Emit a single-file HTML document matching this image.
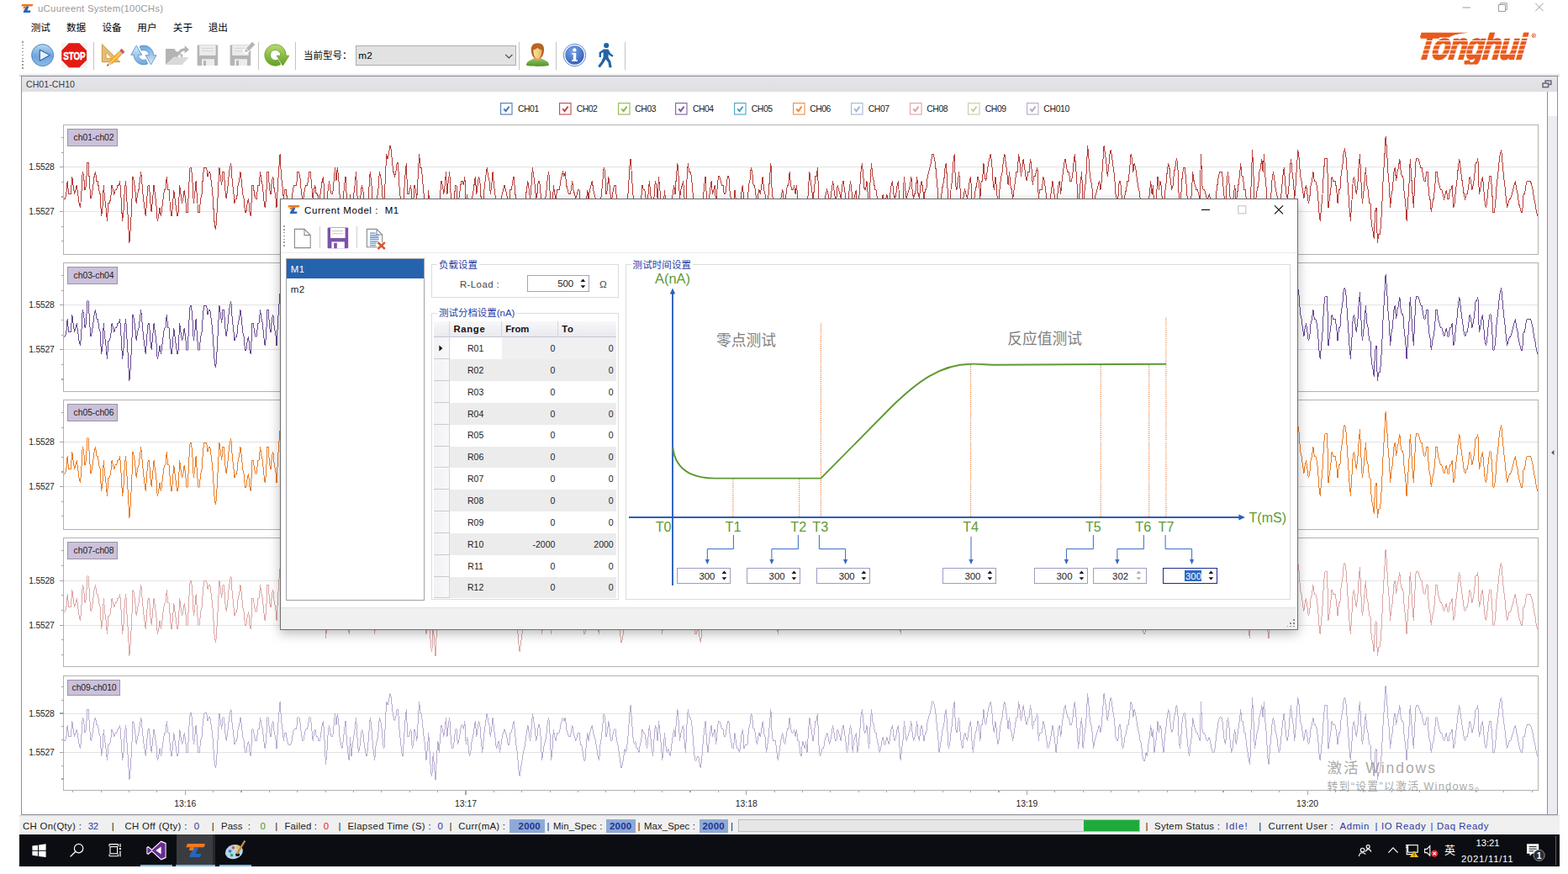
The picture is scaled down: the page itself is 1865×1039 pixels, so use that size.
<!DOCTYPE html><html lang="zh"><head><meta charset="utf-8"><title>uCuureent System(100CHs)</title><style>html,body{margin:0;padding:0;background:#fff}body{width:1865px;height:1039px;overflow:hidden;position:relative;font-family:"Liberation Sans","Noto Sans CJK SC",sans-serif}div,span{position:absolute;white-space:pre}svg{overflow:visible}</style></head><body>
<svg style="position:absolute;left:25px;top:5px" width="14.5" height="10" viewBox="0 0 14.5 10"><path d="M1.2 0H14.5L13.6 2.6H0.2Z" fill="#f07820"/><path d="M6.4 2.6H9.6L7.4 7.6H11.6L10.8 10H2.6L3.4 7.6Z" fill="#2a64b4"/><path d="M3.2 2.6H6.4L5.4 5H2.4Z" fill="#f07820"/></svg>
<span id="t1" style="top:2.20px;font-size:11.4px;line-height:16px;height:16px;color:#9a9a9a;left:45.00px;letter-spacing:0.257px;">uCuureent System(100CHs)</span>
<svg style="position:absolute;left:1735px;top:0" width="110" height="20" viewBox="0 0 110 20" fill="none" stroke="#9b9b9b" stroke-width="1"><path d="M4.6 9H14"/><path d="M47.5 5.5H55.5V13.5H47.5Z"/><path d="M49.5 5.5V3.7H57.3V11.5H55.5"/><path d="M91.3 3.8L100.7 13.2M100.7 3.8L91.3 13.2"/></svg>
<span id="t2" style="top:24.60px;font-size:11.6px;line-height:16px;height:16px;color:#000;left:36.70px;">测试</span>
<span id="t3" style="top:24.60px;font-size:11.6px;line-height:16px;height:16px;color:#000;left:79.00px;">数据</span>
<span id="t4" style="top:24.60px;font-size:11.6px;line-height:16px;height:16px;color:#000;left:121.50px;">设备</span>
<span id="t5" style="top:24.60px;font-size:11.6px;line-height:16px;height:16px;color:#000;left:163.30px;">用户</span>
<span id="t6" style="top:24.60px;font-size:11.6px;line-height:16px;height:16px;color:#000;left:205.80px;">关于</span>
<span id="t7" style="top:24.60px;font-size:11.6px;line-height:16px;height:16px;color:#000;left:247.70px;">退出</span>
<div style="left:23px;top:86.5px;width:1832px;height:4px;background:linear-gradient(#fff,#e9e9ec 50%,#c9c9ce)"></div>
<div style="left:26px;top:49px;width:1.6px;height:1.6px;background:#9c9c9c"></div>
<div style="left:26px;top:52.9px;width:1.6px;height:1.6px;background:#9c9c9c"></div>
<div style="left:26px;top:56.8px;width:1.6px;height:1.6px;background:#9c9c9c"></div>
<div style="left:26px;top:60.7px;width:1.6px;height:1.6px;background:#9c9c9c"></div>
<div style="left:26px;top:64.6px;width:1.6px;height:1.6px;background:#9c9c9c"></div>
<div style="left:26px;top:68.5px;width:1.6px;height:1.6px;background:#9c9c9c"></div>
<div style="left:26px;top:72.4px;width:1.6px;height:1.6px;background:#9c9c9c"></div>
<div style="left:26px;top:76.3px;width:1.6px;height:1.6px;background:#9c9c9c"></div>
<div style="left:26px;top:80.2px;width:1.6px;height:1.6px;background:#9c9c9c"></div>
<div style="left:110.7px;top:49.8px;width:1.2px;height:32.8px;background:#c4c4c4"></div>
<div style="left:306.9px;top:49.8px;width:1.2px;height:32.8px;background:#c4c4c4"></div>
<div style="left:350.8px;top:49.8px;width:1.2px;height:32.8px;background:#c4c4c4"></div>
<div style="left:617.3px;top:49.8px;width:1.2px;height:32.8px;background:#c4c4c4"></div>
<div style="left:661px;top:49.8px;width:1.2px;height:32.8px;background:#c4c4c4"></div>
<div style="left:742.9px;top:49.8px;width:1.2px;height:32.8px;background:#c4c4c4"></div>
<svg style="position:absolute;left:36px;top:51px" width="30" height="30" viewBox="0 0 30 30"><defs><linearGradient id="gp" x1="0" y1="0" x2="0" y2="1"><stop offset="0" stop-color="#b9d7f0"/><stop offset=".55" stop-color="#6ea6dc"/><stop offset="1" stop-color="#8cbbe6"/></linearGradient></defs><circle cx="14.6" cy="14.6" r="13" fill="url(#gp)" stroke="#4d86c4" stroke-width="1"/><path d="M11.3 8.2V21.2L23.4 14.6Z" fill="#e8f1fb" stroke="#2f63a8" stroke-width="1.1" stroke-linejoin="round"/></svg>
<svg style="position:absolute;left:72px;top:50px" width="33" height="32" viewBox="0 0 33 32"><rect x="1" y="1" width="31" height="30" fill="#f3f3f3"/><path d="M9.9 1.3H22.3L31 10V21.6L22.3 30.2H9.9L1.3 21.6V10Z" fill="#e41a12"/><text x="16.4" y="20.9" font-family="Liberation Sans,sans-serif" font-weight="700" font-size="13.4" fill="#fff" text-anchor="middle" textLength="26.4" lengthAdjust="spacingAndGlyphs" stroke="#fff" stroke-width=".55">STOP</text></svg>
<svg style="position:absolute;left:119px;top:50px" width="32" height="32" viewBox="0 0 32 32"><path d="M2.4 2.7V23.6H23.7Z" fill="#e6be78" stroke="#c8963c" stroke-width="1"/><path d="M7.2 12.5V19.4H14.2Z" fill="#fff" stroke="#c8963c" stroke-width=".8"/><g transform="translate(25.4,11.8) rotate(46) scale(1.12,1)"><rect x="-2.4" y="-3" width="4.8" height="3.6" fill="#d9534f"/><rect x="-2.4" y=".6" width="4.8" height="1.8" fill="#b9c4d0"/><rect x="-2.4" y="2.4" width="4.8" height="16" fill="#f2a830"/><rect x="-.8" y="2.4" width="1.6" height="16" fill="#f8cf6a"/><path d="M-2.4 18.4H2.4L0 24Z" fill="#e8c9a0"/><path d="M-.9 21.8H.9L0 24Z" fill="#334"/></g></svg>
<svg style="position:absolute;left:154px;top:51px" width="34" height="30" viewBox="0 0 34 30"><defs><linearGradient id="gr" x1="0" y1="0" x2="0" y2="1"><stop offset="0" stop-color="#dcedf9"/><stop offset="1" stop-color="#6aa5dc"/></linearGradient></defs><g fill="url(#gr)" stroke="#5088c6" stroke-width=".8" stroke-linejoin="round"><path d="M8.2 3.2L14.7 14.3H10.7A6.1 6.1 0 0 0 19.4 19.8L21.7 24.8A11.6 11.6 0 0 1 5.2 14.3H1.8Z"/><path d="M8.2 3.2L14.7 14.3H10.7A6.1 6.1 0 0 0 19.4 19.8L21.7 24.8A11.6 11.6 0 0 1 5.2 14.3H1.8Z" transform="rotate(180 16.9 14.5)"/></g></svg>
<svg style="position:absolute;left:195px;top:51px" width="32" height="28" viewBox="0 0 32 28"><path d="M2 7H12.6L14.4 10.2H17V16.8H12L2 26Z" fill="#b4b4b4"/><path d="M2.6 26L12 17H29.6L21.6 26Z" fill="#d9d9d9"/><path d="M16.4 14.6C16.6 9.4 19.8 6.4 24.6 6.2V3L30 8L24.6 12.6V9.6C21.4 9.6 19.6 11.2 19.4 14.6Z" fill="#b4b4b4"/><path d="M19.8 16.8V13.4H22.2V16.8Z" fill="#b4b4b4"/></svg>
<svg style="position:absolute;left:234.4px;top:52.8px" width="30" height="26" viewBox="0 0 30 26"><rect x=".6" y=".4" width="24.6" height="24.6" rx="1.2" fill="#b5b5b5"/><rect x="3.2" y=".9" width="19.4" height="12" fill="#ececec"/><path d="M6 4.4H19.6M6 7.6H19.6" stroke="#cfcfcf" stroke-width=".8"/><rect x="6" y="17.2" width="15" height="7.8" fill="#ececec"/><rect x="8" y="19" width="3" height="6" fill="#b5b5b5"/></svg>
<svg style="position:absolute;left:272.6px;top:52.8px" width="30" height="26" viewBox="0 0 30 26"><rect x=".6" y=".4" width="24.6" height="24.6" rx="1.2" fill="#b5b5b5"/><rect x="3.2" y=".9" width="19.4" height="12" fill="#ececec"/><path d="M6 4.4H19.6M6 7.6H19.6" stroke="#cfcfcf" stroke-width=".8"/><rect x="6" y="17.2" width="15" height="7.8" fill="#ececec"/><rect x="8" y="19" width="3" height="6" fill="#b5b5b5"/><g transform="translate(26.6,0.6) rotate(45)"><rect x="-3.2" y="-3.4" width="6.4" height="16.4" fill="#fff"/><rect x="-2.3" y="-3" width="4.6" height="10.4" fill="#b5b5b5"/><path d="M-2.3 8.2H2.3L0 12Z" fill="#b5b5b5"/></g></svg>
<svg style="position:absolute;left:313px;top:51px" width="33" height="30" viewBox="0 0 33 30"><defs><linearGradient id="gg" x1="0" y1="0" x2="0" y2="1"><stop offset="0" stop-color="#b8db6e"/><stop offset="1" stop-color="#62a024"/></linearGradient></defs><path d="M16.2 15.2H20.7A6.2 6.2 0 1 0 17.6 19.9L20.8 25.5A12.65 12.65 0 1 1 27.15 15.2H30.8L23.5 27Z" fill="url(#gg)" stroke="#5e9a22" stroke-width=".8" stroke-linejoin="round"/></svg>
<span id="t8" style="top:58.00px;font-size:11.5px;line-height:16px;height:16px;color:#000;left:361.00px;">当前型号：</span>
<div style="left:422.8px;top:54.2px;width:191px;height:23.6px;background:#e2e2e2;border:1px solid #adadad;box-sizing:border-box"></div>
<span id="t9" style="top:57.70px;font-size:11.8px;line-height:17px;height:17px;color:#000;left:426.30px;letter-spacing:0.109px;">m2</span>
<svg style="position:absolute;left:600px;top:63px" width="11" height="8" viewBox="0 0 11 8"><path d="M1.2 1.8L5.3 5.9L9.4 1.8" fill="none" stroke="#444" stroke-width="1.1"/></svg>
<svg style="position:absolute;left:624px;top:50px" width="31" height="31" viewBox="0 0 31 31"><defs><linearGradient id="gu" x1="0" y1="0" x2="0" y2="1"><stop offset="0" stop-color="#8cc45c"/><stop offset="1" stop-color="#4f922c"/></linearGradient><linearGradient id="gf" x1="0" y1="0" x2="1" y2="0"><stop offset="0" stop-color="#fbe3a6"/><stop offset="1" stop-color="#f0b860"/></linearGradient></defs><path d="M2 27.6C2 22.8 7 21.4 11.2 19.8H19.6C23.8 21.4 29 22.8 29 27.6C29 29.4 2 29.4 2 27.6Z" fill="url(#gu)"/><path d="M11.2 16.8H19.6V20.4C17.6 22.4 13.2 22.4 11.2 20.4Z" fill="#d9a05a"/><path d="M7.8 10.6C7 4.4 10.6 1.2 15.4 1.2C20.4 1.2 24 4.4 23 10.6C22.6 14 21.6 17 19.8 18.6H11C9.2 17 8.2 14 7.8 10.6Z" fill="#b86424"/><path d="M10.4 9.4C12.4 9 14 8.2 15.2 6.8C16.6 8.2 18.6 9 20.4 9.4C20.4 14.2 19 19.6 15.4 19.6C11.8 19.6 10.4 14.2 10.4 9.4Z" fill="url(#gf)"/></svg>
<svg style="position:absolute;left:668px;top:50px" width="31" height="31" viewBox="0 0 31 31"><defs><radialGradient id="gi" cx=".4" cy=".3" r=".8"><stop offset="0" stop-color="#7aa4e6"/><stop offset="1" stop-color="#2c58b4"/></radialGradient></defs><circle cx="15.5" cy="15.5" r="13.2" fill="#fff" stroke="#4a70c4" stroke-width=".9"/><circle cx="15.5" cy="15.5" r="11.2" fill="url(#gi)"/><circle cx="15.4" cy="9.4" r="2.1" fill="#fff"/><path d="M12 13H17.2V21.2H19V22.8H12V21.2H13.8V14.6H12Z" fill="#fff"/></svg>
<svg style="position:absolute;left:709px;top:49.5px" width="24" height="32" viewBox="0 0 24 32"><g fill="#2563a6"><circle cx="12.2" cy="4" r="3.1"/><path d="M9 8.6H14.4L17.2 13.6L20.6 16L19.4 17.8L15.2 15.2L14.6 14V18.6L17.4 23L18.6 30.2H15.4L14.4 24.2L11.6 20.6L8.4 25.6L4.6 30.4L2.2 28.6L6 23.4L8.6 18V12L6 13.6V18H3.6V12.2Z"/></g></svg>
<svg style="position:absolute;left:1680px;top:30px" width="160" height="54" viewBox="0 0 160 54"><clipPath id="lc"><rect x="0" y="8.8" width="160" height="37.8"/></clipPath><g clip-path="url(#lc)"><g transform="translate(3.2,40.3) skewX(-16) scale(.786,1)"><text x="0" y="0" font-family="Liberation Sans,sans-serif" font-weight="700" font-size="44" fill="#e95a1c" stroke="#e95a1c" stroke-width="2.2" letter-spacing="-1.2">Tonghui</text></g></g><path d="M10.6 8.8H67C56 9.8 48 11.6 44 14.4H8.8Z" fill="#e95a1c"/><path d="M0 18.6H150M0 23.8H150M0 29H150M0 34.2H150" stroke="#fff" stroke-width="1"/><circle cx="144.3" cy="12.2" r="2.3" fill="none" stroke="#e95a1c" stroke-width=".8"/><text x="144.3" y="13.6" font-family="Liberation Sans,sans-serif" font-size="3.6" font-weight="700" fill="#e95a1c" text-anchor="middle">R</text></svg>
<div style="left:25.2px;top:90.2px;width:1828px;height:878.4px;background:#fff;border:1px solid #8f8f99;box-sizing:border-box"></div>
<div style="left:26.2px;top:91.2px;width:1826px;height:18px;background:linear-gradient(#e6e6ea,#dedee3)"></div>
<span id="t10" style="top:92.50px;font-size:10.6px;line-height:15px;height:15px;color:#3c3c46;left:31.00px;letter-spacing:0.037px;">CH01-CH10</span>
<svg style="position:absolute;left:1834px;top:94.5px" width="12" height="10" viewBox="0 0 12 10"><g fill="none" stroke="#6c6c7c" stroke-width="1.6"><rect x="4.2" y="1" width="6.6" height="4.4"/><rect x="1" y="4" width="6.6" height="4.6" fill="#dfdfe4"/></g></svg>
<div style="left:1840px;top:109px;width:1px;height:858.6px;background:#8f8f99"></div>
<div style="left:1841px;top:138px;width:11.2px;height:829.6px;background:#ececf1"></div>
<svg style="position:absolute;left:1844px;top:534px" width="6" height="8" viewBox="0 0 6 8"><path d="M4.4 1L1.2 4L4.4 7Z" fill="#555"/></svg>
<svg style="position:absolute;left:595.4px;top:122.2px" width="15" height="15" viewBox="0 0 15 15"><rect x=".6" y=".6" width="13.4" height="13.4" fill="#fff" stroke="#4a7ab6" stroke-width="1.1"/><path d="M4.2 7.4L6.6 10.2L10.6 4.6" fill="none" stroke="#4a7ab6" stroke-width="2"/></svg>
<span id="t11" style="top:121.70px;font-size:10.4px;line-height:15px;height:15px;color:#222;left:616.00px;letter-spacing:-0.459px;">CH01</span>
<svg style="position:absolute;left:665.1px;top:122.2px" width="15" height="15" viewBox="0 0 15 15"><rect x=".6" y=".6" width="13.4" height="13.4" fill="#fff" stroke="#bb4c49" stroke-width="1.1"/><path d="M4.2 7.4L6.6 10.2L10.6 4.6" fill="none" stroke="#bb4c49" stroke-width="2"/></svg>
<span id="t12" style="top:121.70px;font-size:10.4px;line-height:15px;height:15px;color:#222;left:685.70px;letter-spacing:-0.459px;">CH02</span>
<svg style="position:absolute;left:734.7px;top:122.2px" width="15" height="15" viewBox="0 0 15 15"><rect x=".6" y=".6" width="13.4" height="13.4" fill="#fff" stroke="#94b553" stroke-width="1.1"/><path d="M4.2 7.4L6.6 10.2L10.6 4.6" fill="none" stroke="#94b553" stroke-width="2"/></svg>
<span id="t13" style="top:121.70px;font-size:10.4px;line-height:15px;height:15px;color:#222;left:755.30px;letter-spacing:-0.459px;">CH03</span>
<svg style="position:absolute;left:803.3px;top:122.2px" width="15" height="15" viewBox="0 0 15 15"><rect x=".6" y=".6" width="13.4" height="13.4" fill="#fff" stroke="#7b5f9e" stroke-width="1.1"/><path d="M4.2 7.4L6.6 10.2L10.6 4.6" fill="none" stroke="#7b5f9e" stroke-width="2"/></svg>
<span id="t14" style="top:121.70px;font-size:10.4px;line-height:15px;height:15px;color:#222;left:823.90px;letter-spacing:-0.459px;">CH04</span>
<svg style="position:absolute;left:873.2px;top:122.2px" width="15" height="15" viewBox="0 0 15 15"><rect x=".6" y=".6" width="13.4" height="13.4" fill="#fff" stroke="#48a6c0" stroke-width="1.1"/><path d="M4.2 7.4L6.6 10.2L10.6 4.6" fill="none" stroke="#48a6c0" stroke-width="2"/></svg>
<span id="t15" style="top:121.70px;font-size:10.4px;line-height:15px;height:15px;color:#222;left:893.80px;letter-spacing:-0.459px;">CH05</span>
<svg style="position:absolute;left:942.6px;top:122.2px" width="15" height="15" viewBox="0 0 15 15"><rect x=".6" y=".6" width="13.4" height="13.4" fill="#fff" stroke="#f08c3e" stroke-width="1.1"/><path d="M4.2 7.4L6.6 10.2L10.6 4.6" fill="none" stroke="#f08c3e" stroke-width="2"/></svg>
<span id="t16" style="top:121.70px;font-size:10.4px;line-height:15px;height:15px;color:#222;left:963.20px;letter-spacing:-0.459px;">CH06</span>
<svg style="position:absolute;left:1012.2px;top:122.2px" width="15" height="15" viewBox="0 0 15 15"><rect x=".6" y=".6" width="13.4" height="13.4" fill="#fff" stroke="#a3b5d5" stroke-width="1.1"/><path d="M4.2 7.4L6.6 10.2L10.6 4.6" fill="none" stroke="#a3b5d5" stroke-width="2"/></svg>
<span id="t17" style="top:121.70px;font-size:10.4px;line-height:15px;height:15px;color:#222;left:1032.80px;letter-spacing:-0.459px;">CH07</span>
<svg style="position:absolute;left:1081.7px;top:122.2px" width="15" height="15" viewBox="0 0 15 15"><rect x=".6" y=".6" width="13.4" height="13.4" fill="#fff" stroke="#d8a5a4" stroke-width="1.1"/><path d="M4.2 7.4L6.6 10.2L10.6 4.6" fill="none" stroke="#d8a5a4" stroke-width="2"/></svg>
<span id="t18" style="top:121.70px;font-size:10.4px;line-height:15px;height:15px;color:#222;left:1102.30px;letter-spacing:-0.459px;">CH08</span>
<svg style="position:absolute;left:1151.2px;top:122.2px" width="15" height="15" viewBox="0 0 15 15"><rect x=".6" y=".6" width="13.4" height="13.4" fill="#fff" stroke="#c1d2a6" stroke-width="1.1"/><path d="M4.2 7.4L6.6 10.2L10.6 4.6" fill="none" stroke="#c1d2a6" stroke-width="2"/></svg>
<span id="t19" style="top:121.70px;font-size:10.4px;line-height:15px;height:15px;color:#222;left:1171.80px;letter-spacing:-0.459px;">CH09</span>
<svg style="position:absolute;left:1220.7px;top:122.2px" width="15" height="15" viewBox="0 0 15 15"><rect x=".6" y=".6" width="13.4" height="13.4" fill="#fff" stroke="#b6abc7" stroke-width="1.1"/><path d="M4.2 7.4L6.6 10.2L10.6 4.6" fill="none" stroke="#b6abc7" stroke-width="2"/></svg>
<span id="t20" style="top:121.70px;font-size:10.4px;line-height:15px;height:15px;color:#222;left:1241.30px;letter-spacing:-0.339px;">CH010</span>
<div style="left:75.8px;top:198px;width:1754px;height:1px;background:#e3e3e3"></div>
<div style="left:75.8px;top:251px;width:1754px;height:1px;background:#e3e3e3"></div>
<div style="left:75.2px;top:147.9px;width:1755.2px;height:154.7px;border:1.2px solid #b1b1b1;box-sizing:border-box"></div>
<div style="left:73.2px;top:162.883px;width:2.6px;height:1.1px;background:#a6a6a6"></div>
<div style="left:73.2px;top:180.517px;width:2.6px;height:1.1px;background:#a6a6a6"></div>
<div style="left:71.2px;top:198.15px;width:4.6px;height:1.1px;background:#a6a6a6"></div>
<div style="left:73.2px;top:215.783px;width:2.6px;height:1.1px;background:#a6a6a6"></div>
<div style="left:73.2px;top:233.417px;width:2.6px;height:1.1px;background:#a6a6a6"></div>
<div style="left:71.2px;top:251.05px;width:4.6px;height:1.1px;background:#a6a6a6"></div>
<div style="left:73.2px;top:268.683px;width:2.6px;height:1.1px;background:#a6a6a6"></div>
<div style="left:73.2px;top:286.317px;width:2.6px;height:1.1px;background:#a6a6a6"></div>
<span id="t21" style="top:191.30px;font-size:10.4px;line-height:15px;height:15px;color:#222;left:34.30px;letter-spacing:-0.257px;">1.5528</span>
<span id="t22" style="top:244.20px;font-size:10.4px;line-height:15px;height:15px;color:#222;left:34.30px;letter-spacing:-0.257px;">1.5527</span>
<svg style="position:absolute;left:75.8px;top:148.5px" width="1754.0" height="153.5" viewBox="0 148.5 1754.0 153.5"><path d="M0.0 235.7L1.4 235.7L2.8 230.4L4.2 214.6L5.6 230.4L7.0 230.4L8.3 230.4L9.7 209.3L11.1 219.9L12.5 230.4L13.9 225.1L15.3 219.9L16.7 230.4L18.1 241.0L19.5 246.3L20.8 230.4L22.2 204.0L23.6 209.3L25.0 225.1L26.4 219.9L27.8 193.4L29.2 193.4L30.6 219.9L32.0 235.7L33.4 230.4L34.8 219.9L36.1 209.3L37.5 204.0L38.9 214.6L40.3 214.6L41.7 225.1L43.1 230.4L44.5 256.9L45.9 246.3L47.3 219.9L48.6 235.7L50.0 246.3L51.4 262.2L52.8 241.0L54.2 241.0L55.6 235.7L57.0 219.9L58.4 225.1L59.8 230.4L61.2 225.1L62.5 225.1L63.9 219.9L65.3 219.9L66.7 214.6L68.1 235.7L69.5 262.2L70.9 251.6L72.3 225.1L73.7 214.6L75.1 241.0L76.5 262.2L77.8 288.6L79.2 272.8L80.6 246.3L82.0 209.3L83.4 214.6L84.8 225.1L86.2 241.0L87.6 230.4L89.0 225.1L90.3 214.6L91.7 204.0L93.1 219.9L94.5 235.7L95.9 246.3L97.3 256.9L98.7 235.7L100.1 219.9L101.5 219.9L102.9 241.0L104.2 251.6L105.6 235.7L107.0 219.9L108.4 230.4L109.8 241.0L111.2 262.2L112.6 256.9L114.0 246.3L115.4 256.9L116.8 246.3L118.1 235.7L119.5 225.1L120.9 225.1L122.3 209.3L123.7 225.1L125.1 225.1L126.5 246.3L127.9 256.9L129.3 246.3L130.7 225.1L132.0 235.7L133.4 246.3L134.8 256.9L136.2 251.6L137.6 219.9L139.0 230.4L140.4 241.0L141.8 235.7L143.2 225.1L144.6 235.7L145.9 251.6L147.3 251.6L148.7 219.9L150.1 198.7L151.5 198.7L152.9 214.6L154.3 241.0L155.7 230.4L157.1 214.6L158.5 235.7L159.8 251.6L161.2 251.6L162.6 235.7L164.0 230.4L165.4 209.3L166.8 198.7L168.2 198.7L169.6 198.7L171.0 209.3L172.4 204.0L173.8 204.0L175.1 214.6L176.5 225.1L177.9 246.3L179.3 267.5L180.7 272.8L182.1 251.6L183.5 225.1L184.9 198.7L186.3 209.3L187.6 219.9L189.0 204.0L190.4 204.0L191.8 225.1L193.2 235.7L194.6 225.1L196.0 209.3L197.4 198.7L198.8 193.4L200.2 214.6L201.5 225.1L202.9 241.0L204.3 235.7L205.7 235.7L207.1 219.9L208.5 214.6L209.9 204.0L211.3 214.6L212.7 230.4L214.1 235.7L215.4 251.6L216.8 251.6L218.2 241.0L219.6 235.7L221.0 251.6L222.4 256.9L223.8 219.9L225.2 219.9L226.6 230.4L228.0 235.7L229.3 235.7L230.7 219.9L232.1 219.9L233.5 204.0L234.9 214.6L236.3 219.9L237.7 235.7L239.1 246.3L240.5 235.7L241.9 204.0L243.2 204.0L244.6 225.1L246.0 230.4L247.4 214.6L248.8 209.3L250.2 225.1L251.6 230.4L253.0 246.3L254.4 219.9L255.8 198.7L257.1 182.8L258.5 209.3L259.9 219.9L261.3 235.7L262.7 225.1L264.1 225.1L265.5 235.7L266.9 241.0L268.3 241.0L269.7 241.0L271.0 235.7L272.4 225.1L273.8 219.9L275.2 219.9L276.6 219.9L278.0 204.0L279.4 204.0L280.8 209.3L282.2 225.1L283.6 235.7L284.9 235.7L286.3 225.1L287.7 219.9L289.1 219.9L290.5 214.6L291.9 204.0L293.3 204.0L294.7 219.9L296.1 235.7L297.5 225.1L298.8 219.9L300.2 230.4L301.6 230.4L303.0 235.7L304.4 235.7L305.8 225.1L307.2 214.6L308.6 209.3L310.0 235.7L311.4 267.5L312.8 251.6L314.1 225.1L315.5 214.6L316.9 225.1L318.3 230.4L319.7 230.4L321.1 214.6L322.5 198.7L323.9 214.6L325.3 198.7L326.6 209.3L328.0 230.4L329.4 241.0L330.8 246.3L332.2 235.7L333.6 219.9L335.0 209.3L336.4 235.7L337.8 251.6L339.2 262.2L340.5 230.4L341.9 256.9L343.3 241.0L344.7 230.4L346.1 219.9L347.5 204.0L348.9 230.4L350.3 251.6L351.7 246.3L353.1 230.4L354.4 219.9L355.8 225.1L357.2 241.0L358.6 251.6L360.0 256.9L361.4 246.3L362.8 225.1L364.2 204.0L365.6 214.6L367.0 235.7L368.3 251.6L369.7 262.2L371.1 241.0L372.5 235.7L373.9 225.1L375.3 204.0L376.7 209.3L378.1 219.9L379.5 241.0L380.9 246.3L382.2 214.6L383.6 182.8L385.0 188.1L386.4 182.8L387.8 172.2L389.2 177.5L390.6 193.4L392.0 204.0L393.4 209.3L394.8 204.0L396.1 193.4L397.5 193.4L398.9 219.9L400.3 235.7L401.7 251.6L403.1 256.9L404.5 230.4L405.9 209.3L407.3 193.4L408.7 230.4L410.0 230.4L411.4 225.1L412.8 219.9L414.2 246.3L415.6 241.0L417.0 219.9L418.4 225.1L419.8 235.7L421.2 209.3L422.6 182.8L423.9 198.7L425.3 198.7L426.7 214.6L428.1 230.4L429.5 241.0L430.9 262.2L432.3 246.3L433.7 225.1L435.1 251.6L436.5 278.1L437.8 283.3L439.2 251.6L440.6 272.8L442.0 288.6L443.4 256.9L444.8 235.7L446.2 251.6L447.6 230.4L449.0 214.6L450.4 219.9L451.7 230.4L453.1 219.9L454.5 204.0L455.9 230.4L457.3 214.6L458.7 204.0L460.1 230.4L461.5 246.3L462.9 246.3L464.3 235.7L465.6 219.9L467.0 219.9L468.4 241.0L469.8 235.7L471.2 225.1L472.6 214.6L474.0 214.6L475.4 219.9L476.8 209.3L478.2 241.0L479.5 230.4L480.9 241.0L482.3 256.9L483.7 251.6L485.1 235.7L486.5 230.4L487.9 219.9L489.3 209.3L490.7 230.4L492.1 219.9L493.4 209.3L494.8 214.6L496.2 235.7L497.6 251.6L499.0 235.7L500.4 219.9L501.8 209.3L503.2 198.7L504.6 209.3L506.0 214.6L507.3 230.4L508.7 219.9L510.1 204.0L511.5 219.9L512.9 230.4L514.3 246.3L515.7 241.0L517.1 235.7L518.5 251.6L519.9 241.0L521.2 230.4L522.6 225.1L524.0 219.9L525.4 225.1L526.8 230.4L528.2 241.0L529.6 241.0L531.0 225.1L532.4 225.1L533.8 214.6L535.1 209.3L536.5 225.1L537.9 241.0L539.3 251.6L540.7 272.8L542.1 283.3L543.5 272.8L544.9 262.2L546.3 251.6L547.7 246.3L549.0 235.7L550.4 225.1L551.8 214.6L553.2 225.1L554.6 235.7L556.0 219.9L557.4 198.7L558.8 209.3L560.2 219.9L561.6 235.7L562.9 230.4L564.3 214.6L565.7 214.6L567.1 230.4L568.5 262.2L569.9 251.6L571.3 241.0L572.7 235.7L574.1 225.1L575.5 209.3L576.8 204.0L578.2 230.4L579.6 262.2L581.0 246.3L582.4 219.9L583.8 230.4L585.2 235.7L586.6 225.1L588.0 225.1L589.4 225.1L590.8 214.6L592.1 209.3L593.5 204.0L594.9 209.3L596.3 204.0L597.7 219.9L599.1 225.1L600.5 230.4L601.9 230.4L603.3 225.1L604.6 214.6L606.0 225.1L607.4 230.4L608.8 235.7L610.2 230.4L611.6 225.1L613.0 225.1L614.4 241.0L615.8 241.0L617.2 251.6L618.5 262.2L619.9 262.2L621.3 241.0L622.7 225.1L624.1 235.7L625.5 225.1L626.9 219.9L628.3 214.6L629.7 225.1L631.1 230.4L632.4 235.7L633.8 246.3L635.2 256.9L636.6 262.2L638.0 241.0L639.4 230.4L640.8 214.6L642.2 198.7L643.6 204.0L645.0 230.4L646.3 225.1L647.7 209.3L649.1 219.9L650.5 235.7L651.9 235.7L653.3 225.1L654.7 219.9L656.1 219.9L657.5 235.7L658.9 241.0L660.2 251.6L661.6 262.2L663.0 272.8L664.4 267.5L665.8 256.9L667.2 246.3L668.6 251.6L670.0 241.0L671.4 225.1L672.8 198.7L674.1 188.1L675.5 209.3L676.9 230.4L678.3 241.0L679.7 235.7L681.1 246.3L682.5 246.3L683.9 251.6L685.3 241.0L686.7 235.7L688.0 219.9L689.4 225.1L690.8 225.1L692.2 235.7L693.6 246.3L695.0 230.4L696.4 214.6L697.8 230.4L699.2 246.3L700.6 256.9L701.9 235.7L703.3 214.6L704.7 219.9L706.1 235.7L707.5 209.3L708.9 225.1L710.3 241.0L711.7 262.2L713.1 246.3L714.5 225.1L715.8 241.0L717.2 251.6L718.6 246.3L720.0 251.6L721.4 256.9L722.8 241.0L724.2 230.4L725.6 219.9L727.0 230.4L728.4 209.3L729.8 193.4L731.1 209.3L732.5 235.7L733.9 225.1L735.3 219.9L736.7 214.6L738.1 235.7L739.5 251.6L740.9 214.6L742.3 193.4L743.6 204.0L745.0 204.0L746.4 209.3L747.8 225.1L749.2 246.3L750.6 262.2L752.0 262.2L753.4 256.9L754.8 256.9L756.2 267.5L757.5 272.8L758.9 256.9L760.3 235.7L761.7 219.9L763.1 209.3L764.5 235.7L765.9 251.6L767.3 235.7L768.7 225.1L770.1 214.6L771.4 230.4L772.8 225.1L774.2 219.9L775.6 241.0L777.0 225.1L778.4 209.3L779.8 209.3L781.2 214.6L782.6 219.9L784.0 219.9L785.3 230.4L786.7 230.4L788.1 219.9L789.5 209.3L790.9 209.3L792.3 230.4L793.7 235.7L795.1 246.3L796.5 246.3L797.9 225.1L799.2 235.7L800.6 246.3L802.0 246.3L803.4 251.6L804.8 241.0L806.2 225.1L807.6 219.9L809.0 246.3L810.4 241.0L811.8 241.0L813.1 241.0L814.5 219.9L815.9 214.6L817.3 198.7L818.7 204.0L820.1 219.9L821.5 219.9L822.9 230.4L824.3 241.0L825.7 230.4L827.0 225.1L828.4 230.4L829.8 219.9L831.2 209.3L832.6 225.1L834.0 230.4L835.4 251.6L836.8 241.0L838.2 230.4L839.6 209.3L840.9 193.4L842.3 230.4L843.7 235.7L845.1 235.7L846.5 235.7L847.9 251.6L849.3 262.2L850.7 251.6L852.1 241.0L853.5 230.4L854.8 225.1L856.2 235.7L857.6 241.0L859.0 230.4L860.4 219.9L861.8 219.9L863.2 204.0L864.6 219.9L866.0 225.1L867.4 225.1L868.7 219.9L870.1 230.4L871.5 219.9L872.9 235.7L874.3 235.7L875.7 251.6L877.1 256.9L878.5 235.7L879.9 241.0L881.3 246.3L882.6 235.7L884.0 251.6L885.4 225.1L886.8 204.0L888.2 214.6L889.6 225.1L891.0 235.7L892.4 225.1L893.8 209.3L895.2 209.3L896.5 198.7L897.9 241.0L899.3 256.9L900.7 251.6L902.1 246.3L903.5 246.3L904.9 235.7L906.3 230.4L907.7 225.1L909.1 230.4L910.4 241.0L911.8 235.7L913.2 225.1L914.6 214.6L916.0 225.1L917.4 235.7L918.8 235.7L920.2 219.9L921.6 225.1L923.0 230.4L924.3 235.7L925.7 219.9L927.1 214.6L928.5 225.1L929.9 235.7L931.3 251.6L932.7 246.3L934.1 225.1L935.5 214.6L936.9 225.1L938.2 251.6L939.6 235.7L941.0 230.4L942.4 225.1L943.8 251.6L945.2 241.0L946.6 225.1L948.0 204.0L949.4 193.4L950.8 209.3L952.2 225.1L953.5 225.1L954.9 214.6L956.3 230.4L957.7 246.3L959.1 214.6L960.5 193.4L961.9 209.3L963.3 214.6L964.7 225.1L966.0 225.1L967.4 235.7L968.8 241.0L970.2 251.6L971.6 246.3L973.0 235.7L974.4 230.4L975.8 241.0L977.2 241.0L978.6 230.4L980.0 235.7L981.3 241.0L982.7 230.4L984.1 219.9L985.5 214.6L986.9 230.4L988.3 235.7L989.7 230.4L991.1 219.9L992.5 214.6L993.8 241.0L995.2 262.2L996.6 246.3L998.0 235.7L999.4 209.3L1000.8 225.1L1002.2 235.7L1003.6 230.4L1005.0 225.1L1006.4 219.9L1007.8 209.3L1009.1 225.1L1010.5 235.7L1011.9 230.4L1013.3 225.1L1014.7 209.3L1016.1 230.4L1017.5 235.7L1018.9 219.9L1020.3 214.6L1021.7 225.1L1023.0 235.7L1024.4 225.1L1025.8 225.1L1027.2 209.3L1028.6 204.0L1030.0 198.7L1031.4 193.4L1032.8 182.8L1034.2 182.8L1035.5 188.1L1036.9 198.7L1038.3 214.6L1039.7 230.4L1041.1 251.6L1042.5 241.0L1043.9 230.4L1045.3 219.9L1046.7 214.6L1048.1 198.7L1049.4 193.4L1050.8 219.9L1052.2 246.3L1053.6 241.0L1055.0 225.1L1056.4 214.6L1057.8 193.4L1059.2 182.8L1060.6 219.9L1062.0 225.1L1063.3 214.6L1064.7 204.0L1066.1 225.1L1067.5 241.0L1068.9 246.3L1070.3 230.4L1071.7 225.1L1073.1 230.4L1074.5 235.7L1075.9 225.1L1077.2 214.6L1078.6 209.3L1080.0 235.7L1081.4 251.6L1082.8 235.7L1084.2 225.1L1085.6 219.9L1087.0 209.3L1088.4 214.6L1089.8 235.7L1091.1 214.6L1092.5 214.6L1093.9 193.4L1095.3 209.3L1096.7 214.6L1098.1 204.0L1099.5 193.4L1100.9 188.1L1102.3 182.8L1103.7 193.4L1105.0 214.6L1106.4 225.1L1107.8 209.3L1109.2 219.9L1110.6 241.0L1112.0 235.7L1113.4 219.9L1114.8 209.3L1116.2 204.0L1117.6 188.1L1118.9 182.8L1120.3 193.4L1121.7 204.0L1123.1 219.9L1124.5 204.0L1125.9 219.9L1127.3 225.1L1128.7 235.7L1130.1 225.1L1131.5 214.6L1132.8 204.0L1134.2 204.0L1135.6 182.8L1137.0 193.4L1138.4 209.3L1139.8 198.7L1141.2 188.1L1142.6 198.7L1144.0 209.3L1145.4 214.6L1146.8 204.0L1148.1 204.0L1149.5 188.1L1150.9 198.7L1152.3 219.9L1153.7 209.3L1155.1 209.3L1156.5 204.0L1157.9 198.7L1159.3 235.7L1160.6 225.1L1162.0 225.1L1163.4 225.1L1164.8 209.3L1166.2 214.6L1167.6 225.1L1169.0 235.7L1170.4 246.3L1171.8 241.0L1173.2 235.7L1174.5 225.1L1175.9 214.6L1177.3 225.1L1178.7 235.7L1180.1 251.6L1181.5 235.7L1182.9 219.9L1184.3 214.6L1185.7 230.4L1187.1 214.6L1188.4 204.0L1189.8 193.4L1191.2 188.1L1192.6 198.7L1194.0 204.0L1195.4 204.0L1196.8 214.6L1198.2 214.6L1199.6 209.3L1201.0 193.4L1202.3 182.8L1203.7 198.7L1205.1 219.9L1206.5 246.3L1207.9 230.4L1209.3 214.6L1210.7 204.0L1212.1 246.3L1213.5 230.4L1214.9 219.9L1216.2 204.0L1217.6 172.2L1219.0 188.1L1220.4 209.3L1221.8 214.6L1223.2 225.1L1224.6 246.3L1226.0 235.7L1227.4 230.4L1228.8 225.1L1230.1 219.9L1231.5 214.6L1232.9 225.1L1234.3 214.6L1235.7 193.4L1237.1 172.2L1238.5 182.8L1239.9 193.4L1241.3 209.3L1242.7 198.7L1244.0 182.8L1245.4 177.5L1246.8 188.1L1248.2 198.7L1249.6 209.3L1251.0 230.4L1252.4 235.7L1253.8 235.7L1255.2 214.6L1256.6 214.6L1257.9 230.4L1259.3 246.3L1260.7 241.0L1262.1 230.4L1263.5 225.1L1264.9 214.6L1266.3 214.6L1267.7 198.7L1269.1 182.8L1270.5 188.1L1271.8 204.0L1273.2 193.4L1274.6 198.7L1276.0 209.3L1277.4 219.9L1278.8 225.1L1280.2 235.7L1281.6 241.0L1283.0 256.9L1284.4 262.2L1285.8 262.2L1287.1 251.6L1288.5 256.9L1289.9 241.0L1291.3 230.4L1292.7 214.6L1294.1 230.4L1295.5 219.9L1296.9 251.6L1298.3 241.0L1299.6 230.4L1301.0 209.3L1302.4 225.1L1303.8 214.6L1305.2 219.9L1306.6 241.0L1308.0 251.6L1309.4 230.4L1310.8 219.9L1312.2 204.0L1313.5 193.4L1314.9 198.7L1316.3 214.6L1317.7 225.1L1319.1 219.9L1320.5 204.0L1321.9 198.7L1323.3 188.1L1324.7 193.4L1326.1 230.4L1327.4 246.3L1328.8 230.4L1330.2 209.3L1331.6 198.7L1333.0 198.7L1334.4 209.3L1335.8 230.4L1337.2 246.3L1338.6 256.9L1340.0 241.0L1341.3 230.4L1342.7 204.0L1344.1 214.6L1345.5 219.9L1346.9 225.1L1348.3 225.1L1349.7 230.4L1351.1 235.7L1352.5 182.8L1353.9 219.9L1355.2 225.1L1356.6 225.1L1358.0 230.4L1359.4 235.7L1360.8 235.7L1362.2 230.4L1363.6 235.7L1365.0 246.3L1366.4 251.6L1367.8 251.6L1369.1 246.3L1370.5 230.4L1371.9 219.9L1373.3 209.3L1374.7 204.0L1376.1 204.0L1377.5 204.0L1378.9 219.9L1380.3 235.7L1381.7 241.0L1383.0 219.9L1384.4 204.0L1385.8 214.6L1387.2 235.7L1388.6 251.6L1390.0 246.3L1391.4 230.4L1392.8 219.9L1394.2 241.0L1395.6 230.4L1396.9 219.9L1398.3 209.3L1399.7 193.4L1401.1 209.3L1402.5 209.3L1403.9 225.1L1405.3 225.1L1406.7 241.0L1408.1 251.6L1409.5 262.2L1410.8 267.5L1412.2 214.6L1413.6 177.5L1415.0 209.3L1416.4 246.3L1417.8 235.7L1419.2 225.1L1420.6 219.9L1422.0 204.0L1423.4 198.7L1424.8 188.1L1426.1 204.0L1427.5 182.8L1428.9 209.3L1430.3 225.1L1431.7 256.9L1433.1 267.5L1434.5 246.3L1435.9 230.4L1437.3 209.3L1438.6 204.0L1440.0 214.6L1441.4 225.1L1442.8 230.4L1444.2 246.3L1445.6 251.6L1447.0 241.0L1448.4 225.1L1449.8 209.3L1451.2 198.7L1452.5 214.6L1453.9 230.4L1455.3 235.7L1456.7 225.1L1458.1 204.0L1459.5 188.1L1460.9 204.0L1462.3 214.6L1463.7 235.7L1465.1 219.9L1466.4 198.7L1467.8 177.5L1469.2 188.1L1470.6 209.3L1472.0 214.6L1473.4 225.1L1474.8 235.7L1476.2 225.1L1477.6 219.9L1479.0 230.4L1480.3 241.0L1481.7 235.7L1483.1 219.9L1484.5 214.6L1485.9 204.0L1487.3 214.6L1488.7 214.6L1490.1 219.9L1491.5 230.4L1492.9 251.6L1494.2 262.2L1495.6 246.3L1497.0 230.4L1498.4 204.0L1499.8 188.1L1501.2 188.1L1502.6 188.1L1504.0 246.3L1505.4 235.7L1506.8 225.1L1508.1 209.3L1509.5 214.6L1510.9 214.6L1512.3 214.6L1513.7 225.1L1515.1 241.0L1516.5 225.1L1517.9 225.1L1519.3 204.0L1520.7 198.7L1522.0 182.8L1523.4 177.5L1524.8 182.8L1526.2 204.0L1527.6 225.1L1529.0 246.3L1530.4 262.2L1531.8 241.0L1533.2 214.6L1534.6 209.3L1535.9 219.9L1537.3 230.4L1538.7 219.9L1540.1 198.7L1541.5 182.8L1542.9 214.6L1544.3 241.0L1545.7 230.4L1547.1 214.6L1548.5 198.7L1549.8 219.9L1551.2 225.1L1552.6 241.0L1554.0 241.0L1555.4 267.5L1556.8 272.8L1558.2 283.3L1559.6 251.6L1561.0 246.3L1562.4 288.6L1563.8 278.1L1565.1 278.1L1566.5 267.5L1567.9 241.0L1569.3 209.3L1570.7 188.1L1572.1 161.7L1573.5 177.5L1574.9 204.0L1576.3 219.9L1577.6 246.3L1579.0 230.4L1580.4 225.1L1581.8 204.0L1583.2 198.7L1584.6 214.6L1586.0 204.0L1587.4 198.7L1588.8 188.1L1590.2 204.0L1591.5 209.3L1592.9 209.3L1594.3 230.4L1595.7 241.0L1597.1 262.2L1598.5 241.0L1599.9 219.9L1601.3 188.1L1602.7 209.3L1604.1 230.4L1605.4 246.3L1606.8 214.6L1608.2 188.1L1609.6 188.1L1611.0 188.1L1612.4 193.4L1613.8 198.7L1615.2 198.7L1616.6 209.3L1618.0 214.6L1619.3 214.6L1620.7 204.0L1622.1 204.0L1623.5 230.4L1624.9 235.7L1626.3 251.6L1627.7 241.0L1629.1 235.7L1630.5 225.1L1631.9 204.0L1633.2 204.0L1634.6 214.6L1636.0 219.9L1637.4 225.1L1638.8 225.1L1640.2 230.4L1641.6 235.7L1643.0 230.4L1644.4 225.1L1645.8 235.7L1647.1 235.7L1648.5 225.1L1649.9 225.1L1651.3 219.9L1652.7 246.3L1654.1 241.0L1655.5 225.1L1656.9 214.6L1658.3 198.7L1659.7 188.1L1661.0 198.7L1662.4 209.3L1663.8 219.9L1665.2 230.4L1666.6 235.7L1668.0 230.4L1669.4 230.4L1670.8 219.9L1672.2 209.3L1673.6 214.6L1674.9 225.1L1676.3 219.9L1677.7 209.3L1679.1 193.4L1680.5 193.4L1681.9 188.1L1683.3 230.4L1684.7 225.1L1686.1 214.6L1687.5 209.3L1688.8 225.1L1690.2 241.0L1691.6 246.3L1693.0 235.7L1694.4 219.9L1695.8 209.3L1697.2 209.3L1698.6 225.1L1700.0 251.6L1701.4 251.6L1702.7 241.0L1704.1 219.9L1705.5 209.3L1706.9 193.4L1708.3 182.8L1709.7 177.5L1711.1 193.4L1712.5 209.3L1713.9 219.9L1715.3 235.7L1716.6 246.3L1718.0 241.0L1719.4 235.7L1720.8 235.7L1722.2 230.4L1723.6 225.1L1725.0 219.9L1726.4 214.6L1727.8 225.1L1729.2 230.4L1730.5 241.0L1731.9 246.3L1733.3 251.6L1734.7 251.6L1736.1 230.4L1737.5 230.4L1738.9 219.9L1740.3 214.6L1741.7 214.6L1743.1 214.6L1744.4 214.6L1745.8 219.9L1747.2 225.1L1748.6 235.7L1750.0 241.0L1751.4 251.6L1752.8 256.9" fill="none" stroke="#b53c38" stroke-width="1" stroke-linejoin="miter" shape-rendering="crispEdges"/></svg>
<div style="left:80.2px;top:153px;width:60px;height:20.6px;background:#ccc1da;border:1px solid #9b94a6;box-sizing:border-box"></div>
<span id="t23" style="top:156.00px;font-size:10.4px;line-height:15px;height:15px;color:#222;left:87.60px;letter-spacing:-0.066px;">ch01-ch02</span>
<div style="left:75.8px;top:362px;width:1754px;height:1px;background:#e3e3e3"></div>
<div style="left:75.8px;top:415px;width:1754px;height:1px;background:#e3e3e3"></div>
<div style="left:75.2px;top:312px;width:1755.2px;height:154px;border:1.2px solid #b1b1b1;box-sizing:border-box"></div>
<div style="left:73.2px;top:326.983px;width:2.6px;height:1.1px;background:#a6a6a6"></div>
<div style="left:73.2px;top:344.617px;width:2.6px;height:1.1px;background:#a6a6a6"></div>
<div style="left:71.2px;top:362.25px;width:4.6px;height:1.1px;background:#a6a6a6"></div>
<div style="left:73.2px;top:379.883px;width:2.6px;height:1.1px;background:#a6a6a6"></div>
<div style="left:73.2px;top:397.517px;width:2.6px;height:1.1px;background:#a6a6a6"></div>
<div style="left:71.2px;top:415.15px;width:4.6px;height:1.1px;background:#a6a6a6"></div>
<div style="left:73.2px;top:432.783px;width:2.6px;height:1.1px;background:#a6a6a6"></div>
<div style="left:73.2px;top:450.417px;width:2.6px;height:1.1px;background:#a6a6a6"></div>
<span id="t24" style="top:355.40px;font-size:10.4px;line-height:15px;height:15px;color:#222;left:34.30px;letter-spacing:-0.257px;">1.5528</span>
<span id="t25" style="top:408.30px;font-size:10.4px;line-height:15px;height:15px;color:#222;left:34.30px;letter-spacing:-0.257px;">1.5527</span>
<svg style="position:absolute;left:75.8px;top:312.6px" width="1754.0" height="152.8" viewBox="0 312.6 1754.0 152.8"><path d="M0.0 399.8L1.4 399.8L2.8 394.5L4.2 378.7L5.6 394.5L7.0 394.5L8.3 394.5L9.7 373.4L11.1 384.0L12.5 394.5L13.9 389.2L15.3 384.0L16.7 394.5L18.1 405.1L19.5 410.4L20.8 394.5L22.2 368.1L23.6 373.4L25.0 389.2L26.4 384.0L27.8 357.5L29.2 357.5L30.6 384.0L32.0 399.8L33.4 394.5L34.8 384.0L36.1 373.4L37.5 368.1L38.9 378.7L40.3 378.7L41.7 389.2L43.1 394.5L44.5 421.0L45.9 410.4L47.3 384.0L48.6 399.8L50.0 410.4L51.4 426.3L52.8 405.1L54.2 405.1L55.6 399.8L57.0 384.0L58.4 389.2L59.8 394.5L61.2 389.2L62.5 389.2L63.9 384.0L65.3 384.0L66.7 378.7L68.1 399.8L69.5 426.3L70.9 415.7L72.3 389.2L73.7 378.7L75.1 405.1L76.5 426.3L77.8 452.7L79.2 436.9L80.6 410.4L82.0 373.4L83.4 378.7L84.8 389.2L86.2 405.1L87.6 394.5L89.0 389.2L90.3 378.7L91.7 368.1L93.1 384.0L94.5 399.8L95.9 410.4L97.3 421.0L98.7 399.8L100.1 384.0L101.5 384.0L102.9 405.1L104.2 415.7L105.6 399.8L107.0 384.0L108.4 394.5L109.8 405.1L111.2 426.3L112.6 421.0L114.0 410.4L115.4 421.0L116.8 410.4L118.1 399.8L119.5 389.2L120.9 389.2L122.3 373.4L123.7 389.2L125.1 389.2L126.5 410.4L127.9 421.0L129.3 410.4L130.7 389.2L132.0 399.8L133.4 410.4L134.8 421.0L136.2 415.7L137.6 384.0L139.0 394.5L140.4 405.1L141.8 399.8L143.2 389.2L144.6 399.8L145.9 415.7L147.3 415.7L148.7 384.0L150.1 362.8L151.5 362.8L152.9 378.7L154.3 405.1L155.7 394.5L157.1 378.7L158.5 399.8L159.8 415.7L161.2 415.7L162.6 399.8L164.0 394.5L165.4 373.4L166.8 362.8L168.2 362.8L169.6 362.8L171.0 373.4L172.4 368.1L173.8 368.1L175.1 378.7L176.5 389.2L177.9 410.4L179.3 431.6L180.7 436.9L182.1 415.7L183.5 389.2L184.9 362.8L186.3 373.4L187.6 384.0L189.0 368.1L190.4 368.1L191.8 389.2L193.2 399.8L194.6 389.2L196.0 373.4L197.4 362.8L198.8 357.5L200.2 378.7L201.5 389.2L202.9 405.1L204.3 399.8L205.7 399.8L207.1 384.0L208.5 378.7L209.9 368.1L211.3 378.7L212.7 394.5L214.1 399.8L215.4 415.7L216.8 415.7L218.2 405.1L219.6 399.8L221.0 415.7L222.4 421.0L223.8 384.0L225.2 384.0L226.6 394.5L228.0 399.8L229.3 399.8L230.7 384.0L232.1 384.0L233.5 368.1L234.9 378.7L236.3 384.0L237.7 399.8L239.1 410.4L240.5 399.8L241.9 368.1L243.2 368.1L244.6 389.2L246.0 394.5L247.4 378.7L248.8 373.4L250.2 389.2L251.6 394.5L253.0 410.4L254.4 384.0L255.8 362.8L257.1 346.9L258.5 373.4L259.9 384.0L261.3 399.8L262.7 389.2L264.1 389.2L265.5 399.8L266.9 405.1L268.3 405.1L269.7 405.1L271.0 399.8L272.4 389.2L273.8 384.0L275.2 384.0L276.6 384.0L278.0 368.1L279.4 368.1L280.8 373.4L282.2 389.2L283.6 399.8L284.9 399.8L286.3 389.2L287.7 384.0L289.1 384.0L290.5 378.7L291.9 368.1L293.3 368.1L294.7 384.0L296.1 399.8L297.5 389.2L298.8 384.0L300.2 394.5L301.6 394.5L303.0 399.8L304.4 399.8L305.8 389.2L307.2 378.7L308.6 373.4L310.0 399.8L311.4 431.6L312.8 415.7L314.1 389.2L315.5 378.7L316.9 389.2L318.3 394.5L319.7 394.5L321.1 378.7L322.5 362.8L323.9 378.7L325.3 362.8L326.6 373.4L328.0 394.5L329.4 405.1L330.8 410.4L332.2 399.8L333.6 384.0L335.0 373.4L336.4 399.8L337.8 415.7L339.2 426.3L340.5 394.5L341.9 421.0L343.3 405.1L344.7 394.5L346.1 384.0L347.5 368.1L348.9 394.5L350.3 415.7L351.7 410.4L353.1 394.5L354.4 384.0L355.8 389.2L357.2 405.1L358.6 415.7L360.0 421.0L361.4 410.4L362.8 389.2L364.2 368.1L365.6 378.7L367.0 399.8L368.3 415.7L369.7 426.3L371.1 405.1L372.5 399.8L373.9 389.2L375.3 368.1L376.7 373.4L378.1 384.0L379.5 405.1L380.9 410.4L382.2 378.7L383.6 346.9L385.0 352.2L386.4 346.9L387.8 336.4L389.2 341.6L390.6 357.5L392.0 368.1L393.4 373.4L394.8 368.1L396.1 357.5L397.5 357.5L398.9 384.0L400.3 399.8L401.7 415.7L403.1 421.0L404.5 394.5L405.9 373.4L407.3 357.5L408.7 394.5L410.0 394.5L411.4 389.2L412.8 384.0L414.2 410.4L415.6 405.1L417.0 384.0L418.4 389.2L419.8 399.8L421.2 373.4L422.6 346.9L423.9 362.8L425.3 362.8L426.7 378.7L428.1 394.5L429.5 405.1L430.9 426.3L432.3 410.4L433.7 389.2L435.1 415.7L436.5 442.2L437.8 447.4L439.2 415.7L440.6 436.9L442.0 452.7L443.4 421.0L444.8 399.8L446.2 415.7L447.6 394.5L449.0 378.7L450.4 384.0L451.7 394.5L453.1 384.0L454.5 368.1L455.9 394.5L457.3 378.7L458.7 368.1L460.1 394.5L461.5 410.4L462.9 410.4L464.3 399.8L465.6 384.0L467.0 384.0L468.4 405.1L469.8 399.8L471.2 389.2L472.6 378.7L474.0 378.7L475.4 384.0L476.8 373.4L478.2 405.1L479.5 394.5L480.9 405.1L482.3 421.0L483.7 415.7L485.1 399.8L486.5 394.5L487.9 384.0L489.3 373.4L490.7 394.5L492.1 384.0L493.4 373.4L494.8 378.7L496.2 399.8L497.6 415.7L499.0 399.8L500.4 384.0L501.8 373.4L503.2 362.8L504.6 373.4L506.0 378.7L507.3 394.5L508.7 384.0L510.1 368.1L511.5 384.0L512.9 394.5L514.3 410.4L515.7 405.1L517.1 399.8L518.5 415.7L519.9 405.1L521.2 394.5L522.6 389.2L524.0 384.0L525.4 389.2L526.8 394.5L528.2 405.1L529.6 405.1L531.0 389.2L532.4 389.2L533.8 378.7L535.1 373.4L536.5 389.2L537.9 405.1L539.3 415.7L540.7 436.9L542.1 447.4L543.5 436.9L544.9 426.3L546.3 415.7L547.7 410.4L549.0 399.8L550.4 389.2L551.8 378.7L553.2 389.2L554.6 399.8L556.0 384.0L557.4 362.8L558.8 373.4L560.2 384.0L561.6 399.8L562.9 394.5L564.3 378.7L565.7 378.7L567.1 394.5L568.5 426.3L569.9 415.7L571.3 405.1L572.7 399.8L574.1 389.2L575.5 373.4L576.8 368.1L578.2 394.5L579.6 426.3L581.0 410.4L582.4 384.0L583.8 394.5L585.2 399.8L586.6 389.2L588.0 389.2L589.4 389.2L590.8 378.7L592.1 373.4L593.5 368.1L594.9 373.4L596.3 368.1L597.7 384.0L599.1 389.2L600.5 394.5L601.9 394.5L603.3 389.2L604.6 378.7L606.0 389.2L607.4 394.5L608.8 399.8L610.2 394.5L611.6 389.2L613.0 389.2L614.4 405.1L615.8 405.1L617.2 415.7L618.5 426.3L619.9 426.3L621.3 405.1L622.7 389.2L624.1 399.8L625.5 389.2L626.9 384.0L628.3 378.7L629.7 389.2L631.1 394.5L632.4 399.8L633.8 410.4L635.2 421.0L636.6 426.3L638.0 405.1L639.4 394.5L640.8 378.7L642.2 362.8L643.6 368.1L645.0 394.5L646.3 389.2L647.7 373.4L649.1 384.0L650.5 399.8L651.9 399.8L653.3 389.2L654.7 384.0L656.1 384.0L657.5 399.8L658.9 405.1L660.2 415.7L661.6 426.3L663.0 436.9L664.4 431.6L665.8 421.0L667.2 410.4L668.6 415.7L670.0 405.1L671.4 389.2L672.8 362.8L674.1 352.2L675.5 373.4L676.9 394.5L678.3 405.1L679.7 399.8L681.1 410.4L682.5 410.4L683.9 415.7L685.3 405.1L686.7 399.8L688.0 384.0L689.4 389.2L690.8 389.2L692.2 399.8L693.6 410.4L695.0 394.5L696.4 378.7L697.8 394.5L699.2 410.4L700.6 421.0L701.9 399.8L703.3 378.7L704.7 384.0L706.1 399.8L707.5 373.4L708.9 389.2L710.3 405.1L711.7 426.3L713.1 410.4L714.5 389.2L715.8 405.1L717.2 415.7L718.6 410.4L720.0 415.7L721.4 421.0L722.8 405.1L724.2 394.5L725.6 384.0L727.0 394.5L728.4 373.4L729.8 357.5L731.1 373.4L732.5 399.8L733.9 389.2L735.3 384.0L736.7 378.7L738.1 399.8L739.5 415.7L740.9 378.7L742.3 357.5L743.6 368.1L745.0 368.1L746.4 373.4L747.8 389.2L749.2 410.4L750.6 426.3L752.0 426.3L753.4 421.0L754.8 421.0L756.2 431.6L757.5 436.9L758.9 421.0L760.3 399.8L761.7 384.0L763.1 373.4L764.5 399.8L765.9 415.7L767.3 399.8L768.7 389.2L770.1 378.7L771.4 394.5L772.8 389.2L774.2 384.0L775.6 405.1L777.0 389.2L778.4 373.4L779.8 373.4L781.2 378.7L782.6 384.0L784.0 384.0L785.3 394.5L786.7 394.5L788.1 384.0L789.5 373.4L790.9 373.4L792.3 394.5L793.7 399.8L795.1 410.4L796.5 410.4L797.9 389.2L799.2 399.8L800.6 410.4L802.0 410.4L803.4 415.7L804.8 405.1L806.2 389.2L807.6 384.0L809.0 410.4L810.4 405.1L811.8 405.1L813.1 405.1L814.5 384.0L815.9 378.7L817.3 362.8L818.7 368.1L820.1 384.0L821.5 384.0L822.9 394.5L824.3 405.1L825.7 394.5L827.0 389.2L828.4 394.5L829.8 384.0L831.2 373.4L832.6 389.2L834.0 394.5L835.4 415.7L836.8 405.1L838.2 394.5L839.6 373.4L840.9 357.5L842.3 394.5L843.7 399.8L845.1 399.8L846.5 399.8L847.9 415.7L849.3 426.3L850.7 415.7L852.1 405.1L853.5 394.5L854.8 389.2L856.2 399.8L857.6 405.1L859.0 394.5L860.4 384.0L861.8 384.0L863.2 368.1L864.6 384.0L866.0 389.2L867.4 389.2L868.7 384.0L870.1 394.5L871.5 384.0L872.9 399.8L874.3 399.8L875.7 415.7L877.1 421.0L878.5 399.8L879.9 405.1L881.3 410.4L882.6 399.8L884.0 415.7L885.4 389.2L886.8 368.1L888.2 378.7L889.6 389.2L891.0 399.8L892.4 389.2L893.8 373.4L895.2 373.4L896.5 362.8L897.9 405.1L899.3 421.0L900.7 415.7L902.1 410.4L903.5 410.4L904.9 399.8L906.3 394.5L907.7 389.2L909.1 394.5L910.4 405.1L911.8 399.8L913.2 389.2L914.6 378.7L916.0 389.2L917.4 399.8L918.8 399.8L920.2 384.0L921.6 389.2L923.0 394.5L924.3 399.8L925.7 384.0L927.1 378.7L928.5 389.2L929.9 399.8L931.3 415.7L932.7 410.4L934.1 389.2L935.5 378.7L936.9 389.2L938.2 415.7L939.6 399.8L941.0 394.5L942.4 389.2L943.8 415.7L945.2 405.1L946.6 389.2L948.0 368.1L949.4 357.5L950.8 373.4L952.2 389.2L953.5 389.2L954.9 378.7L956.3 394.5L957.7 410.4L959.1 378.7L960.5 357.5L961.9 373.4L963.3 378.7L964.7 389.2L966.0 389.2L967.4 399.8L968.8 405.1L970.2 415.7L971.6 410.4L973.0 399.8L974.4 394.5L975.8 405.1L977.2 405.1L978.6 394.5L980.0 399.8L981.3 405.1L982.7 394.5L984.1 384.0L985.5 378.7L986.9 394.5L988.3 399.8L989.7 394.5L991.1 384.0L992.5 378.7L993.8 405.1L995.2 426.3L996.6 410.4L998.0 399.8L999.4 373.4L1000.8 389.2L1002.2 399.8L1003.6 394.5L1005.0 389.2L1006.4 384.0L1007.8 373.4L1009.1 389.2L1010.5 399.8L1011.9 394.5L1013.3 389.2L1014.7 373.4L1016.1 394.5L1017.5 399.8L1018.9 384.0L1020.3 378.7L1021.7 389.2L1023.0 399.8L1024.4 389.2L1025.8 389.2L1027.2 373.4L1028.6 368.1L1030.0 362.8L1031.4 357.5L1032.8 346.9L1034.2 346.9L1035.5 352.2L1036.9 362.8L1038.3 378.7L1039.7 394.5L1041.1 415.7L1042.5 405.1L1043.9 394.5L1045.3 384.0L1046.7 378.7L1048.1 362.8L1049.4 357.5L1050.8 384.0L1052.2 410.4L1053.6 405.1L1055.0 389.2L1056.4 378.7L1057.8 357.5L1059.2 346.9L1060.6 384.0L1062.0 389.2L1063.3 378.7L1064.7 368.1L1066.1 389.2L1067.5 405.1L1068.9 410.4L1070.3 394.5L1071.7 389.2L1073.1 394.5L1074.5 399.8L1075.9 389.2L1077.2 378.7L1078.6 373.4L1080.0 399.8L1081.4 415.7L1082.8 399.8L1084.2 389.2L1085.6 384.0L1087.0 373.4L1088.4 378.7L1089.8 399.8L1091.1 378.7L1092.5 378.7L1093.9 357.5L1095.3 373.4L1096.7 378.7L1098.1 368.1L1099.5 357.5L1100.9 352.2L1102.3 346.9L1103.7 357.5L1105.0 378.7L1106.4 389.2L1107.8 373.4L1109.2 384.0L1110.6 405.1L1112.0 399.8L1113.4 384.0L1114.8 373.4L1116.2 368.1L1117.6 352.2L1118.9 346.9L1120.3 357.5L1121.7 368.1L1123.1 384.0L1124.5 368.1L1125.9 384.0L1127.3 389.2L1128.7 399.8L1130.1 389.2L1131.5 378.7L1132.8 368.1L1134.2 368.1L1135.6 346.9L1137.0 357.5L1138.4 373.4L1139.8 362.8L1141.2 352.2L1142.6 362.8L1144.0 373.4L1145.4 378.7L1146.8 368.1L1148.1 368.1L1149.5 352.2L1150.9 362.8L1152.3 384.0L1153.7 373.4L1155.1 373.4L1156.5 368.1L1157.9 362.8L1159.3 399.8L1160.6 389.2L1162.0 389.2L1163.4 389.2L1164.8 373.4L1166.2 378.7L1167.6 389.2L1169.0 399.8L1170.4 410.4L1171.8 405.1L1173.2 399.8L1174.5 389.2L1175.9 378.7L1177.3 389.2L1178.7 399.8L1180.1 415.7L1181.5 399.8L1182.9 384.0L1184.3 378.7L1185.7 394.5L1187.1 378.7L1188.4 368.1L1189.8 357.5L1191.2 352.2L1192.6 362.8L1194.0 368.1L1195.4 368.1L1196.8 378.7L1198.2 378.7L1199.6 373.4L1201.0 357.5L1202.3 346.9L1203.7 362.8L1205.1 384.0L1206.5 410.4L1207.9 394.5L1209.3 378.7L1210.7 368.1L1212.1 410.4L1213.5 394.5L1214.9 384.0L1216.2 368.1L1217.6 336.4L1219.0 352.2L1220.4 373.4L1221.8 378.7L1223.2 389.2L1224.6 410.4L1226.0 399.8L1227.4 394.5L1228.8 389.2L1230.1 384.0L1231.5 378.7L1232.9 389.2L1234.3 378.7L1235.7 357.5L1237.1 336.4L1238.5 346.9L1239.9 357.5L1241.3 373.4L1242.7 362.8L1244.0 346.9L1245.4 341.6L1246.8 352.2L1248.2 362.8L1249.6 373.4L1251.0 394.5L1252.4 399.8L1253.8 399.8L1255.2 378.7L1256.6 378.7L1257.9 394.5L1259.3 410.4L1260.7 405.1L1262.1 394.5L1263.5 389.2L1264.9 378.7L1266.3 378.7L1267.7 362.8L1269.1 346.9L1270.5 352.2L1271.8 368.1L1273.2 357.5L1274.6 362.8L1276.0 373.4L1277.4 384.0L1278.8 389.2L1280.2 399.8L1281.6 405.1L1283.0 421.0L1284.4 426.3L1285.8 426.3L1287.1 415.7L1288.5 421.0L1289.9 405.1L1291.3 394.5L1292.7 378.7L1294.1 394.5L1295.5 384.0L1296.9 415.7L1298.3 405.1L1299.6 394.5L1301.0 373.4L1302.4 389.2L1303.8 378.7L1305.2 384.0L1306.6 405.1L1308.0 415.7L1309.4 394.5L1310.8 384.0L1312.2 368.1L1313.5 357.5L1314.9 362.8L1316.3 378.7L1317.7 389.2L1319.1 384.0L1320.5 368.1L1321.9 362.8L1323.3 352.2L1324.7 357.5L1326.1 394.5L1327.4 410.4L1328.8 394.5L1330.2 373.4L1331.6 362.8L1333.0 362.8L1334.4 373.4L1335.8 394.5L1337.2 410.4L1338.6 421.0L1340.0 405.1L1341.3 394.5L1342.7 368.1L1344.1 378.7L1345.5 384.0L1346.9 389.2L1348.3 389.2L1349.7 394.5L1351.1 399.8L1352.5 346.9L1353.9 384.0L1355.2 389.2L1356.6 389.2L1358.0 394.5L1359.4 399.8L1360.8 399.8L1362.2 394.5L1363.6 399.8L1365.0 410.4L1366.4 415.7L1367.8 415.7L1369.1 410.4L1370.5 394.5L1371.9 384.0L1373.3 373.4L1374.7 368.1L1376.1 368.1L1377.5 368.1L1378.9 384.0L1380.3 399.8L1381.7 405.1L1383.0 384.0L1384.4 368.1L1385.8 378.7L1387.2 399.8L1388.6 415.7L1390.0 410.4L1391.4 394.5L1392.8 384.0L1394.2 405.1L1395.6 394.5L1396.9 384.0L1398.3 373.4L1399.7 357.5L1401.1 373.4L1402.5 373.4L1403.9 389.2L1405.3 389.2L1406.7 405.1L1408.1 415.7L1409.5 426.3L1410.8 431.6L1412.2 378.7L1413.6 341.6L1415.0 373.4L1416.4 410.4L1417.8 399.8L1419.2 389.2L1420.6 384.0L1422.0 368.1L1423.4 362.8L1424.8 352.2L1426.1 368.1L1427.5 346.9L1428.9 373.4L1430.3 389.2L1431.7 421.0L1433.1 431.6L1434.5 410.4L1435.9 394.5L1437.3 373.4L1438.6 368.1L1440.0 378.7L1441.4 389.2L1442.8 394.5L1444.2 410.4L1445.6 415.7L1447.0 405.1L1448.4 389.2L1449.8 373.4L1451.2 362.8L1452.5 378.7L1453.9 394.5L1455.3 399.8L1456.7 389.2L1458.1 368.1L1459.5 352.2L1460.9 368.1L1462.3 378.7L1463.7 399.8L1465.1 384.0L1466.4 362.8L1467.8 341.6L1469.2 352.2L1470.6 373.4L1472.0 378.7L1473.4 389.2L1474.8 399.8L1476.2 389.2L1477.6 384.0L1479.0 394.5L1480.3 405.1L1481.7 399.8L1483.1 384.0L1484.5 378.7L1485.9 368.1L1487.3 378.7L1488.7 378.7L1490.1 384.0L1491.5 394.5L1492.9 415.7L1494.2 426.3L1495.6 410.4L1497.0 394.5L1498.4 368.1L1499.8 352.2L1501.2 352.2L1502.6 352.2L1504.0 410.4L1505.4 399.8L1506.8 389.2L1508.1 373.4L1509.5 378.7L1510.9 378.7L1512.3 378.7L1513.7 389.2L1515.1 405.1L1516.5 389.2L1517.9 389.2L1519.3 368.1L1520.7 362.8L1522.0 346.9L1523.4 341.6L1524.8 346.9L1526.2 368.1L1527.6 389.2L1529.0 410.4L1530.4 426.3L1531.8 405.1L1533.2 378.7L1534.6 373.4L1535.9 384.0L1537.3 394.5L1538.7 384.0L1540.1 362.8L1541.5 346.9L1542.9 378.7L1544.3 405.1L1545.7 394.5L1547.1 378.7L1548.5 362.8L1549.8 384.0L1551.2 389.2L1552.6 405.1L1554.0 405.1L1555.4 431.6L1556.8 436.9L1558.2 447.4L1559.6 415.7L1561.0 410.4L1562.4 452.7L1563.8 442.2L1565.1 442.2L1566.5 431.6L1567.9 405.1L1569.3 373.4L1570.7 352.2L1572.1 325.8L1573.5 341.6L1574.9 368.1L1576.3 384.0L1577.6 410.4L1579.0 394.5L1580.4 389.2L1581.8 368.1L1583.2 362.8L1584.6 378.7L1586.0 368.1L1587.4 362.8L1588.8 352.2L1590.2 368.1L1591.5 373.4L1592.9 373.4L1594.3 394.5L1595.7 405.1L1597.1 426.3L1598.5 405.1L1599.9 384.0L1601.3 352.2L1602.7 373.4L1604.1 394.5L1605.4 410.4L1606.8 378.7L1608.2 352.2L1609.6 352.2L1611.0 352.2L1612.4 357.5L1613.8 362.8L1615.2 362.8L1616.6 373.4L1618.0 378.7L1619.3 378.7L1620.7 368.1L1622.1 368.1L1623.5 394.5L1624.9 399.8L1626.3 415.7L1627.7 405.1L1629.1 399.8L1630.5 389.2L1631.9 368.1L1633.2 368.1L1634.6 378.7L1636.0 384.0L1637.4 389.2L1638.8 389.2L1640.2 394.5L1641.6 399.8L1643.0 394.5L1644.4 389.2L1645.8 399.8L1647.1 399.8L1648.5 389.2L1649.9 389.2L1651.3 384.0L1652.7 410.4L1654.1 405.1L1655.5 389.2L1656.9 378.7L1658.3 362.8L1659.7 352.2L1661.0 362.8L1662.4 373.4L1663.8 384.0L1665.2 394.5L1666.6 399.8L1668.0 394.5L1669.4 394.5L1670.8 384.0L1672.2 373.4L1673.6 378.7L1674.9 389.2L1676.3 384.0L1677.7 373.4L1679.1 357.5L1680.5 357.5L1681.9 352.2L1683.3 394.5L1684.7 389.2L1686.1 378.7L1687.5 373.4L1688.8 389.2L1690.2 405.1L1691.6 410.4L1693.0 399.8L1694.4 384.0L1695.8 373.4L1697.2 373.4L1698.6 389.2L1700.0 415.7L1701.4 415.7L1702.7 405.1L1704.1 384.0L1705.5 373.4L1706.9 357.5L1708.3 346.9L1709.7 341.6L1711.1 357.5L1712.5 373.4L1713.9 384.0L1715.3 399.8L1716.6 410.4L1718.0 405.1L1719.4 399.8L1720.8 399.8L1722.2 394.5L1723.6 389.2L1725.0 384.0L1726.4 378.7L1727.8 389.2L1729.2 394.5L1730.5 405.1L1731.9 410.4L1733.3 415.7L1734.7 415.7L1736.1 394.5L1737.5 394.5L1738.9 384.0L1740.3 378.7L1741.7 378.7L1743.1 378.7L1744.4 378.7L1745.8 384.0L1747.2 389.2L1748.6 399.8L1750.0 405.1L1751.4 415.7L1752.8 421.0" fill="none" stroke="#684a92" stroke-width="1" stroke-linejoin="miter" shape-rendering="crispEdges"/></svg>
<div style="left:80.2px;top:317.2px;width:60px;height:20.6px;background:#ccc1da;border:1px solid #9b94a6;box-sizing:border-box"></div>
<span id="t26" style="top:320.20px;font-size:10.4px;line-height:15px;height:15px;color:#222;left:87.60px;letter-spacing:-0.066px;">ch03-ch04</span>
<div style="left:75.8px;top:525px;width:1754px;height:1px;background:#e3e3e3"></div>
<div style="left:75.8px;top:578px;width:1754px;height:1px;background:#e3e3e3"></div>
<div style="left:75.2px;top:474.9px;width:1755.2px;height:155px;border:1.2px solid #b1b1b1;box-sizing:border-box"></div>
<div style="left:73.2px;top:489.883px;width:2.6px;height:1.1px;background:#a6a6a6"></div>
<div style="left:73.2px;top:507.517px;width:2.6px;height:1.1px;background:#a6a6a6"></div>
<div style="left:71.2px;top:525.15px;width:4.6px;height:1.1px;background:#a6a6a6"></div>
<div style="left:73.2px;top:542.783px;width:2.6px;height:1.1px;background:#a6a6a6"></div>
<div style="left:73.2px;top:560.417px;width:2.6px;height:1.1px;background:#a6a6a6"></div>
<div style="left:71.2px;top:578.05px;width:4.6px;height:1.1px;background:#a6a6a6"></div>
<div style="left:73.2px;top:595.683px;width:2.6px;height:1.1px;background:#a6a6a6"></div>
<div style="left:73.2px;top:613.317px;width:2.6px;height:1.1px;background:#a6a6a6"></div>
<span id="t27" style="top:518.30px;font-size:10.4px;line-height:15px;height:15px;color:#222;left:34.30px;letter-spacing:-0.257px;">1.5528</span>
<span id="t28" style="top:571.20px;font-size:10.4px;line-height:15px;height:15px;color:#222;left:34.30px;letter-spacing:-0.257px;">1.5527</span>
<svg style="position:absolute;left:75.8px;top:475.5px" width="1754.0" height="153.8" viewBox="0 475.5 1754.0 153.8"><path d="M0.0 562.7L1.4 562.7L2.8 557.4L4.2 541.6L5.6 557.4L7.0 557.4L8.3 557.4L9.7 536.3L11.1 546.9L12.5 557.4L13.9 552.2L15.3 546.9L16.7 557.4L18.1 568.0L19.5 573.3L20.8 557.4L22.2 531.0L23.6 536.3L25.0 552.2L26.4 546.9L27.8 520.4L29.2 520.4L30.6 546.9L32.0 562.7L33.4 557.4L34.8 546.9L36.1 536.3L37.5 531.0L38.9 541.6L40.3 541.6L41.7 552.2L43.1 557.4L44.5 583.9L45.9 573.3L47.3 546.9L48.6 562.7L50.0 573.3L51.4 589.2L52.8 568.0L54.2 568.0L55.6 562.7L57.0 546.9L58.4 552.2L59.8 557.4L61.2 552.2L62.5 552.2L63.9 546.9L65.3 546.9L66.7 541.6L68.1 562.7L69.5 589.2L70.9 578.6L72.3 552.2L73.7 541.6L75.1 568.0L76.5 589.2L77.8 615.6L79.2 599.8L80.6 573.3L82.0 536.3L83.4 541.6L84.8 552.2L86.2 568.0L87.6 557.4L89.0 552.2L90.3 541.6L91.7 531.0L93.1 546.9L94.5 562.7L95.9 573.3L97.3 583.9L98.7 562.7L100.1 546.9L101.5 546.9L102.9 568.0L104.2 578.6L105.6 562.7L107.0 546.9L108.4 557.4L109.8 568.0L111.2 589.2L112.6 583.9L114.0 573.3L115.4 583.9L116.8 573.3L118.1 562.7L119.5 552.2L120.9 552.2L122.3 536.3L123.7 552.2L125.1 552.2L126.5 573.3L127.9 583.9L129.3 573.3L130.7 552.2L132.0 562.7L133.4 573.3L134.8 583.9L136.2 578.6L137.6 546.9L139.0 557.4L140.4 568.0L141.8 562.7L143.2 552.2L144.6 562.7L145.9 578.6L147.3 578.6L148.7 546.9L150.1 525.7L151.5 525.7L152.9 541.6L154.3 568.0L155.7 557.4L157.1 541.6L158.5 562.7L159.8 578.6L161.2 578.6L162.6 562.7L164.0 557.4L165.4 536.3L166.8 525.7L168.2 525.7L169.6 525.7L171.0 536.3L172.4 531.0L173.8 531.0L175.1 541.6L176.5 552.2L177.9 573.3L179.3 594.5L180.7 599.8L182.1 578.6L183.5 552.2L184.9 525.7L186.3 536.3L187.6 546.9L189.0 531.0L190.4 531.0L191.8 552.2L193.2 562.7L194.6 552.2L196.0 536.3L197.4 525.7L198.8 520.4L200.2 541.6L201.5 552.2L202.9 568.0L204.3 562.7L205.7 562.7L207.1 546.9L208.5 541.6L209.9 531.0L211.3 541.6L212.7 557.4L214.1 562.7L215.4 578.6L216.8 578.6L218.2 568.0L219.6 562.7L221.0 578.6L222.4 583.9L223.8 546.9L225.2 546.9L226.6 557.4L228.0 562.7L229.3 562.7L230.7 546.9L232.1 546.9L233.5 531.0L234.9 541.6L236.3 546.9L237.7 562.7L239.1 573.3L240.5 562.7L241.9 531.0L243.2 531.0L244.6 552.2L246.0 557.4L247.4 541.6L248.8 536.3L250.2 552.2L251.6 557.4L253.0 573.3L254.4 546.9L255.8 525.7L257.1 509.8L258.5 536.3L259.9 546.9L261.3 562.7L262.7 552.2L264.1 552.2L265.5 562.7L266.9 568.0L268.3 568.0L269.7 568.0L271.0 562.7L272.4 552.2L273.8 546.9L275.2 546.9L276.6 546.9L278.0 531.0L279.4 531.0L280.8 536.3L282.2 552.2L283.6 562.7L284.9 562.7L286.3 552.2L287.7 546.9L289.1 546.9L290.5 541.6L291.9 531.0L293.3 531.0L294.7 546.9L296.1 562.7L297.5 552.2L298.8 546.9L300.2 557.4L301.6 557.4L303.0 562.7L304.4 562.7L305.8 552.2L307.2 541.6L308.6 536.3L310.0 562.7L311.4 594.5L312.8 578.6L314.1 552.2L315.5 541.6L316.9 552.2L318.3 557.4L319.7 557.4L321.1 541.6L322.5 525.7L323.9 541.6L325.3 525.7L326.6 536.3L328.0 557.4L329.4 568.0L330.8 573.3L332.2 562.7L333.6 546.9L335.0 536.3L336.4 562.7L337.8 578.6L339.2 589.2L340.5 557.4L341.9 583.9L343.3 568.0L344.7 557.4L346.1 546.9L347.5 531.0L348.9 557.4L350.3 578.6L351.7 573.3L353.1 557.4L354.4 546.9L355.8 552.2L357.2 568.0L358.6 578.6L360.0 583.9L361.4 573.3L362.8 552.2L364.2 531.0L365.6 541.6L367.0 562.7L368.3 578.6L369.7 589.2L371.1 568.0L372.5 562.7L373.9 552.2L375.3 531.0L376.7 536.3L378.1 546.9L379.5 568.0L380.9 573.3L382.2 541.6L383.6 509.8L385.0 515.1L386.4 509.8L387.8 499.3L389.2 504.5L390.6 520.4L392.0 531.0L393.4 536.3L394.8 531.0L396.1 520.4L397.5 520.4L398.9 546.9L400.3 562.7L401.7 578.6L403.1 583.9L404.5 557.4L405.9 536.3L407.3 520.4L408.7 557.4L410.0 557.4L411.4 552.2L412.8 546.9L414.2 573.3L415.6 568.0L417.0 546.9L418.4 552.2L419.8 562.7L421.2 536.3L422.6 509.8L423.9 525.7L425.3 525.7L426.7 541.6L428.1 557.4L429.5 568.0L430.9 589.2L432.3 573.3L433.7 552.2L435.1 578.6L436.5 605.0L437.8 610.3L439.2 578.6L440.6 599.8L442.0 615.6L443.4 583.9L444.8 562.7L446.2 578.6L447.6 557.4L449.0 541.6L450.4 546.9L451.7 557.4L453.1 546.9L454.5 531.0L455.9 557.4L457.3 541.6L458.7 531.0L460.1 557.4L461.5 573.3L462.9 573.3L464.3 562.7L465.6 546.9L467.0 546.9L468.4 568.0L469.8 562.7L471.2 552.2L472.6 541.6L474.0 541.6L475.4 546.9L476.8 536.3L478.2 568.0L479.5 557.4L480.9 568.0L482.3 583.9L483.7 578.6L485.1 562.7L486.5 557.4L487.9 546.9L489.3 536.3L490.7 557.4L492.1 546.9L493.4 536.3L494.8 541.6L496.2 562.7L497.6 578.6L499.0 562.7L500.4 546.9L501.8 536.3L503.2 525.7L504.6 536.3L506.0 541.6L507.3 557.4L508.7 546.9L510.1 531.0L511.5 546.9L512.9 557.4L514.3 573.3L515.7 568.0L517.1 562.7L518.5 578.6L519.9 568.0L521.2 557.4L522.6 552.2L524.0 546.9L525.4 552.2L526.8 557.4L528.2 568.0L529.6 568.0L531.0 552.2L532.4 552.2L533.8 541.6L535.1 536.3L536.5 552.2L537.9 568.0L539.3 578.6L540.7 599.8L542.1 610.3L543.5 599.8L544.9 589.2L546.3 578.6L547.7 573.3L549.0 562.7L550.4 552.2L551.8 541.6L553.2 552.2L554.6 562.7L556.0 546.9L557.4 525.7L558.8 536.3L560.2 546.9L561.6 562.7L562.9 557.4L564.3 541.6L565.7 541.6L567.1 557.4L568.5 589.2L569.9 578.6L571.3 568.0L572.7 562.7L574.1 552.2L575.5 536.3L576.8 531.0L578.2 557.4L579.6 589.2L581.0 573.3L582.4 546.9L583.8 557.4L585.2 562.7L586.6 552.2L588.0 552.2L589.4 552.2L590.8 541.6L592.1 536.3L593.5 531.0L594.9 536.3L596.3 531.0L597.7 546.9L599.1 552.2L600.5 557.4L601.9 557.4L603.3 552.2L604.6 541.6L606.0 552.2L607.4 557.4L608.8 562.7L610.2 557.4L611.6 552.2L613.0 552.2L614.4 568.0L615.8 568.0L617.2 578.6L618.5 589.2L619.9 589.2L621.3 568.0L622.7 552.2L624.1 562.7L625.5 552.2L626.9 546.9L628.3 541.6L629.7 552.2L631.1 557.4L632.4 562.7L633.8 573.3L635.2 583.9L636.6 589.2L638.0 568.0L639.4 557.4L640.8 541.6L642.2 525.7L643.6 531.0L645.0 557.4L646.3 552.2L647.7 536.3L649.1 546.9L650.5 562.7L651.9 562.7L653.3 552.2L654.7 546.9L656.1 546.9L657.5 562.7L658.9 568.0L660.2 578.6L661.6 589.2L663.0 599.8L664.4 594.5L665.8 583.9L667.2 573.3L668.6 578.6L670.0 568.0L671.4 552.2L672.8 525.7L674.1 515.1L675.5 536.3L676.9 557.4L678.3 568.0L679.7 562.7L681.1 573.3L682.5 573.3L683.9 578.6L685.3 568.0L686.7 562.7L688.0 546.9L689.4 552.2L690.8 552.2L692.2 562.7L693.6 573.3L695.0 557.4L696.4 541.6L697.8 557.4L699.2 573.3L700.6 583.9L701.9 562.7L703.3 541.6L704.7 546.9L706.1 562.7L707.5 536.3L708.9 552.2L710.3 568.0L711.7 589.2L713.1 573.3L714.5 552.2L715.8 568.0L717.2 578.6L718.6 573.3L720.0 578.6L721.4 583.9L722.8 568.0L724.2 557.4L725.6 546.9L727.0 557.4L728.4 536.3L729.8 520.4L731.1 536.3L732.5 562.7L733.9 552.2L735.3 546.9L736.7 541.6L738.1 562.7L739.5 578.6L740.9 541.6L742.3 520.4L743.6 531.0L745.0 531.0L746.4 536.3L747.8 552.2L749.2 573.3L750.6 589.2L752.0 589.2L753.4 583.9L754.8 583.9L756.2 594.5L757.5 599.8L758.9 583.9L760.3 562.7L761.7 546.9L763.1 536.3L764.5 562.7L765.9 578.6L767.3 562.7L768.7 552.2L770.1 541.6L771.4 557.4L772.8 552.2L774.2 546.9L775.6 568.0L777.0 552.2L778.4 536.3L779.8 536.3L781.2 541.6L782.6 546.9L784.0 546.9L785.3 557.4L786.7 557.4L788.1 546.9L789.5 536.3L790.9 536.3L792.3 557.4L793.7 562.7L795.1 573.3L796.5 573.3L797.9 552.2L799.2 562.7L800.6 573.3L802.0 573.3L803.4 578.6L804.8 568.0L806.2 552.2L807.6 546.9L809.0 573.3L810.4 568.0L811.8 568.0L813.1 568.0L814.5 546.9L815.9 541.6L817.3 525.7L818.7 531.0L820.1 546.9L821.5 546.9L822.9 557.4L824.3 568.0L825.7 557.4L827.0 552.2L828.4 557.4L829.8 546.9L831.2 536.3L832.6 552.2L834.0 557.4L835.4 578.6L836.8 568.0L838.2 557.4L839.6 536.3L840.9 520.4L842.3 557.4L843.7 562.7L845.1 562.7L846.5 562.7L847.9 578.6L849.3 589.2L850.7 578.6L852.1 568.0L853.5 557.4L854.8 552.2L856.2 562.7L857.6 568.0L859.0 557.4L860.4 546.9L861.8 546.9L863.2 531.0L864.6 546.9L866.0 552.2L867.4 552.2L868.7 546.9L870.1 557.4L871.5 546.9L872.9 562.7L874.3 562.7L875.7 578.6L877.1 583.9L878.5 562.7L879.9 568.0L881.3 573.3L882.6 562.7L884.0 578.6L885.4 552.2L886.8 531.0L888.2 541.6L889.6 552.2L891.0 562.7L892.4 552.2L893.8 536.3L895.2 536.3L896.5 525.7L897.9 568.0L899.3 583.9L900.7 578.6L902.1 573.3L903.5 573.3L904.9 562.7L906.3 557.4L907.7 552.2L909.1 557.4L910.4 568.0L911.8 562.7L913.2 552.2L914.6 541.6L916.0 552.2L917.4 562.7L918.8 562.7L920.2 546.9L921.6 552.2L923.0 557.4L924.3 562.7L925.7 546.9L927.1 541.6L928.5 552.2L929.9 562.7L931.3 578.6L932.7 573.3L934.1 552.2L935.5 541.6L936.9 552.2L938.2 578.6L939.6 562.7L941.0 557.4L942.4 552.2L943.8 578.6L945.2 568.0L946.6 552.2L948.0 531.0L949.4 520.4L950.8 536.3L952.2 552.2L953.5 552.2L954.9 541.6L956.3 557.4L957.7 573.3L959.1 541.6L960.5 520.4L961.9 536.3L963.3 541.6L964.7 552.2L966.0 552.2L967.4 562.7L968.8 568.0L970.2 578.6L971.6 573.3L973.0 562.7L974.4 557.4L975.8 568.0L977.2 568.0L978.6 557.4L980.0 562.7L981.3 568.0L982.7 557.4L984.1 546.9L985.5 541.6L986.9 557.4L988.3 562.7L989.7 557.4L991.1 546.9L992.5 541.6L993.8 568.0L995.2 589.2L996.6 573.3L998.0 562.7L999.4 536.3L1000.8 552.2L1002.2 562.7L1003.6 557.4L1005.0 552.2L1006.4 546.9L1007.8 536.3L1009.1 552.2L1010.5 562.7L1011.9 557.4L1013.3 552.2L1014.7 536.3L1016.1 557.4L1017.5 562.7L1018.9 546.9L1020.3 541.6L1021.7 552.2L1023.0 562.7L1024.4 552.2L1025.8 552.2L1027.2 536.3L1028.6 531.0L1030.0 525.7L1031.4 520.4L1032.8 509.8L1034.2 509.8L1035.5 515.1L1036.9 525.7L1038.3 541.6L1039.7 557.4L1041.1 578.6L1042.5 568.0L1043.9 557.4L1045.3 546.9L1046.7 541.6L1048.1 525.7L1049.4 520.4L1050.8 546.9L1052.2 573.3L1053.6 568.0L1055.0 552.2L1056.4 541.6L1057.8 520.4L1059.2 509.8L1060.6 546.9L1062.0 552.2L1063.3 541.6L1064.7 531.0L1066.1 552.2L1067.5 568.0L1068.9 573.3L1070.3 557.4L1071.7 552.2L1073.1 557.4L1074.5 562.7L1075.9 552.2L1077.2 541.6L1078.6 536.3L1080.0 562.7L1081.4 578.6L1082.8 562.7L1084.2 552.2L1085.6 546.9L1087.0 536.3L1088.4 541.6L1089.8 562.7L1091.1 541.6L1092.5 541.6L1093.9 520.4L1095.3 536.3L1096.7 541.6L1098.1 531.0L1099.5 520.4L1100.9 515.1L1102.3 509.8L1103.7 520.4L1105.0 541.6L1106.4 552.2L1107.8 536.3L1109.2 546.9L1110.6 568.0L1112.0 562.7L1113.4 546.9L1114.8 536.3L1116.2 531.0L1117.6 515.1L1118.9 509.8L1120.3 520.4L1121.7 531.0L1123.1 546.9L1124.5 531.0L1125.9 546.9L1127.3 552.2L1128.7 562.7L1130.1 552.2L1131.5 541.6L1132.8 531.0L1134.2 531.0L1135.6 509.8L1137.0 520.4L1138.4 536.3L1139.8 525.7L1141.2 515.1L1142.6 525.7L1144.0 536.3L1145.4 541.6L1146.8 531.0L1148.1 531.0L1149.5 515.1L1150.9 525.7L1152.3 546.9L1153.7 536.3L1155.1 536.3L1156.5 531.0L1157.9 525.7L1159.3 562.7L1160.6 552.2L1162.0 552.2L1163.4 552.2L1164.8 536.3L1166.2 541.6L1167.6 552.2L1169.0 562.7L1170.4 573.3L1171.8 568.0L1173.2 562.7L1174.5 552.2L1175.9 541.6L1177.3 552.2L1178.7 562.7L1180.1 578.6L1181.5 562.7L1182.9 546.9L1184.3 541.6L1185.7 557.4L1187.1 541.6L1188.4 531.0L1189.8 520.4L1191.2 515.1L1192.6 525.7L1194.0 531.0L1195.4 531.0L1196.8 541.6L1198.2 541.6L1199.6 536.3L1201.0 520.4L1202.3 509.8L1203.7 525.7L1205.1 546.9L1206.5 573.3L1207.9 557.4L1209.3 541.6L1210.7 531.0L1212.1 573.3L1213.5 557.4L1214.9 546.9L1216.2 531.0L1217.6 499.3L1219.0 515.1L1220.4 536.3L1221.8 541.6L1223.2 552.2L1224.6 573.3L1226.0 562.7L1227.4 557.4L1228.8 552.2L1230.1 546.9L1231.5 541.6L1232.9 552.2L1234.3 541.6L1235.7 520.4L1237.1 499.3L1238.5 509.8L1239.9 520.4L1241.3 536.3L1242.7 525.7L1244.0 509.8L1245.4 504.5L1246.8 515.1L1248.2 525.7L1249.6 536.3L1251.0 557.4L1252.4 562.7L1253.8 562.7L1255.2 541.6L1256.6 541.6L1257.9 557.4L1259.3 573.3L1260.7 568.0L1262.1 557.4L1263.5 552.2L1264.9 541.6L1266.3 541.6L1267.7 525.7L1269.1 509.8L1270.5 515.1L1271.8 531.0L1273.2 520.4L1274.6 525.7L1276.0 536.3L1277.4 546.9L1278.8 552.2L1280.2 562.7L1281.6 568.0L1283.0 583.9L1284.4 589.2L1285.8 589.2L1287.1 578.6L1288.5 583.9L1289.9 568.0L1291.3 557.4L1292.7 541.6L1294.1 557.4L1295.5 546.9L1296.9 578.6L1298.3 568.0L1299.6 557.4L1301.0 536.3L1302.4 552.2L1303.8 541.6L1305.2 546.9L1306.6 568.0L1308.0 578.6L1309.4 557.4L1310.8 546.9L1312.2 531.0L1313.5 520.4L1314.9 525.7L1316.3 541.6L1317.7 552.2L1319.1 546.9L1320.5 531.0L1321.9 525.7L1323.3 515.1L1324.7 520.4L1326.1 557.4L1327.4 573.3L1328.8 557.4L1330.2 536.3L1331.6 525.7L1333.0 525.7L1334.4 536.3L1335.8 557.4L1337.2 573.3L1338.6 583.9L1340.0 568.0L1341.3 557.4L1342.7 531.0L1344.1 541.6L1345.5 546.9L1346.9 552.2L1348.3 552.2L1349.7 557.4L1351.1 562.7L1352.5 509.8L1353.9 546.9L1355.2 552.2L1356.6 552.2L1358.0 557.4L1359.4 562.7L1360.8 562.7L1362.2 557.4L1363.6 562.7L1365.0 573.3L1366.4 578.6L1367.8 578.6L1369.1 573.3L1370.5 557.4L1371.9 546.9L1373.3 536.3L1374.7 531.0L1376.1 531.0L1377.5 531.0L1378.9 546.9L1380.3 562.7L1381.7 568.0L1383.0 546.9L1384.4 531.0L1385.8 541.6L1387.2 562.7L1388.6 578.6L1390.0 573.3L1391.4 557.4L1392.8 546.9L1394.2 568.0L1395.6 557.4L1396.9 546.9L1398.3 536.3L1399.7 520.4L1401.1 536.3L1402.5 536.3L1403.9 552.2L1405.3 552.2L1406.7 568.0L1408.1 578.6L1409.5 589.2L1410.8 594.5L1412.2 541.6L1413.6 504.5L1415.0 536.3L1416.4 573.3L1417.8 562.7L1419.2 552.2L1420.6 546.9L1422.0 531.0L1423.4 525.7L1424.8 515.1L1426.1 531.0L1427.5 509.8L1428.9 536.3L1430.3 552.2L1431.7 583.9L1433.1 594.5L1434.5 573.3L1435.9 557.4L1437.3 536.3L1438.6 531.0L1440.0 541.6L1441.4 552.2L1442.8 557.4L1444.2 573.3L1445.6 578.6L1447.0 568.0L1448.4 552.2L1449.8 536.3L1451.2 525.7L1452.5 541.6L1453.9 557.4L1455.3 562.7L1456.7 552.2L1458.1 531.0L1459.5 515.1L1460.9 531.0L1462.3 541.6L1463.7 562.7L1465.1 546.9L1466.4 525.7L1467.8 504.5L1469.2 515.1L1470.6 536.3L1472.0 541.6L1473.4 552.2L1474.8 562.7L1476.2 552.2L1477.6 546.9L1479.0 557.4L1480.3 568.0L1481.7 562.7L1483.1 546.9L1484.5 541.6L1485.9 531.0L1487.3 541.6L1488.7 541.6L1490.1 546.9L1491.5 557.4L1492.9 578.6L1494.2 589.2L1495.6 573.3L1497.0 557.4L1498.4 531.0L1499.8 515.1L1501.2 515.1L1502.6 515.1L1504.0 573.3L1505.4 562.7L1506.8 552.2L1508.1 536.3L1509.5 541.6L1510.9 541.6L1512.3 541.6L1513.7 552.2L1515.1 568.0L1516.5 552.2L1517.9 552.2L1519.3 531.0L1520.7 525.7L1522.0 509.8L1523.4 504.5L1524.8 509.8L1526.2 531.0L1527.6 552.2L1529.0 573.3L1530.4 589.2L1531.8 568.0L1533.2 541.6L1534.6 536.3L1535.9 546.9L1537.3 557.4L1538.7 546.9L1540.1 525.7L1541.5 509.8L1542.9 541.6L1544.3 568.0L1545.7 557.4L1547.1 541.6L1548.5 525.7L1549.8 546.9L1551.2 552.2L1552.6 568.0L1554.0 568.0L1555.4 594.5L1556.8 599.8L1558.2 610.3L1559.6 578.6L1561.0 573.3L1562.4 615.6L1563.8 605.0L1565.1 605.0L1566.5 594.5L1567.9 568.0L1569.3 536.3L1570.7 515.1L1572.1 488.7L1573.5 504.5L1574.9 531.0L1576.3 546.9L1577.6 573.3L1579.0 557.4L1580.4 552.2L1581.8 531.0L1583.2 525.7L1584.6 541.6L1586.0 531.0L1587.4 525.7L1588.8 515.1L1590.2 531.0L1591.5 536.3L1592.9 536.3L1594.3 557.4L1595.7 568.0L1597.1 589.2L1598.5 568.0L1599.9 546.9L1601.3 515.1L1602.7 536.3L1604.1 557.4L1605.4 573.3L1606.8 541.6L1608.2 515.1L1609.6 515.1L1611.0 515.1L1612.4 520.4L1613.8 525.7L1615.2 525.7L1616.6 536.3L1618.0 541.6L1619.3 541.6L1620.7 531.0L1622.1 531.0L1623.5 557.4L1624.9 562.7L1626.3 578.6L1627.7 568.0L1629.1 562.7L1630.5 552.2L1631.9 531.0L1633.2 531.0L1634.6 541.6L1636.0 546.9L1637.4 552.2L1638.8 552.2L1640.2 557.4L1641.6 562.7L1643.0 557.4L1644.4 552.2L1645.8 562.7L1647.1 562.7L1648.5 552.2L1649.9 552.2L1651.3 546.9L1652.7 573.3L1654.1 568.0L1655.5 552.2L1656.9 541.6L1658.3 525.7L1659.7 515.1L1661.0 525.7L1662.4 536.3L1663.8 546.9L1665.2 557.4L1666.6 562.7L1668.0 557.4L1669.4 557.4L1670.8 546.9L1672.2 536.3L1673.6 541.6L1674.9 552.2L1676.3 546.9L1677.7 536.3L1679.1 520.4L1680.5 520.4L1681.9 515.1L1683.3 557.4L1684.7 552.2L1686.1 541.6L1687.5 536.3L1688.8 552.2L1690.2 568.0L1691.6 573.3L1693.0 562.7L1694.4 546.9L1695.8 536.3L1697.2 536.3L1698.6 552.2L1700.0 578.6L1701.4 578.6L1702.7 568.0L1704.1 546.9L1705.5 536.3L1706.9 520.4L1708.3 509.8L1709.7 504.5L1711.1 520.4L1712.5 536.3L1713.9 546.9L1715.3 562.7L1716.6 573.3L1718.0 568.0L1719.4 562.7L1720.8 562.7L1722.2 557.4L1723.6 552.2L1725.0 546.9L1726.4 541.6L1727.8 552.2L1729.2 557.4L1730.5 568.0L1731.9 573.3L1733.3 578.6L1734.7 578.6L1736.1 557.4L1737.5 557.4L1738.9 546.9L1740.3 541.6L1741.7 541.6L1743.1 541.6L1744.4 541.6L1745.8 546.9L1747.2 552.2L1748.6 562.7L1750.0 568.0L1751.4 578.6L1752.8 583.9" fill="none" stroke="#ea7c22" stroke-width="1" stroke-linejoin="miter" shape-rendering="crispEdges"/></svg>
<div style="left:80.2px;top:480.2px;width:60px;height:20.6px;background:#ccc1da;border:1px solid #9b94a6;box-sizing:border-box"></div>
<span id="t29" style="top:483.20px;font-size:10.4px;line-height:15px;height:15px;color:#222;left:87.60px;letter-spacing:-0.066px;">ch05-ch06</span>
<div style="left:75.8px;top:690px;width:1754px;height:1px;background:#e3e3e3"></div>
<div style="left:75.8px;top:743px;width:1754px;height:1px;background:#e3e3e3"></div>
<div style="left:75.2px;top:639.4px;width:1755.2px;height:153.4px;border:1.2px solid #b1b1b1;box-sizing:border-box"></div>
<div style="left:73.2px;top:654.383px;width:2.6px;height:1.1px;background:#a6a6a6"></div>
<div style="left:73.2px;top:672.017px;width:2.6px;height:1.1px;background:#a6a6a6"></div>
<div style="left:71.2px;top:689.65px;width:4.6px;height:1.1px;background:#a6a6a6"></div>
<div style="left:73.2px;top:707.283px;width:2.6px;height:1.1px;background:#a6a6a6"></div>
<div style="left:73.2px;top:724.917px;width:2.6px;height:1.1px;background:#a6a6a6"></div>
<div style="left:71.2px;top:742.55px;width:4.6px;height:1.1px;background:#a6a6a6"></div>
<div style="left:73.2px;top:760.183px;width:2.6px;height:1.1px;background:#a6a6a6"></div>
<div style="left:73.2px;top:777.817px;width:2.6px;height:1.1px;background:#a6a6a6"></div>
<span id="t30" style="top:682.80px;font-size:10.4px;line-height:15px;height:15px;color:#222;left:34.30px;letter-spacing:-0.257px;">1.5528</span>
<span id="t31" style="top:735.70px;font-size:10.4px;line-height:15px;height:15px;color:#222;left:34.30px;letter-spacing:-0.257px;">1.5527</span>
<svg style="position:absolute;left:75.8px;top:640.0px" width="1754.0" height="152.2" viewBox="0 640.0 1754.0 152.2"><path d="M0.0 727.2L1.4 727.2L2.8 721.9L4.2 706.1L5.6 721.9L7.0 721.9L8.3 721.9L9.7 700.8L11.1 711.4L12.5 721.9L13.9 716.7L15.3 711.4L16.7 721.9L18.1 732.5L19.5 737.8L20.8 721.9L22.2 695.5L23.6 700.8L25.0 716.7L26.4 711.4L27.8 684.9L29.2 684.9L30.6 711.4L32.0 727.2L33.4 721.9L34.8 711.4L36.1 700.8L37.5 695.5L38.9 706.1L40.3 706.1L41.7 716.7L43.1 721.9L44.5 748.4L45.9 737.8L47.3 711.4L48.6 727.2L50.0 737.8L51.4 753.7L52.8 732.5L54.2 732.5L55.6 727.2L57.0 711.4L58.4 716.7L59.8 721.9L61.2 716.7L62.5 716.7L63.9 711.4L65.3 711.4L66.7 706.1L68.1 727.2L69.5 753.7L70.9 743.1L72.3 716.7L73.7 706.1L75.1 732.5L76.5 753.7L77.8 780.1L79.2 764.3L80.6 737.8L82.0 700.8L83.4 706.1L84.8 716.7L86.2 732.5L87.6 721.9L89.0 716.7L90.3 706.1L91.7 695.5L93.1 711.4L94.5 727.2L95.9 737.8L97.3 748.4L98.7 727.2L100.1 711.4L101.5 711.4L102.9 732.5L104.2 743.1L105.6 727.2L107.0 711.4L108.4 721.9L109.8 732.5L111.2 753.7L112.6 748.4L114.0 737.8L115.4 748.4L116.8 737.8L118.1 727.2L119.5 716.7L120.9 716.7L122.3 700.8L123.7 716.7L125.1 716.7L126.5 737.8L127.9 748.4L129.3 737.8L130.7 716.7L132.0 727.2L133.4 737.8L134.8 748.4L136.2 743.1L137.6 711.4L139.0 721.9L140.4 732.5L141.8 727.2L143.2 716.7L144.6 727.2L145.9 743.1L147.3 743.1L148.7 711.4L150.1 690.2L151.5 690.2L152.9 706.1L154.3 732.5L155.7 721.9L157.1 706.1L158.5 727.2L159.8 743.1L161.2 743.1L162.6 727.2L164.0 721.9L165.4 700.8L166.8 690.2L168.2 690.2L169.6 690.2L171.0 700.8L172.4 695.5L173.8 695.5L175.1 706.1L176.5 716.7L177.9 737.8L179.3 759.0L180.7 764.3L182.1 743.1L183.5 716.7L184.9 690.2L186.3 700.8L187.6 711.4L189.0 695.5L190.4 695.5L191.8 716.7L193.2 727.2L194.6 716.7L196.0 700.8L197.4 690.2L198.8 684.9L200.2 706.1L201.5 716.7L202.9 732.5L204.3 727.2L205.7 727.2L207.1 711.4L208.5 706.1L209.9 695.5L211.3 706.1L212.7 721.9L214.1 727.2L215.4 743.1L216.8 743.1L218.2 732.5L219.6 727.2L221.0 743.1L222.4 748.4L223.8 711.4L225.2 711.4L226.6 721.9L228.0 727.2L229.3 727.2L230.7 711.4L232.1 711.4L233.5 695.5L234.9 706.1L236.3 711.4L237.7 727.2L239.1 737.8L240.5 727.2L241.9 695.5L243.2 695.5L244.6 716.7L246.0 721.9L247.4 706.1L248.8 700.8L250.2 716.7L251.6 721.9L253.0 737.8L254.4 711.4L255.8 690.2L257.1 674.3L258.5 700.8L259.9 711.4L261.3 727.2L262.7 716.7L264.1 716.7L265.5 727.2L266.9 732.5L268.3 732.5L269.7 732.5L271.0 727.2L272.4 716.7L273.8 711.4L275.2 711.4L276.6 711.4L278.0 695.5L279.4 695.5L280.8 700.8L282.2 716.7L283.6 727.2L284.9 727.2L286.3 716.7L287.7 711.4L289.1 711.4L290.5 706.1L291.9 695.5L293.3 695.5L294.7 711.4L296.1 727.2L297.5 716.7L298.8 711.4L300.2 721.9L301.6 721.9L303.0 727.2L304.4 727.2L305.8 716.7L307.2 706.1L308.6 700.8L310.0 727.2L311.4 759.0L312.8 743.1L314.1 716.7L315.5 706.1L316.9 716.7L318.3 721.9L319.7 721.9L321.1 706.1L322.5 690.2L323.9 706.1L325.3 690.2L326.6 700.8L328.0 721.9L329.4 732.5L330.8 737.8L332.2 727.2L333.6 711.4L335.0 700.8L336.4 727.2L337.8 743.1L339.2 753.7L340.5 721.9L341.9 748.4L343.3 732.5L344.7 721.9L346.1 711.4L347.5 695.5L348.9 721.9L350.3 743.1L351.7 737.8L353.1 721.9L354.4 711.4L355.8 716.7L357.2 732.5L358.6 743.1L360.0 748.4L361.4 737.8L362.8 716.7L364.2 695.5L365.6 706.1L367.0 727.2L368.3 743.1L369.7 753.7L371.1 732.5L372.5 727.2L373.9 716.7L375.3 695.5L376.7 700.8L378.1 711.4L379.5 732.5L380.9 737.8L382.2 706.1L383.6 674.3L385.0 679.6L386.4 674.3L387.8 663.8L389.2 669.0L390.6 684.9L392.0 695.5L393.4 700.8L394.8 695.5L396.1 684.9L397.5 684.9L398.9 711.4L400.3 727.2L401.7 743.1L403.1 748.4L404.5 721.9L405.9 700.8L407.3 684.9L408.7 721.9L410.0 721.9L411.4 716.7L412.8 711.4L414.2 737.8L415.6 732.5L417.0 711.4L418.4 716.7L419.8 727.2L421.2 700.8L422.6 674.3L423.9 690.2L425.3 690.2L426.7 706.1L428.1 721.9L429.5 732.5L430.9 753.7L432.3 737.8L433.7 716.7L435.1 743.1L436.5 769.5L437.8 774.8L439.2 743.1L440.6 764.3L442.0 780.1L443.4 748.4L444.8 727.2L446.2 743.1L447.6 721.9L449.0 706.1L450.4 711.4L451.7 721.9L453.1 711.4L454.5 695.5L455.9 721.9L457.3 706.1L458.7 695.5L460.1 721.9L461.5 737.8L462.9 737.8L464.3 727.2L465.6 711.4L467.0 711.4L468.4 732.5L469.8 727.2L471.2 716.7L472.6 706.1L474.0 706.1L475.4 711.4L476.8 700.8L478.2 732.5L479.5 721.9L480.9 732.5L482.3 748.4L483.7 743.1L485.1 727.2L486.5 721.9L487.9 711.4L489.3 700.8L490.7 721.9L492.1 711.4L493.4 700.8L494.8 706.1L496.2 727.2L497.6 743.1L499.0 727.2L500.4 711.4L501.8 700.8L503.2 690.2L504.6 700.8L506.0 706.1L507.3 721.9L508.7 711.4L510.1 695.5L511.5 711.4L512.9 721.9L514.3 737.8L515.7 732.5L517.1 727.2L518.5 743.1L519.9 732.5L521.2 721.9L522.6 716.7L524.0 711.4L525.4 716.7L526.8 721.9L528.2 732.5L529.6 732.5L531.0 716.7L532.4 716.7L533.8 706.1L535.1 700.8L536.5 716.7L537.9 732.5L539.3 743.1L540.7 764.3L542.1 774.8L543.5 764.3L544.9 753.7L546.3 743.1L547.7 737.8L549.0 727.2L550.4 716.7L551.8 706.1L553.2 716.7L554.6 727.2L556.0 711.4L557.4 690.2L558.8 700.8L560.2 711.4L561.6 727.2L562.9 721.9L564.3 706.1L565.7 706.1L567.1 721.9L568.5 753.7L569.9 743.1L571.3 732.5L572.7 727.2L574.1 716.7L575.5 700.8L576.8 695.5L578.2 721.9L579.6 753.7L581.0 737.8L582.4 711.4L583.8 721.9L585.2 727.2L586.6 716.7L588.0 716.7L589.4 716.7L590.8 706.1L592.1 700.8L593.5 695.5L594.9 700.8L596.3 695.5L597.7 711.4L599.1 716.7L600.5 721.9L601.9 721.9L603.3 716.7L604.6 706.1L606.0 716.7L607.4 721.9L608.8 727.2L610.2 721.9L611.6 716.7L613.0 716.7L614.4 732.5L615.8 732.5L617.2 743.1L618.5 753.7L619.9 753.7L621.3 732.5L622.7 716.7L624.1 727.2L625.5 716.7L626.9 711.4L628.3 706.1L629.7 716.7L631.1 721.9L632.4 727.2L633.8 737.8L635.2 748.4L636.6 753.7L638.0 732.5L639.4 721.9L640.8 706.1L642.2 690.2L643.6 695.5L645.0 721.9L646.3 716.7L647.7 700.8L649.1 711.4L650.5 727.2L651.9 727.2L653.3 716.7L654.7 711.4L656.1 711.4L657.5 727.2L658.9 732.5L660.2 743.1L661.6 753.7L663.0 764.3L664.4 759.0L665.8 748.4L667.2 737.8L668.6 743.1L670.0 732.5L671.4 716.7L672.8 690.2L674.1 679.6L675.5 700.8L676.9 721.9L678.3 732.5L679.7 727.2L681.1 737.8L682.5 737.8L683.9 743.1L685.3 732.5L686.7 727.2L688.0 711.4L689.4 716.7L690.8 716.7L692.2 727.2L693.6 737.8L695.0 721.9L696.4 706.1L697.8 721.9L699.2 737.8L700.6 748.4L701.9 727.2L703.3 706.1L704.7 711.4L706.1 727.2L707.5 700.8L708.9 716.7L710.3 732.5L711.7 753.7L713.1 737.8L714.5 716.7L715.8 732.5L717.2 743.1L718.6 737.8L720.0 743.1L721.4 748.4L722.8 732.5L724.2 721.9L725.6 711.4L727.0 721.9L728.4 700.8L729.8 684.9L731.1 700.8L732.5 727.2L733.9 716.7L735.3 711.4L736.7 706.1L738.1 727.2L739.5 743.1L740.9 706.1L742.3 684.9L743.6 695.5L745.0 695.5L746.4 700.8L747.8 716.7L749.2 737.8L750.6 753.7L752.0 753.7L753.4 748.4L754.8 748.4L756.2 759.0L757.5 764.3L758.9 748.4L760.3 727.2L761.7 711.4L763.1 700.8L764.5 727.2L765.9 743.1L767.3 727.2L768.7 716.7L770.1 706.1L771.4 721.9L772.8 716.7L774.2 711.4L775.6 732.5L777.0 716.7L778.4 700.8L779.8 700.8L781.2 706.1L782.6 711.4L784.0 711.4L785.3 721.9L786.7 721.9L788.1 711.4L789.5 700.8L790.9 700.8L792.3 721.9L793.7 727.2L795.1 737.8L796.5 737.8L797.9 716.7L799.2 727.2L800.6 737.8L802.0 737.8L803.4 743.1L804.8 732.5L806.2 716.7L807.6 711.4L809.0 737.8L810.4 732.5L811.8 732.5L813.1 732.5L814.5 711.4L815.9 706.1L817.3 690.2L818.7 695.5L820.1 711.4L821.5 711.4L822.9 721.9L824.3 732.5L825.7 721.9L827.0 716.7L828.4 721.9L829.8 711.4L831.2 700.8L832.6 716.7L834.0 721.9L835.4 743.1L836.8 732.5L838.2 721.9L839.6 700.8L840.9 684.9L842.3 721.9L843.7 727.2L845.1 727.2L846.5 727.2L847.9 743.1L849.3 753.7L850.7 743.1L852.1 732.5L853.5 721.9L854.8 716.7L856.2 727.2L857.6 732.5L859.0 721.9L860.4 711.4L861.8 711.4L863.2 695.5L864.6 711.4L866.0 716.7L867.4 716.7L868.7 711.4L870.1 721.9L871.5 711.4L872.9 727.2L874.3 727.2L875.7 743.1L877.1 748.4L878.5 727.2L879.9 732.5L881.3 737.8L882.6 727.2L884.0 743.1L885.4 716.7L886.8 695.5L888.2 706.1L889.6 716.7L891.0 727.2L892.4 716.7L893.8 700.8L895.2 700.8L896.5 690.2L897.9 732.5L899.3 748.4L900.7 743.1L902.1 737.8L903.5 737.8L904.9 727.2L906.3 721.9L907.7 716.7L909.1 721.9L910.4 732.5L911.8 727.2L913.2 716.7L914.6 706.1L916.0 716.7L917.4 727.2L918.8 727.2L920.2 711.4L921.6 716.7L923.0 721.9L924.3 727.2L925.7 711.4L927.1 706.1L928.5 716.7L929.9 727.2L931.3 743.1L932.7 737.8L934.1 716.7L935.5 706.1L936.9 716.7L938.2 743.1L939.6 727.2L941.0 721.9L942.4 716.7L943.8 743.1L945.2 732.5L946.6 716.7L948.0 695.5L949.4 684.9L950.8 700.8L952.2 716.7L953.5 716.7L954.9 706.1L956.3 721.9L957.7 737.8L959.1 706.1L960.5 684.9L961.9 700.8L963.3 706.1L964.7 716.7L966.0 716.7L967.4 727.2L968.8 732.5L970.2 743.1L971.6 737.8L973.0 727.2L974.4 721.9L975.8 732.5L977.2 732.5L978.6 721.9L980.0 727.2L981.3 732.5L982.7 721.9L984.1 711.4L985.5 706.1L986.9 721.9L988.3 727.2L989.7 721.9L991.1 711.4L992.5 706.1L993.8 732.5L995.2 753.7L996.6 737.8L998.0 727.2L999.4 700.8L1000.8 716.7L1002.2 727.2L1003.6 721.9L1005.0 716.7L1006.4 711.4L1007.8 700.8L1009.1 716.7L1010.5 727.2L1011.9 721.9L1013.3 716.7L1014.7 700.8L1016.1 721.9L1017.5 727.2L1018.9 711.4L1020.3 706.1L1021.7 716.7L1023.0 727.2L1024.4 716.7L1025.8 716.7L1027.2 700.8L1028.6 695.5L1030.0 690.2L1031.4 684.9L1032.8 674.3L1034.2 674.3L1035.5 679.6L1036.9 690.2L1038.3 706.1L1039.7 721.9L1041.1 743.1L1042.5 732.5L1043.9 721.9L1045.3 711.4L1046.7 706.1L1048.1 690.2L1049.4 684.9L1050.8 711.4L1052.2 737.8L1053.6 732.5L1055.0 716.7L1056.4 706.1L1057.8 684.9L1059.2 674.3L1060.6 711.4L1062.0 716.7L1063.3 706.1L1064.7 695.5L1066.1 716.7L1067.5 732.5L1068.9 737.8L1070.3 721.9L1071.7 716.7L1073.1 721.9L1074.5 727.2L1075.9 716.7L1077.2 706.1L1078.6 700.8L1080.0 727.2L1081.4 743.1L1082.8 727.2L1084.2 716.7L1085.6 711.4L1087.0 700.8L1088.4 706.1L1089.8 727.2L1091.1 706.1L1092.5 706.1L1093.9 684.9L1095.3 700.8L1096.7 706.1L1098.1 695.5L1099.5 684.9L1100.9 679.6L1102.3 674.3L1103.7 684.9L1105.0 706.1L1106.4 716.7L1107.8 700.8L1109.2 711.4L1110.6 732.5L1112.0 727.2L1113.4 711.4L1114.8 700.8L1116.2 695.5L1117.6 679.6L1118.9 674.3L1120.3 684.9L1121.7 695.5L1123.1 711.4L1124.5 695.5L1125.9 711.4L1127.3 716.7L1128.7 727.2L1130.1 716.7L1131.5 706.1L1132.8 695.5L1134.2 695.5L1135.6 674.3L1137.0 684.9L1138.4 700.8L1139.8 690.2L1141.2 679.6L1142.6 690.2L1144.0 700.8L1145.4 706.1L1146.8 695.5L1148.1 695.5L1149.5 679.6L1150.9 690.2L1152.3 711.4L1153.7 700.8L1155.1 700.8L1156.5 695.5L1157.9 690.2L1159.3 727.2L1160.6 716.7L1162.0 716.7L1163.4 716.7L1164.8 700.8L1166.2 706.1L1167.6 716.7L1169.0 727.2L1170.4 737.8L1171.8 732.5L1173.2 727.2L1174.5 716.7L1175.9 706.1L1177.3 716.7L1178.7 727.2L1180.1 743.1L1181.5 727.2L1182.9 711.4L1184.3 706.1L1185.7 721.9L1187.1 706.1L1188.4 695.5L1189.8 684.9L1191.2 679.6L1192.6 690.2L1194.0 695.5L1195.4 695.5L1196.8 706.1L1198.2 706.1L1199.6 700.8L1201.0 684.9L1202.3 674.3L1203.7 690.2L1205.1 711.4L1206.5 737.8L1207.9 721.9L1209.3 706.1L1210.7 695.5L1212.1 737.8L1213.5 721.9L1214.9 711.4L1216.2 695.5L1217.6 663.8L1219.0 679.6L1220.4 700.8L1221.8 706.1L1223.2 716.7L1224.6 737.8L1226.0 727.2L1227.4 721.9L1228.8 716.7L1230.1 711.4L1231.5 706.1L1232.9 716.7L1234.3 706.1L1235.7 684.9L1237.1 663.8L1238.5 674.3L1239.9 684.9L1241.3 700.8L1242.7 690.2L1244.0 674.3L1245.4 669.0L1246.8 679.6L1248.2 690.2L1249.6 700.8L1251.0 721.9L1252.4 727.2L1253.8 727.2L1255.2 706.1L1256.6 706.1L1257.9 721.9L1259.3 737.8L1260.7 732.5L1262.1 721.9L1263.5 716.7L1264.9 706.1L1266.3 706.1L1267.7 690.2L1269.1 674.3L1270.5 679.6L1271.8 695.5L1273.2 684.9L1274.6 690.2L1276.0 700.8L1277.4 711.4L1278.8 716.7L1280.2 727.2L1281.6 732.5L1283.0 748.4L1284.4 753.7L1285.8 753.7L1287.1 743.1L1288.5 748.4L1289.9 732.5L1291.3 721.9L1292.7 706.1L1294.1 721.9L1295.5 711.4L1296.9 743.1L1298.3 732.5L1299.6 721.9L1301.0 700.8L1302.4 716.7L1303.8 706.1L1305.2 711.4L1306.6 732.5L1308.0 743.1L1309.4 721.9L1310.8 711.4L1312.2 695.5L1313.5 684.9L1314.9 690.2L1316.3 706.1L1317.7 716.7L1319.1 711.4L1320.5 695.5L1321.9 690.2L1323.3 679.6L1324.7 684.9L1326.1 721.9L1327.4 737.8L1328.8 721.9L1330.2 700.8L1331.6 690.2L1333.0 690.2L1334.4 700.8L1335.8 721.9L1337.2 737.8L1338.6 748.4L1340.0 732.5L1341.3 721.9L1342.7 695.5L1344.1 706.1L1345.5 711.4L1346.9 716.7L1348.3 716.7L1349.7 721.9L1351.1 727.2L1352.5 674.3L1353.9 711.4L1355.2 716.7L1356.6 716.7L1358.0 721.9L1359.4 727.2L1360.8 727.2L1362.2 721.9L1363.6 727.2L1365.0 737.8L1366.4 743.1L1367.8 743.1L1369.1 737.8L1370.5 721.9L1371.9 711.4L1373.3 700.8L1374.7 695.5L1376.1 695.5L1377.5 695.5L1378.9 711.4L1380.3 727.2L1381.7 732.5L1383.0 711.4L1384.4 695.5L1385.8 706.1L1387.2 727.2L1388.6 743.1L1390.0 737.8L1391.4 721.9L1392.8 711.4L1394.2 732.5L1395.6 721.9L1396.9 711.4L1398.3 700.8L1399.7 684.9L1401.1 700.8L1402.5 700.8L1403.9 716.7L1405.3 716.7L1406.7 732.5L1408.1 743.1L1409.5 753.7L1410.8 759.0L1412.2 706.1L1413.6 669.0L1415.0 700.8L1416.4 737.8L1417.8 727.2L1419.2 716.7L1420.6 711.4L1422.0 695.5L1423.4 690.2L1424.8 679.6L1426.1 695.5L1427.5 674.3L1428.9 700.8L1430.3 716.7L1431.7 748.4L1433.1 759.0L1434.5 737.8L1435.9 721.9L1437.3 700.8L1438.6 695.5L1440.0 706.1L1441.4 716.7L1442.8 721.9L1444.2 737.8L1445.6 743.1L1447.0 732.5L1448.4 716.7L1449.8 700.8L1451.2 690.2L1452.5 706.1L1453.9 721.9L1455.3 727.2L1456.7 716.7L1458.1 695.5L1459.5 679.6L1460.9 695.5L1462.3 706.1L1463.7 727.2L1465.1 711.4L1466.4 690.2L1467.8 669.0L1469.2 679.6L1470.6 700.8L1472.0 706.1L1473.4 716.7L1474.8 727.2L1476.2 716.7L1477.6 711.4L1479.0 721.9L1480.3 732.5L1481.7 727.2L1483.1 711.4L1484.5 706.1L1485.9 695.5L1487.3 706.1L1488.7 706.1L1490.1 711.4L1491.5 721.9L1492.9 743.1L1494.2 753.7L1495.6 737.8L1497.0 721.9L1498.4 695.5L1499.8 679.6L1501.2 679.6L1502.6 679.6L1504.0 737.8L1505.4 727.2L1506.8 716.7L1508.1 700.8L1509.5 706.1L1510.9 706.1L1512.3 706.1L1513.7 716.7L1515.1 732.5L1516.5 716.7L1517.9 716.7L1519.3 695.5L1520.7 690.2L1522.0 674.3L1523.4 669.0L1524.8 674.3L1526.2 695.5L1527.6 716.7L1529.0 737.8L1530.4 753.7L1531.8 732.5L1533.2 706.1L1534.6 700.8L1535.9 711.4L1537.3 721.9L1538.7 711.4L1540.1 690.2L1541.5 674.3L1542.9 706.1L1544.3 732.5L1545.7 721.9L1547.1 706.1L1548.5 690.2L1549.8 711.4L1551.2 716.7L1552.6 732.5L1554.0 732.5L1555.4 759.0L1556.8 764.3L1558.2 774.8L1559.6 743.1L1561.0 737.8L1562.4 780.1L1563.8 769.5L1565.1 769.5L1566.5 759.0L1567.9 732.5L1569.3 700.8L1570.7 679.6L1572.1 653.2L1573.5 669.0L1574.9 695.5L1576.3 711.4L1577.6 737.8L1579.0 721.9L1580.4 716.7L1581.8 695.5L1583.2 690.2L1584.6 706.1L1586.0 695.5L1587.4 690.2L1588.8 679.6L1590.2 695.5L1591.5 700.8L1592.9 700.8L1594.3 721.9L1595.7 732.5L1597.1 753.7L1598.5 732.5L1599.9 711.4L1601.3 679.6L1602.7 700.8L1604.1 721.9L1605.4 737.8L1606.8 706.1L1608.2 679.6L1609.6 679.6L1611.0 679.6L1612.4 684.9L1613.8 690.2L1615.2 690.2L1616.6 700.8L1618.0 706.1L1619.3 706.1L1620.7 695.5L1622.1 695.5L1623.5 721.9L1624.9 727.2L1626.3 743.1L1627.7 732.5L1629.1 727.2L1630.5 716.7L1631.9 695.5L1633.2 695.5L1634.6 706.1L1636.0 711.4L1637.4 716.7L1638.8 716.7L1640.2 721.9L1641.6 727.2L1643.0 721.9L1644.4 716.7L1645.8 727.2L1647.1 727.2L1648.5 716.7L1649.9 716.7L1651.3 711.4L1652.7 737.8L1654.1 732.5L1655.5 716.7L1656.9 706.1L1658.3 690.2L1659.7 679.6L1661.0 690.2L1662.4 700.8L1663.8 711.4L1665.2 721.9L1666.6 727.2L1668.0 721.9L1669.4 721.9L1670.8 711.4L1672.2 700.8L1673.6 706.1L1674.9 716.7L1676.3 711.4L1677.7 700.8L1679.1 684.9L1680.5 684.9L1681.9 679.6L1683.3 721.9L1684.7 716.7L1686.1 706.1L1687.5 700.8L1688.8 716.7L1690.2 732.5L1691.6 737.8L1693.0 727.2L1694.4 711.4L1695.8 700.8L1697.2 700.8L1698.6 716.7L1700.0 743.1L1701.4 743.1L1702.7 732.5L1704.1 711.4L1705.5 700.8L1706.9 684.9L1708.3 674.3L1709.7 669.0L1711.1 684.9L1712.5 700.8L1713.9 711.4L1715.3 727.2L1716.6 737.8L1718.0 732.5L1719.4 727.2L1720.8 727.2L1722.2 721.9L1723.6 716.7L1725.0 711.4L1726.4 706.1L1727.8 716.7L1729.2 721.9L1730.5 732.5L1731.9 737.8L1733.3 743.1L1734.7 743.1L1736.1 721.9L1737.5 721.9L1738.9 711.4L1740.3 706.1L1741.7 706.1L1743.1 706.1L1744.4 706.1L1745.8 711.4L1747.2 716.7L1748.6 727.2L1750.0 732.5L1751.4 743.1L1752.8 748.4" fill="none" stroke="#dba6a5" stroke-width="1" stroke-linejoin="miter" shape-rendering="crispEdges"/></svg>
<div style="left:80.2px;top:644.4px;width:60px;height:20.6px;background:#ccc1da;border:1px solid #9b94a6;box-sizing:border-box"></div>
<span id="t32" style="top:647.40px;font-size:10.4px;line-height:15px;height:15px;color:#222;left:87.60px;letter-spacing:-0.066px;">ch07-ch08</span>
<div style="left:75.8px;top:848px;width:1754px;height:1px;background:#e3e3e3"></div>
<div style="left:75.8px;top:894px;width:1754px;height:1px;background:#e3e3e3"></div>
<div style="left:75.2px;top:802.5px;width:1755.2px;height:137.6px;border:1.2px solid #b1b1b1;box-sizing:border-box"></div>
<div style="left:73.2px;top:816.25px;width:2.6px;height:1.1px;background:#a6a6a6"></div>
<div style="left:73.2px;top:831.85px;width:2.6px;height:1.1px;background:#a6a6a6"></div>
<div style="left:71.2px;top:847.45px;width:4.6px;height:1.1px;background:#a6a6a6"></div>
<div style="left:73.2px;top:863.05px;width:2.6px;height:1.1px;background:#a6a6a6"></div>
<div style="left:73.2px;top:878.65px;width:2.6px;height:1.1px;background:#a6a6a6"></div>
<div style="left:71.2px;top:894.25px;width:4.6px;height:1.1px;background:#a6a6a6"></div>
<div style="left:73.2px;top:909.85px;width:2.6px;height:1.1px;background:#a6a6a6"></div>
<div style="left:73.2px;top:925.45px;width:2.6px;height:1.1px;background:#a6a6a6"></div>
<span id="t33" style="top:840.60px;font-size:10.4px;line-height:15px;height:15px;color:#222;left:34.30px;letter-spacing:-0.257px;">1.5528</span>
<span id="t34" style="top:887.40px;font-size:10.4px;line-height:15px;height:15px;color:#222;left:34.30px;letter-spacing:-0.257px;">1.5527</span>
<svg style="position:absolute;left:75.8px;top:803.1px" width="1754.0" height="136.4" viewBox="0 803.1 1754.0 136.4"><path d="M0.0 880.8L1.4 880.8L2.8 876.1L4.2 862.0L5.6 876.1L7.0 876.1L8.3 876.1L9.7 857.4L11.1 866.7L12.5 876.1L13.9 871.4L15.3 866.7L16.7 876.1L18.1 885.4L19.5 890.1L20.8 876.1L22.2 852.7L23.6 857.4L25.0 871.4L26.4 866.7L27.8 843.3L29.2 843.3L30.6 866.7L32.0 880.8L33.4 876.1L34.8 866.7L36.1 857.4L37.5 852.7L38.9 862.0L40.3 862.0L41.7 871.4L43.1 876.1L44.5 899.5L45.9 890.1L47.3 866.7L48.6 880.8L50.0 890.1L51.4 904.2L52.8 885.4L54.2 885.4L55.6 880.8L57.0 866.7L58.4 871.4L59.8 876.1L61.2 871.4L62.5 871.4L63.9 866.7L65.3 866.7L66.7 862.0L68.1 880.8L69.5 904.2L70.9 894.8L72.3 871.4L73.7 862.0L75.1 885.4L76.5 904.2L77.8 927.6L79.2 913.5L80.6 890.1L82.0 857.4L83.4 862.0L84.8 871.4L86.2 885.4L87.6 876.1L89.0 871.4L90.3 862.0L91.7 852.7L93.1 866.7L94.5 880.8L95.9 890.1L97.3 899.5L98.7 880.8L100.1 866.7L101.5 866.7L102.9 885.4L104.2 894.8L105.6 880.8L107.0 866.7L108.4 876.1L109.8 885.4L111.2 904.2L112.6 899.5L114.0 890.1L115.4 899.5L116.8 890.1L118.1 880.8L119.5 871.4L120.9 871.4L122.3 857.4L123.7 871.4L125.1 871.4L126.5 890.1L127.9 899.5L129.3 890.1L130.7 871.4L132.0 880.8L133.4 890.1L134.8 899.5L136.2 894.8L137.6 866.7L139.0 876.1L140.4 885.4L141.8 880.8L143.2 871.4L144.6 880.8L145.9 894.8L147.3 894.8L148.7 866.7L150.1 848.0L151.5 848.0L152.9 862.0L154.3 885.4L155.7 876.1L157.1 862.0L158.5 880.8L159.8 894.8L161.2 894.8L162.6 880.8L164.0 876.1L165.4 857.4L166.8 848.0L168.2 848.0L169.6 848.0L171.0 857.4L172.4 852.7L173.8 852.7L175.1 862.0L176.5 871.4L177.9 890.1L179.3 908.8L180.7 913.5L182.1 894.8L183.5 871.4L184.9 848.0L186.3 857.4L187.6 866.7L189.0 852.7L190.4 852.7L191.8 871.4L193.2 880.8L194.6 871.4L196.0 857.4L197.4 848.0L198.8 843.3L200.2 862.0L201.5 871.4L202.9 885.4L204.3 880.8L205.7 880.8L207.1 866.7L208.5 862.0L209.9 852.7L211.3 862.0L212.7 876.1L214.1 880.8L215.4 894.8L216.8 894.8L218.2 885.4L219.6 880.8L221.0 894.8L222.4 899.5L223.8 866.7L225.2 866.7L226.6 876.1L228.0 880.8L229.3 880.8L230.7 866.7L232.1 866.7L233.5 852.7L234.9 862.0L236.3 866.7L237.7 880.8L239.1 890.1L240.5 880.8L241.9 852.7L243.2 852.7L244.6 871.4L246.0 876.1L247.4 862.0L248.8 857.4L250.2 871.4L251.6 876.1L253.0 890.1L254.4 866.7L255.8 848.0L257.1 834.0L258.5 857.4L259.9 866.7L261.3 880.8L262.7 871.4L264.1 871.4L265.5 880.8L266.9 885.4L268.3 885.4L269.7 885.4L271.0 880.8L272.4 871.4L273.8 866.7L275.2 866.7L276.6 866.7L278.0 852.7L279.4 852.7L280.8 857.4L282.2 871.4L283.6 880.8L284.9 880.8L286.3 871.4L287.7 866.7L289.1 866.7L290.5 862.0L291.9 852.7L293.3 852.7L294.7 866.7L296.1 880.8L297.5 871.4L298.8 866.7L300.2 876.1L301.6 876.1L303.0 880.8L304.4 880.8L305.8 871.4L307.2 862.0L308.6 857.4L310.0 880.8L311.4 908.8L312.8 894.8L314.1 871.4L315.5 862.0L316.9 871.4L318.3 876.1L319.7 876.1L321.1 862.0L322.5 848.0L323.9 862.0L325.3 848.0L326.6 857.4L328.0 876.1L329.4 885.4L330.8 890.1L332.2 880.8L333.6 866.7L335.0 857.4L336.4 880.8L337.8 894.8L339.2 904.2L340.5 876.1L341.9 899.5L343.3 885.4L344.7 876.1L346.1 866.7L347.5 852.7L348.9 876.1L350.3 894.8L351.7 890.1L353.1 876.1L354.4 866.7L355.8 871.4L357.2 885.4L358.6 894.8L360.0 899.5L361.4 890.1L362.8 871.4L364.2 852.7L365.6 862.0L367.0 880.8L368.3 894.8L369.7 904.2L371.1 885.4L372.5 880.8L373.9 871.4L375.3 852.7L376.7 857.4L378.1 866.7L379.5 885.4L380.9 890.1L382.2 862.0L383.6 834.0L385.0 838.6L386.4 834.0L387.8 824.6L389.2 829.3L390.6 843.3L392.0 852.7L393.4 857.4L394.8 852.7L396.1 843.3L397.5 843.3L398.9 866.7L400.3 880.8L401.7 894.8L403.1 899.5L404.5 876.1L405.9 857.4L407.3 843.3L408.7 876.1L410.0 876.1L411.4 871.4L412.8 866.7L414.2 890.1L415.6 885.4L417.0 866.7L418.4 871.4L419.8 880.8L421.2 857.4L422.6 834.0L423.9 848.0L425.3 848.0L426.7 862.0L428.1 876.1L429.5 885.4L430.9 904.2L432.3 890.1L433.7 871.4L435.1 894.8L436.5 918.2L437.8 922.9L439.2 894.8L440.6 913.5L442.0 927.6L443.4 899.5L444.8 880.8L446.2 894.8L447.6 876.1L449.0 862.0L450.4 866.7L451.7 876.1L453.1 866.7L454.5 852.7L455.9 876.1L457.3 862.0L458.7 852.7L460.1 876.1L461.5 890.1L462.9 890.1L464.3 880.8L465.6 866.7L467.0 866.7L468.4 885.4L469.8 880.8L471.2 871.4L472.6 862.0L474.0 862.0L475.4 866.7L476.8 857.4L478.2 885.4L479.5 876.1L480.9 885.4L482.3 899.5L483.7 894.8L485.1 880.8L486.5 876.1L487.9 866.7L489.3 857.4L490.7 876.1L492.1 866.7L493.4 857.4L494.8 862.0L496.2 880.8L497.6 894.8L499.0 880.8L500.4 866.7L501.8 857.4L503.2 848.0L504.6 857.4L506.0 862.0L507.3 876.1L508.7 866.7L510.1 852.7L511.5 866.7L512.9 876.1L514.3 890.1L515.7 885.4L517.1 880.8L518.5 894.8L519.9 885.4L521.2 876.1L522.6 871.4L524.0 866.7L525.4 871.4L526.8 876.1L528.2 885.4L529.6 885.4L531.0 871.4L532.4 871.4L533.8 862.0L535.1 857.4L536.5 871.4L537.9 885.4L539.3 894.8L540.7 913.5L542.1 922.9L543.5 913.5L544.9 904.2L546.3 894.8L547.7 890.1L549.0 880.8L550.4 871.4L551.8 862.0L553.2 871.4L554.6 880.8L556.0 866.7L557.4 848.0L558.8 857.4L560.2 866.7L561.6 880.8L562.9 876.1L564.3 862.0L565.7 862.0L567.1 876.1L568.5 904.2L569.9 894.8L571.3 885.4L572.7 880.8L574.1 871.4L575.5 857.4L576.8 852.7L578.2 876.1L579.6 904.2L581.0 890.1L582.4 866.7L583.8 876.1L585.2 880.8L586.6 871.4L588.0 871.4L589.4 871.4L590.8 862.0L592.1 857.4L593.5 852.7L594.9 857.4L596.3 852.7L597.7 866.7L599.1 871.4L600.5 876.1L601.9 876.1L603.3 871.4L604.6 862.0L606.0 871.4L607.4 876.1L608.8 880.8L610.2 876.1L611.6 871.4L613.0 871.4L614.4 885.4L615.8 885.4L617.2 894.8L618.5 904.2L619.9 904.2L621.3 885.4L622.7 871.4L624.1 880.8L625.5 871.4L626.9 866.7L628.3 862.0L629.7 871.4L631.1 876.1L632.4 880.8L633.8 890.1L635.2 899.5L636.6 904.2L638.0 885.4L639.4 876.1L640.8 862.0L642.2 848.0L643.6 852.7L645.0 876.1L646.3 871.4L647.7 857.4L649.1 866.7L650.5 880.8L651.9 880.8L653.3 871.4L654.7 866.7L656.1 866.7L657.5 880.8L658.9 885.4L660.2 894.8L661.6 904.2L663.0 913.5L664.4 908.8L665.8 899.5L667.2 890.1L668.6 894.8L670.0 885.4L671.4 871.4L672.8 848.0L674.1 838.6L675.5 857.4L676.9 876.1L678.3 885.4L679.7 880.8L681.1 890.1L682.5 890.1L683.9 894.8L685.3 885.4L686.7 880.8L688.0 866.7L689.4 871.4L690.8 871.4L692.2 880.8L693.6 890.1L695.0 876.1L696.4 862.0L697.8 876.1L699.2 890.1L700.6 899.5L701.9 880.8L703.3 862.0L704.7 866.7L706.1 880.8L707.5 857.4L708.9 871.4L710.3 885.4L711.7 904.2L713.1 890.1L714.5 871.4L715.8 885.4L717.2 894.8L718.6 890.1L720.0 894.8L721.4 899.5L722.8 885.4L724.2 876.1L725.6 866.7L727.0 876.1L728.4 857.4L729.8 843.3L731.1 857.4L732.5 880.8L733.9 871.4L735.3 866.7L736.7 862.0L738.1 880.8L739.5 894.8L740.9 862.0L742.3 843.3L743.6 852.7L745.0 852.7L746.4 857.4L747.8 871.4L749.2 890.1L750.6 904.2L752.0 904.2L753.4 899.5L754.8 899.5L756.2 908.8L757.5 913.5L758.9 899.5L760.3 880.8L761.7 866.7L763.1 857.4L764.5 880.8L765.9 894.8L767.3 880.8L768.7 871.4L770.1 862.0L771.4 876.1L772.8 871.4L774.2 866.7L775.6 885.4L777.0 871.4L778.4 857.4L779.8 857.4L781.2 862.0L782.6 866.7L784.0 866.7L785.3 876.1L786.7 876.1L788.1 866.7L789.5 857.4L790.9 857.4L792.3 876.1L793.7 880.8L795.1 890.1L796.5 890.1L797.9 871.4L799.2 880.8L800.6 890.1L802.0 890.1L803.4 894.8L804.8 885.4L806.2 871.4L807.6 866.7L809.0 890.1L810.4 885.4L811.8 885.4L813.1 885.4L814.5 866.7L815.9 862.0L817.3 848.0L818.7 852.7L820.1 866.7L821.5 866.7L822.9 876.1L824.3 885.4L825.7 876.1L827.0 871.4L828.4 876.1L829.8 866.7L831.2 857.4L832.6 871.4L834.0 876.1L835.4 894.8L836.8 885.4L838.2 876.1L839.6 857.4L840.9 843.3L842.3 876.1L843.7 880.8L845.1 880.8L846.5 880.8L847.9 894.8L849.3 904.2L850.7 894.8L852.1 885.4L853.5 876.1L854.8 871.4L856.2 880.8L857.6 885.4L859.0 876.1L860.4 866.7L861.8 866.7L863.2 852.7L864.6 866.7L866.0 871.4L867.4 871.4L868.7 866.7L870.1 876.1L871.5 866.7L872.9 880.8L874.3 880.8L875.7 894.8L877.1 899.5L878.5 880.8L879.9 885.4L881.3 890.1L882.6 880.8L884.0 894.8L885.4 871.4L886.8 852.7L888.2 862.0L889.6 871.4L891.0 880.8L892.4 871.4L893.8 857.4L895.2 857.4L896.5 848.0L897.9 885.4L899.3 899.5L900.7 894.8L902.1 890.1L903.5 890.1L904.9 880.8L906.3 876.1L907.7 871.4L909.1 876.1L910.4 885.4L911.8 880.8L913.2 871.4L914.6 862.0L916.0 871.4L917.4 880.8L918.8 880.8L920.2 866.7L921.6 871.4L923.0 876.1L924.3 880.8L925.7 866.7L927.1 862.0L928.5 871.4L929.9 880.8L931.3 894.8L932.7 890.1L934.1 871.4L935.5 862.0L936.9 871.4L938.2 894.8L939.6 880.8L941.0 876.1L942.4 871.4L943.8 894.8L945.2 885.4L946.6 871.4L948.0 852.7L949.4 843.3L950.8 857.4L952.2 871.4L953.5 871.4L954.9 862.0L956.3 876.1L957.7 890.1L959.1 862.0L960.5 843.3L961.9 857.4L963.3 862.0L964.7 871.4L966.0 871.4L967.4 880.8L968.8 885.4L970.2 894.8L971.6 890.1L973.0 880.8L974.4 876.1L975.8 885.4L977.2 885.4L978.6 876.1L980.0 880.8L981.3 885.4L982.7 876.1L984.1 866.7L985.5 862.0L986.9 876.1L988.3 880.8L989.7 876.1L991.1 866.7L992.5 862.0L993.8 885.4L995.2 904.2L996.6 890.1L998.0 880.8L999.4 857.4L1000.8 871.4L1002.2 880.8L1003.6 876.1L1005.0 871.4L1006.4 866.7L1007.8 857.4L1009.1 871.4L1010.5 880.8L1011.9 876.1L1013.3 871.4L1014.7 857.4L1016.1 876.1L1017.5 880.8L1018.9 866.7L1020.3 862.0L1021.7 871.4L1023.0 880.8L1024.4 871.4L1025.8 871.4L1027.2 857.4L1028.6 852.7L1030.0 848.0L1031.4 843.3L1032.8 834.0L1034.2 834.0L1035.5 838.6L1036.9 848.0L1038.3 862.0L1039.7 876.1L1041.1 894.8L1042.5 885.4L1043.9 876.1L1045.3 866.7L1046.7 862.0L1048.1 848.0L1049.4 843.3L1050.8 866.7L1052.2 890.1L1053.6 885.4L1055.0 871.4L1056.4 862.0L1057.8 843.3L1059.2 834.0L1060.6 866.7L1062.0 871.4L1063.3 862.0L1064.7 852.7L1066.1 871.4L1067.5 885.4L1068.9 890.1L1070.3 876.1L1071.7 871.4L1073.1 876.1L1074.5 880.8L1075.9 871.4L1077.2 862.0L1078.6 857.4L1080.0 880.8L1081.4 894.8L1082.8 880.8L1084.2 871.4L1085.6 866.7L1087.0 857.4L1088.4 862.0L1089.8 880.8L1091.1 862.0L1092.5 862.0L1093.9 843.3L1095.3 857.4L1096.7 862.0L1098.1 852.7L1099.5 843.3L1100.9 838.6L1102.3 834.0L1103.7 843.3L1105.0 862.0L1106.4 871.4L1107.8 857.4L1109.2 866.7L1110.6 885.4L1112.0 880.8L1113.4 866.7L1114.8 857.4L1116.2 852.7L1117.6 838.6L1118.9 834.0L1120.3 843.3L1121.7 852.7L1123.1 866.7L1124.5 852.7L1125.9 866.7L1127.3 871.4L1128.7 880.8L1130.1 871.4L1131.5 862.0L1132.8 852.7L1134.2 852.7L1135.6 834.0L1137.0 843.3L1138.4 857.4L1139.8 848.0L1141.2 838.6L1142.6 848.0L1144.0 857.4L1145.4 862.0L1146.8 852.7L1148.1 852.7L1149.5 838.6L1150.9 848.0L1152.3 866.7L1153.7 857.4L1155.1 857.4L1156.5 852.7L1157.9 848.0L1159.3 880.8L1160.6 871.4L1162.0 871.4L1163.4 871.4L1164.8 857.4L1166.2 862.0L1167.6 871.4L1169.0 880.8L1170.4 890.1L1171.8 885.4L1173.2 880.8L1174.5 871.4L1175.9 862.0L1177.3 871.4L1178.7 880.8L1180.1 894.8L1181.5 880.8L1182.9 866.7L1184.3 862.0L1185.7 876.1L1187.1 862.0L1188.4 852.7L1189.8 843.3L1191.2 838.6L1192.6 848.0L1194.0 852.7L1195.4 852.7L1196.8 862.0L1198.2 862.0L1199.6 857.4L1201.0 843.3L1202.3 834.0L1203.7 848.0L1205.1 866.7L1206.5 890.1L1207.9 876.1L1209.3 862.0L1210.7 852.7L1212.1 890.1L1213.5 876.1L1214.9 866.7L1216.2 852.7L1217.6 824.6L1219.0 838.6L1220.4 857.4L1221.8 862.0L1223.2 871.4L1224.6 890.1L1226.0 880.8L1227.4 876.1L1228.8 871.4L1230.1 866.7L1231.5 862.0L1232.9 871.4L1234.3 862.0L1235.7 843.3L1237.1 824.6L1238.5 834.0L1239.9 843.3L1241.3 857.4L1242.7 848.0L1244.0 834.0L1245.4 829.3L1246.8 838.6L1248.2 848.0L1249.6 857.4L1251.0 876.1L1252.4 880.8L1253.8 880.8L1255.2 862.0L1256.6 862.0L1257.9 876.1L1259.3 890.1L1260.7 885.4L1262.1 876.1L1263.5 871.4L1264.9 862.0L1266.3 862.0L1267.7 848.0L1269.1 834.0L1270.5 838.6L1271.8 852.7L1273.2 843.3L1274.6 848.0L1276.0 857.4L1277.4 866.7L1278.8 871.4L1280.2 880.8L1281.6 885.4L1283.0 899.5L1284.4 904.2L1285.8 904.2L1287.1 894.8L1288.5 899.5L1289.9 885.4L1291.3 876.1L1292.7 862.0L1294.1 876.1L1295.5 866.7L1296.9 894.8L1298.3 885.4L1299.6 876.1L1301.0 857.4L1302.4 871.4L1303.8 862.0L1305.2 866.7L1306.6 885.4L1308.0 894.8L1309.4 876.1L1310.8 866.7L1312.2 852.7L1313.5 843.3L1314.9 848.0L1316.3 862.0L1317.7 871.4L1319.1 866.7L1320.5 852.7L1321.9 848.0L1323.3 838.6L1324.7 843.3L1326.1 876.1L1327.4 890.1L1328.8 876.1L1330.2 857.4L1331.6 848.0L1333.0 848.0L1334.4 857.4L1335.8 876.1L1337.2 890.1L1338.6 899.5L1340.0 885.4L1341.3 876.1L1342.7 852.7L1344.1 862.0L1345.5 866.7L1346.9 871.4L1348.3 871.4L1349.7 876.1L1351.1 880.8L1352.5 834.0L1353.9 866.7L1355.2 871.4L1356.6 871.4L1358.0 876.1L1359.4 880.8L1360.8 880.8L1362.2 876.1L1363.6 880.8L1365.0 890.1L1366.4 894.8L1367.8 894.8L1369.1 890.1L1370.5 876.1L1371.9 866.7L1373.3 857.4L1374.7 852.7L1376.1 852.7L1377.5 852.7L1378.9 866.7L1380.3 880.8L1381.7 885.4L1383.0 866.7L1384.4 852.7L1385.8 862.0L1387.2 880.8L1388.6 894.8L1390.0 890.1L1391.4 876.1L1392.8 866.7L1394.2 885.4L1395.6 876.1L1396.9 866.7L1398.3 857.4L1399.7 843.3L1401.1 857.4L1402.5 857.4L1403.9 871.4L1405.3 871.4L1406.7 885.4L1408.1 894.8L1409.5 904.2L1410.8 908.8L1412.2 862.0L1413.6 829.3L1415.0 857.4L1416.4 890.1L1417.8 880.8L1419.2 871.4L1420.6 866.7L1422.0 852.7L1423.4 848.0L1424.8 838.6L1426.1 852.7L1427.5 834.0L1428.9 857.4L1430.3 871.4L1431.7 899.5L1433.1 908.8L1434.5 890.1L1435.9 876.1L1437.3 857.4L1438.6 852.7L1440.0 862.0L1441.4 871.4L1442.8 876.1L1444.2 890.1L1445.6 894.8L1447.0 885.4L1448.4 871.4L1449.8 857.4L1451.2 848.0L1452.5 862.0L1453.9 876.1L1455.3 880.8L1456.7 871.4L1458.1 852.7L1459.5 838.6L1460.9 852.7L1462.3 862.0L1463.7 880.8L1465.1 866.7L1466.4 848.0L1467.8 829.3L1469.2 838.6L1470.6 857.4L1472.0 862.0L1473.4 871.4L1474.8 880.8L1476.2 871.4L1477.6 866.7L1479.0 876.1L1480.3 885.4L1481.7 880.8L1483.1 866.7L1484.5 862.0L1485.9 852.7L1487.3 862.0L1488.7 862.0L1490.1 866.7L1491.5 876.1L1492.9 894.8L1494.2 904.2L1495.6 890.1L1497.0 876.1L1498.4 852.7L1499.8 838.6L1501.2 838.6L1502.6 838.6L1504.0 890.1L1505.4 880.8L1506.8 871.4L1508.1 857.4L1509.5 862.0L1510.9 862.0L1512.3 862.0L1513.7 871.4L1515.1 885.4L1516.5 871.4L1517.9 871.4L1519.3 852.7L1520.7 848.0L1522.0 834.0L1523.4 829.3L1524.8 834.0L1526.2 852.7L1527.6 871.4L1529.0 890.1L1530.4 904.2L1531.8 885.4L1533.2 862.0L1534.6 857.4L1535.9 866.7L1537.3 876.1L1538.7 866.7L1540.1 848.0L1541.5 834.0L1542.9 862.0L1544.3 885.4L1545.7 876.1L1547.1 862.0L1548.5 848.0L1549.8 866.7L1551.2 871.4L1552.6 885.4L1554.0 885.4L1555.4 908.8L1556.8 913.5L1558.2 922.9L1559.6 894.8L1561.0 890.1L1562.4 927.6L1563.8 918.2L1565.1 918.2L1566.5 908.8L1567.9 885.4L1569.3 857.4L1570.7 838.6L1572.1 815.2L1573.5 829.3L1574.9 852.7L1576.3 866.7L1577.6 890.1L1579.0 876.1L1580.4 871.4L1581.8 852.7L1583.2 848.0L1584.6 862.0L1586.0 852.7L1587.4 848.0L1588.8 838.6L1590.2 852.7L1591.5 857.4L1592.9 857.4L1594.3 876.1L1595.7 885.4L1597.1 904.2L1598.5 885.4L1599.9 866.7L1601.3 838.6L1602.7 857.4L1604.1 876.1L1605.4 890.1L1606.8 862.0L1608.2 838.6L1609.6 838.6L1611.0 838.6L1612.4 843.3L1613.8 848.0L1615.2 848.0L1616.6 857.4L1618.0 862.0L1619.3 862.0L1620.7 852.7L1622.1 852.7L1623.5 876.1L1624.9 880.8L1626.3 894.8L1627.7 885.4L1629.1 880.8L1630.5 871.4L1631.9 852.7L1633.2 852.7L1634.6 862.0L1636.0 866.7L1637.4 871.4L1638.8 871.4L1640.2 876.1L1641.6 880.8L1643.0 876.1L1644.4 871.4L1645.8 880.8L1647.1 880.8L1648.5 871.4L1649.9 871.4L1651.3 866.7L1652.7 890.1L1654.1 885.4L1655.5 871.4L1656.9 862.0L1658.3 848.0L1659.7 838.6L1661.0 848.0L1662.4 857.4L1663.8 866.7L1665.2 876.1L1666.6 880.8L1668.0 876.1L1669.4 876.1L1670.8 866.7L1672.2 857.4L1673.6 862.0L1674.9 871.4L1676.3 866.7L1677.7 857.4L1679.1 843.3L1680.5 843.3L1681.9 838.6L1683.3 876.1L1684.7 871.4L1686.1 862.0L1687.5 857.4L1688.8 871.4L1690.2 885.4L1691.6 890.1L1693.0 880.8L1694.4 866.7L1695.8 857.4L1697.2 857.4L1698.6 871.4L1700.0 894.8L1701.4 894.8L1702.7 885.4L1704.1 866.7L1705.5 857.4L1706.9 843.3L1708.3 834.0L1709.7 829.3L1711.1 843.3L1712.5 857.4L1713.9 866.7L1715.3 880.8L1716.6 890.1L1718.0 885.4L1719.4 880.8L1720.8 880.8L1722.2 876.1L1723.6 871.4L1725.0 866.7L1726.4 862.0L1727.8 871.4L1729.2 876.1L1730.5 885.4L1731.9 890.1L1733.3 894.8L1734.7 894.8L1736.1 876.1L1737.5 876.1L1738.9 866.7L1740.3 862.0L1741.7 862.0L1743.1 862.0L1744.4 862.0L1745.8 866.7L1747.2 871.4L1748.6 880.8L1750.0 885.4L1751.4 894.8L1752.8 899.5" fill="none" stroke="#b9acd0" stroke-width="1" stroke-linejoin="miter" shape-rendering="crispEdges"/></svg>
<div style="left:80.2px;top:808.2px;width:62.6px;height:18.4px;background:#ccc1da;border:1px solid #9b94a6;box-sizing:border-box"></div>
<span id="t35" style="top:810.10px;font-size:10.4px;line-height:15px;height:15px;color:#222;left:85.60px;letter-spacing:-0.145px;">ch09-ch010</span>
<div style="left:86.27px;top:939.6px;width:1.1px;height:2.6px;background:#a6a6a6"></div>
<div style="left:119.64px;top:939.6px;width:1.1px;height:2.6px;background:#a6a6a6"></div>
<div style="left:153.01px;top:939.6px;width:1.1px;height:2.6px;background:#a6a6a6"></div>
<div style="left:186.38px;top:939.6px;width:1.1px;height:2.6px;background:#a6a6a6"></div>
<div style="left:219.75px;top:939.6px;width:1.1px;height:5px;background:#a6a6a6"></div>
<div style="left:253.12px;top:939.6px;width:1.1px;height:2.6px;background:#a6a6a6"></div>
<div style="left:286.49px;top:939.6px;width:1.1px;height:2.6px;background:#a6a6a6"></div>
<div style="left:319.86px;top:939.6px;width:1.1px;height:2.6px;background:#a6a6a6"></div>
<div style="left:353.23px;top:939.6px;width:1.1px;height:2.6px;background:#a6a6a6"></div>
<div style="left:386.6px;top:939.6px;width:1.1px;height:2.6px;background:#a6a6a6"></div>
<div style="left:419.97px;top:939.6px;width:1.1px;height:2.6px;background:#a6a6a6"></div>
<div style="left:453.34px;top:939.6px;width:1.1px;height:2.6px;background:#a6a6a6"></div>
<div style="left:486.71px;top:939.6px;width:1.1px;height:2.6px;background:#a6a6a6"></div>
<div style="left:520.08px;top:939.6px;width:1.1px;height:2.6px;background:#a6a6a6"></div>
<div style="left:553.45px;top:939.6px;width:1.1px;height:5px;background:#a6a6a6"></div>
<div style="left:586.82px;top:939.6px;width:1.1px;height:2.6px;background:#a6a6a6"></div>
<div style="left:620.19px;top:939.6px;width:1.1px;height:2.6px;background:#a6a6a6"></div>
<div style="left:653.56px;top:939.6px;width:1.1px;height:2.6px;background:#a6a6a6"></div>
<div style="left:686.93px;top:939.6px;width:1.1px;height:2.6px;background:#a6a6a6"></div>
<div style="left:720.3px;top:939.6px;width:1.1px;height:2.6px;background:#a6a6a6"></div>
<div style="left:753.67px;top:939.6px;width:1.1px;height:2.6px;background:#a6a6a6"></div>
<div style="left:787.04px;top:939.6px;width:1.1px;height:2.6px;background:#a6a6a6"></div>
<div style="left:820.41px;top:939.6px;width:1.1px;height:2.6px;background:#a6a6a6"></div>
<div style="left:853.78px;top:939.6px;width:1.1px;height:2.6px;background:#a6a6a6"></div>
<div style="left:887.15px;top:939.6px;width:1.1px;height:5px;background:#a6a6a6"></div>
<div style="left:920.52px;top:939.6px;width:1.1px;height:2.6px;background:#a6a6a6"></div>
<div style="left:953.89px;top:939.6px;width:1.1px;height:2.6px;background:#a6a6a6"></div>
<div style="left:987.26px;top:939.6px;width:1.1px;height:2.6px;background:#a6a6a6"></div>
<div style="left:1020.63px;top:939.6px;width:1.1px;height:2.6px;background:#a6a6a6"></div>
<div style="left:1054px;top:939.6px;width:1.1px;height:2.6px;background:#a6a6a6"></div>
<div style="left:1087.37px;top:939.6px;width:1.1px;height:2.6px;background:#a6a6a6"></div>
<div style="left:1120.74px;top:939.6px;width:1.1px;height:2.6px;background:#a6a6a6"></div>
<div style="left:1154.11px;top:939.6px;width:1.1px;height:2.6px;background:#a6a6a6"></div>
<div style="left:1187.48px;top:939.6px;width:1.1px;height:2.6px;background:#a6a6a6"></div>
<div style="left:1220.85px;top:939.6px;width:1.1px;height:5px;background:#a6a6a6"></div>
<div style="left:1254.22px;top:939.6px;width:1.1px;height:2.6px;background:#a6a6a6"></div>
<div style="left:1287.59px;top:939.6px;width:1.1px;height:2.6px;background:#a6a6a6"></div>
<div style="left:1320.96px;top:939.6px;width:1.1px;height:2.6px;background:#a6a6a6"></div>
<div style="left:1354.33px;top:939.6px;width:1.1px;height:2.6px;background:#a6a6a6"></div>
<div style="left:1387.7px;top:939.6px;width:1.1px;height:2.6px;background:#a6a6a6"></div>
<div style="left:1421.07px;top:939.6px;width:1.1px;height:2.6px;background:#a6a6a6"></div>
<div style="left:1454.44px;top:939.6px;width:1.1px;height:2.6px;background:#a6a6a6"></div>
<div style="left:1487.81px;top:939.6px;width:1.1px;height:2.6px;background:#a6a6a6"></div>
<div style="left:1521.18px;top:939.6px;width:1.1px;height:2.6px;background:#a6a6a6"></div>
<div style="left:1554.55px;top:939.6px;width:1.1px;height:5px;background:#a6a6a6"></div>
<div style="left:1587.92px;top:939.6px;width:1.1px;height:2.6px;background:#a6a6a6"></div>
<div style="left:1621.29px;top:939.6px;width:1.1px;height:2.6px;background:#a6a6a6"></div>
<div style="left:1654.66px;top:939.6px;width:1.1px;height:2.6px;background:#a6a6a6"></div>
<div style="left:1688.03px;top:939.6px;width:1.1px;height:2.6px;background:#a6a6a6"></div>
<div style="left:1721.4px;top:939.6px;width:1.1px;height:2.6px;background:#a6a6a6"></div>
<div style="left:1754.77px;top:939.6px;width:1.1px;height:2.6px;background:#a6a6a6"></div>
<div style="left:1788.14px;top:939.6px;width:1.1px;height:2.6px;background:#a6a6a6"></div>
<div style="left:1821.51px;top:939.6px;width:1.1px;height:2.6px;background:#a6a6a6"></div>
<span id="t36" style="top:947.50px;font-size:10.4px;line-height:15px;height:15px;color:#222;left:207.30px;letter-spacing:-0.001px;">13:16</span>
<span id="t37" style="top:947.50px;font-size:10.4px;line-height:15px;height:15px;color:#222;left:541.00px;letter-spacing:-0.001px;">13:17</span>
<span id="t38" style="top:947.50px;font-size:10.4px;line-height:15px;height:15px;color:#222;left:874.70px;letter-spacing:-0.001px;">13:18</span>
<span id="t39" style="top:947.50px;font-size:10.4px;line-height:15px;height:15px;color:#222;left:1208.40px;letter-spacing:-0.001px;">13:19</span>
<span id="t40" style="top:947.50px;font-size:10.4px;line-height:15px;height:15px;color:#222;left:1542.10px;letter-spacing:-0.001px;">13:20</span>
<span id="t41" style="top:900.50px;font-size:17.6px;line-height:25px;height:25px;color:rgba(125,125,125,.68);left:1578.40px;letter-spacing:1.905px;">激活 Windows</span>
<span id="t42" style="top:926.40px;font-size:12.9px;line-height:18px;height:18px;color:rgba(125,125,125,.68);left:1578.40px;letter-spacing:1.236px;">转到“设置”以激活 Windows。</span>
<div style="left:23px;top:969px;width:1832px;height:23.2px;background:#f0f0f0"></div>
<div style="left:23px;top:969px;width:1832px;height:2.4px;background:linear-gradient(#d9d9dd,#f0f0f0)"></div>
<span id="t43" style="top:974.20px;font-size:11.4px;line-height:16px;height:16px;color:#1a1a1a;left:27.00px;letter-spacing:0.304px;">CH On(Qty) :</span>
<span id="t44" style="top:974.20px;font-size:11.4px;line-height:16px;height:16px;color:#2b3aa0;left:104.80px;letter-spacing:-0.275px;">32</span>
<span id="t45" style="top:974.20px;font-size:11.4px;line-height:16px;height:16px;color:#1a1a1a;left:132.80px;">|</span>
<span id="t46" style="top:974.20px;font-size:11.4px;line-height:16px;height:16px;color:#1a1a1a;left:148.40px;letter-spacing:0.354px;">CH Off (Qty) :</span>
<span id="t47" style="top:974.20px;font-size:11.4px;line-height:16px;height:16px;color:#2b3aa0;left:230.70px;letter-spacing:-0.041px;">0</span>
<span id="t48" style="top:974.20px;font-size:11.4px;line-height:16px;height:16px;color:#1a1a1a;left:251.70px;">|</span>
<span id="t49" style="top:974.20px;font-size:11.4px;line-height:16px;height:16px;color:#1a1a1a;left:263.10px;letter-spacing:0.012px;">Pass  :</span>
<span id="t50" style="top:974.20px;font-size:11.4px;line-height:16px;height:16px;color:#3a9a2a;left:309.40px;letter-spacing:0.259px;">0</span>
<span id="t51" style="top:974.20px;font-size:11.4px;line-height:16px;height:16px;color:#1a1a1a;left:327.30px;">|</span>
<span id="t52" style="top:974.20px;font-size:11.4px;line-height:16px;height:16px;color:#1a1a1a;left:338.40px;letter-spacing:0.177px;">Failed :</span>
<span id="t53" style="top:974.20px;font-size:11.4px;line-height:16px;height:16px;color:#e0281e;left:384.80px;letter-spacing:0.259px;">0</span>
<span id="t54" style="top:974.20px;font-size:11.4px;line-height:16px;height:16px;color:#1a1a1a;left:402.60px;">|</span>
<span id="t55" style="top:974.20px;font-size:11.4px;line-height:16px;height:16px;color:#1a1a1a;left:413.40px;letter-spacing:0.323px;">Elapsed Time (S) :</span>
<span id="t56" style="top:974.20px;font-size:11.4px;line-height:16px;height:16px;color:#2b3aa0;left:520.60px;letter-spacing:-0.141px;">0</span>
<span id="t57" style="top:974.20px;font-size:11.4px;line-height:16px;height:16px;color:#1a1a1a;left:534.50px;">|</span>
<span id="t58" style="top:974.20px;font-size:11.4px;line-height:16px;height:16px;color:#1a1a1a;left:545.30px;letter-spacing:0.283px;">Curr(mA) :</span>
<div style="left:605.9px;top:974.4px;width:42.2px;height:15.4px;background:#8fa9d6"></div>
<span id="t59" style="top:974.20px;font-size:11.4px;line-height:16px;height:16px;color:#1c3494;font-weight:700;left:616.60px;letter-spacing:0.219px;">2000</span>
<span id="t60" style="top:974.20px;font-size:11.4px;line-height:16px;height:16px;color:#1a1a1a;left:650.60px;">|</span>
<span id="t61" style="top:974.20px;font-size:11.4px;line-height:16px;height:16px;color:#1a1a1a;left:657.90px;letter-spacing:0.168px;">Min_Spec :</span>
<div style="left:721.2px;top:974.4px;width:34.8px;height:15.4px;background:#8fa9d6"></div>
<span id="t62" style="top:974.20px;font-size:11.4px;line-height:16px;height:16px;color:#1c3494;font-weight:700;left:725.00px;letter-spacing:0.285px;">2000</span>
<span id="t63" style="top:974.20px;font-size:11.4px;line-height:16px;height:16px;color:#1a1a1a;left:758.40px;">|</span>
<span id="t64" style="top:974.20px;font-size:11.4px;line-height:16px;height:16px;color:#1a1a1a;left:766.00px;letter-spacing:0.072px;">Max_Spec :</span>
<div style="left:831.6px;top:974.4px;width:34.9px;height:15.4px;background:#8fa9d6"></div>
<span id="t65" style="top:974.20px;font-size:11.4px;line-height:16px;height:16px;color:#1c3494;font-weight:700;left:835.40px;letter-spacing:0.285px;">2000</span>
<span id="t66" style="top:974.20px;font-size:11.4px;line-height:16px;height:16px;color:#1a1a1a;left:869.10px;">|</span>
<div style="left:877.7px;top:974px;width:478.6px;height:15.4px;background:#e6e6e6;border:1px solid #bcbcbc;box-sizing:border-box"></div>
<div style="left:1289px;top:975px;width:66.3px;height:13.4px;background:#1faa3c"></div>
<span id="t67" style="top:974.20px;font-size:11.4px;line-height:16px;height:16px;color:#1a1a1a;left:1362.60px;">|</span>
<span id="t68" style="top:974.20px;font-size:11.4px;line-height:16px;height:16px;color:#1a1a1a;left:1373.00px;letter-spacing:0.302px;">Sytem Status :</span>
<span id="t69" style="top:974.20px;font-size:11.4px;line-height:16px;height:16px;color:#2b3aa0;left:1457.70px;letter-spacing:1.090px;">Idle!</span>
<span id="t70" style="top:974.20px;font-size:11.4px;line-height:16px;height:16px;color:#1a1a1a;left:1497.20px;">|</span>
<span id="t71" style="top:974.20px;font-size:11.4px;line-height:16px;height:16px;color:#1a1a1a;left:1508.60px;letter-spacing:0.444px;">Current User :</span>
<span id="t72" style="top:974.20px;font-size:11.4px;line-height:16px;height:16px;color:#2b3aa0;left:1593.40px;letter-spacing:0.652px;">Admin</span>
<span id="t73" style="top:974.20px;font-size:11.4px;line-height:16px;height:16px;color:#2b3aa0;left:1635.60px;">|</span>
<span id="t74" style="top:974.20px;font-size:11.4px;line-height:16px;height:16px;color:#2b3aa0;left:1643.00px;letter-spacing:0.639px;">IO Ready</span>
<span id="t75" style="top:974.20px;font-size:11.4px;line-height:16px;height:16px;color:#2b3aa0;left:1701.60px;">|</span>
<span id="t76" style="top:974.20px;font-size:11.4px;line-height:16px;height:16px;color:#2b3aa0;left:1709.00px;letter-spacing:0.550px;">Daq Ready</span>
<div style="left:23px;top:992.2px;width:1832px;height:37.9px;background:#0b0d12"></div>
<svg style="position:absolute;left:37.5px;top:1003px" width="17.5" height="16.5" viewBox="0 0 17.5 16.5"><g fill="#fff"><path d="M.4 2.6L7 1.7V7.7H.4Z"/><path d="M8 1.5L16.6 .3V7.7H8Z"/><path d="M.4 8.7H7V14.7L.4 13.8Z"/><path d="M8 8.7H16.6V16.1L8 14.9Z"/></g></svg>
<svg style="position:absolute;left:82px;top:1002px" width="19" height="18" viewBox="0 0 19 18"><circle cx="11.6" cy="6.6" r="5.2" fill="none" stroke="#fff" stroke-width="1.2"/><path d="M7.9 10.3L1.6 16.4" stroke="#fff" stroke-width="1.3"/></svg>
<svg style="position:absolute;left:129px;top:1002px" width="17" height="18" viewBox="0 0 17 18"><g fill="none" stroke="#fff" stroke-width="1.1"><rect x="2" y="4.6" width="8.6" height="8.2"/><path d="M1 1.6H11.6M1 15.8H11.6M1 1.6V4M11.6 1.6V4M1 15.8V13.4M11.6 15.8V13.4"/></g><rect x="13.4" y="1" width="1.2" height="4" fill="#fff"/><rect x="13" y="6" width="2" height="2" fill="#fff"/><rect x="13.4" y="9.6" width="1.2" height="6.8" fill="#fff"/></svg>
<svg style="position:absolute;left:173px;top:999px" width="26" height="24" viewBox="0 0 26 24"><path d="M18.6 .6L24.6 3V21L18.6 23.4L7.6 13.6L3.4 17L1.4 16V8L3.4 7L7.6 10.4Z" fill="#fff"/><path d="M18.6 2L23.6 4V20L18.6 22L7.6 12L18.6 2ZM18.6 7.4L12.4 12L18.6 16.6Z" fill="#6a2c91" fill-rule="evenodd"/><path d="M3.4 8.4L7.6 12L3.4 15.6L2.4 15V9Z" fill="#6a2c91"/></svg>
<div style="left:166.8px;top:1028px;width:37.8px;height:2.1px;background:#76b9ed"></div>
<div style="left:210px;top:992.2px;width:42.6px;height:37.9px;background:#3a3c40"></div>
<div style="left:252.6px;top:992.2px;width:3.2px;height:37.9px;background:#26282c"></div>
<div style="left:209.4px;top:1028px;width:46.2px;height:2.1px;background:#76b9ed"></div>
<svg style="position:absolute;left:220.5px;top:1003px" width="23" height="16" viewBox="0 0 14.5 10"><path d="M1.2 0H14.5L13.6 2.6H0.2Z" fill="#f07820"/><path d="M6.4 2.6H9.6L7.4 7.6H11.6L10.8 10H2.6L3.4 7.6Z" fill="#2a64b4"/><path d="M3.2 2.6H6.4L5.4 5H2.4Z" fill="#f07820"/></svg>
<svg style="position:absolute;left:266px;top:998px" width="28" height="26" viewBox="0 0 28 26"><ellipse cx="12.4" cy="14.6" rx="10.6" ry="8.4" fill="#b4d6ec" transform="rotate(-18 12.4 14.6)"/><circle cx="7.6" cy="13.8" r="1.9" fill="#3a7bd5"/><circle cx="11.4" cy="9.8" r="1.8" fill="#e84a3a"/><circle cx="16.6" cy="9.4" r="1.8" fill="#f2c230"/><circle cx="9.6" cy="18.6" r="1.8" fill="#3aa655"/><ellipse cx="16.6" cy="18" rx="2.6" ry="2" fill="#0b0d12"/><path d="M14.6 16.4L23.4 2.6L25.2 3.8L17 17.8Z" fill="#c98a3c"/><path d="M23.4 2.6L24.6 1L26.2 2.2L25.2 3.8Z" fill="#e8a84a"/></svg>
<div style="left:260.7px;top:1028px;width:38.5px;height:2.1px;background:#76b9ed"></div>
<svg style="position:absolute;left:1615px;top:1003px" width="17" height="16" viewBox="0 0 17 16"><g fill="none" stroke="#fff" stroke-width="1.1"><circle cx="5.6" cy="7.6" r="2.3"/><path d="M1.4 15C1.6 12 3.4 10.8 5.6 10.8C7.2 10.8 8.4 11.4 9.2 12.6"/><circle cx="12.2" cy="3.6" r="2"/><path d="M9.2 9.6C9.8 7.4 10.8 6.6 12.4 6.6C14.2 6.6 15.4 7.8 15.6 9.8"/></g></svg>
<svg style="position:absolute;left:1650px;top:1006px" width="14" height="9" viewBox="0 0 14 9"><path d="M1.4 7.6L7 1.8L12.6 7.6" fill="none" stroke="#fff" stroke-width="1.2"/></svg>
<svg style="position:absolute;left:1671px;top:1003px" width="18" height="17" viewBox="0 0 18 17"><g fill="none" stroke="#fff" stroke-width="1.1"><rect x="3.6" y="1.6" width="11.6" height="8.6"/><path d="M1 1.6H3.6M1 4.4H3.6M2.2 1.6V12.6H9"/></g><path d="M11 8.6L16.2 16H5.8Z" fill="#f4c20d"/><path d="M11 11V13.6M11 14.4V15.2" stroke="#222" stroke-width="1"/></svg>
<svg style="position:absolute;left:1693px;top:1003px" width="19" height="17" viewBox="0 0 19 17"><path d="M1.6 6.4H4.2L7.8 2.6V14.2L4.2 10.6H1.6Z" fill="none" stroke="#fff" stroke-width="1.1"/><circle cx="13.2" cy="11.6" r="4.2" fill="#e8212e"/><path d="M11.4 9.8L15 13.4M15 9.8L11.4 13.4" stroke="#fff" stroke-width="1.2"/></svg>
<span id="t77" style="top:1002.20px;font-size:13px;line-height:18px;height:18px;color:#fff;left:1718.00px;">英</span>
<span id="t78" style="top:994.40px;font-size:11.4px;line-height:16px;height:16px;color:#fff;left:1755.60px;letter-spacing:-0.152px;">13:21</span>
<span id="t79" style="top:1012.60px;font-size:11.4px;line-height:16px;height:16px;color:#fff;left:1737.90px;letter-spacing:0.708px;">2021/11/11</span>
<svg style="position:absolute;left:1815px;top:1002px" width="25" height="23" viewBox="0 0 25 23"><path d="M1 1.2H15.2V12.8H7.6L4.6 15.6V12.8H1Z" fill="#fff"/><path d="M3.6 4.6H12.6M3.6 7.2H12.6M3.6 9.8H9" stroke="#0b0d12" stroke-width="1"/><circle cx="15.6" cy="14.8" r="6.6" fill="#2a2c31" stroke="#9a9a9a" stroke-width=".9"/><text x="15.6" y="18.6" font-family="Liberation Sans,sans-serif" font-size="10.5" font-weight="700" fill="#fff" text-anchor="middle">1</text></svg>
<div style="left:1850.2px;top:994px;width:1px;height:34px;background:#5a5c62"></div>
<div style="left:333.2px;top:235.6px;width:1211px;height:513.2px;background:#fff;border:1px solid #6e6e6e;box-sizing:border-box;box-shadow:0 4px 13px rgba(0,0,0,.28)"></div>
<svg style="position:absolute;left:341.8px;top:244px" width="14.6" height="10" viewBox="0 0 14.5 10"><path d="M1.2 0H14.5L13.6 2.6H0.2Z" fill="#f07820"/><path d="M6.4 2.6H9.6L7.4 7.6H11.6L10.8 10H2.6L3.4 7.6Z" fill="#2a64b4"/><path d="M3.2 2.6H6.4L5.4 5H2.4Z" fill="#f07820"/></svg>
<span id="t80" style="top:241.80px;font-size:11.5px;line-height:16px;height:16px;color:#000;left:362.00px;letter-spacing:0.588px;">Current Model :  M1</span>
<svg style="position:absolute;left:1420px;top:238px" width="115" height="24" viewBox="1420 238 115 24" fill="none" stroke-width="1.15"><path d="M1429 249.4H1439" stroke="#111"/><rect x="1472.8" y="244.8" width="9" height="9" stroke="#c6c6c6"/><path d="M1516 244.4L1526 254.4M1526 244.4L1516 254.4" stroke="#111"/></svg>
<div style="left:337.3px;top:268.2px;width:1.5px;height:1.5px;background:#a0a0a0"></div>
<div style="left:337.3px;top:272.05px;width:1.5px;height:1.5px;background:#a0a0a0"></div>
<div style="left:337.3px;top:275.9px;width:1.5px;height:1.5px;background:#a0a0a0"></div>
<div style="left:337.3px;top:279.75px;width:1.5px;height:1.5px;background:#a0a0a0"></div>
<div style="left:337.3px;top:283.6px;width:1.5px;height:1.5px;background:#a0a0a0"></div>
<div style="left:337.3px;top:287.45px;width:1.5px;height:1.5px;background:#a0a0a0"></div>
<div style="left:337.3px;top:291.3px;width:1.5px;height:1.5px;background:#a0a0a0"></div>
<div style="left:379.8px;top:269.2px;width:1.2px;height:26.2px;background:#cfcfcf"></div>
<div style="left:423.7px;top:269.2px;width:1.2px;height:26.2px;background:#cfcfcf"></div>
<svg style="position:absolute;left:348.8px;top:271px" width="22" height="25" viewBox="0 0 22 25"><path d="M1.4 1.4H13L20.2 8.6V23.6H1.4Z" fill="#fff" stroke="#8a8a8a" stroke-width="1.1"/><path d="M13 1.4V8.6H20.2" fill="none" stroke="#8a8a8a" stroke-width="1.1"/></svg>
<svg style="position:absolute;left:388.6px;top:269.6px" width="26" height="26" viewBox="0 0 26 26"><rect x=".6" y=".6" width="24.6" height="24.6" rx="1.2" fill="#7d52a8"/><rect x="4" y="1" width="17.6" height="12" fill="#fff"/><path d="M6.4 4.6H19.2M6.4 7.8H19.2" stroke="#bdbdbd" stroke-width=".9"/><rect x="5.4" y="17.4" width="15.4" height="7.8" fill="#fff"/><rect x="8.2" y="18.8" width="3.6" height="6.4" fill="#7d52a8"/></svg>
<svg style="position:absolute;left:435px;top:271px" width="26" height="28" viewBox="0 0 26 28"><path d="M1.4 1.4H13L19.6 8V22.8H1.4Z" fill="#fff" stroke="#8a8a8a" stroke-width="1.1"/><path d="M13 1.4V8H19.6" fill="none" stroke="#8a8a8a" stroke-width="1.1"/><path d="M5 6.2H11.6M5 8.6H15.6M5 11H15.6M5 13.4H15.6M5 15.8H15.6M5 18.2H13M5 20.6H12" stroke="#5f8fcc" stroke-width="1.3"/><path d="M13.8 16.6L23.4 25.6M23.4 16.6L13.8 25.6" stroke="#fff" stroke-width="4.4"/><path d="M14.4 17.2L22.8 25M22.8 17.2L14.4 25" stroke="#d8552f" stroke-width="2.5"/></svg>
<div style="left:334.2px;top:299.6px;width:1209px;height:1.2px;background:#ebebeb"></div>
<div style="left:340.4px;top:306.6px;width:164.3px;height:407px;background:#fff;border:1px solid #a0a0a6;box-sizing:border-box"></div>
<div style="left:341.4px;top:307.6px;width:162.3px;height:23.2px;background:#2563af"></div>
<span id="t81" style="top:311.60px;font-size:11.4px;line-height:16px;height:16px;color:#fff;left:345.80px;letter-spacing:0.363px;">M1</span>
<span id="t82" style="top:335.60px;font-size:11.6px;line-height:16px;height:16px;color:#222;left:345.80px;letter-spacing:0.286px;">m2</span>
<div style="left:513.2px;top:314.2px;width:222.6px;height:39.8px;border:1px solid #dcdcdc;box-sizing:border-box"></div>
<div style="left:520.4px;top:310px;width:49.4px;height:9px;background:#fff"></div>
<span id="t83" style="top:306.90px;font-size:11.5px;line-height:16px;height:16px;color:#2b3ea2;left:522.10px;">负载设置</span>
<span id="t84" style="top:329.60px;font-size:11.4px;line-height:16px;height:16px;color:#444;left:546.90px;letter-spacing:0.457px;">R-Load :</span>
<div style="left:627px;top:327.4px;width:74.2px;height:19.3px;background:#fff;border:1px solid #a2a2c6;box-sizing:border-box"></div>
<span id="t85" style="top:329.40px;font-size:11.4px;line-height:16px;height:16px;color:#222;left:382.20px;width:300px;text-align:right;">500</span>
<svg style="position:absolute;left:689.6px;top:330px" width="6.8" height="14" viewBox="0 0 6.8 14"><path d="M.6 5L3.4 1.6L6.2 5Z" fill="#111"/><path d="M.6 9.2L3.4 12.6L6.2 9.2Z" fill="#111"/></svg>
<span id="t86" style="top:329.60px;font-size:11.6px;line-height:16px;height:16px;color:#444;left:713.10px;">Ω</span>
<div style="left:513.2px;top:372.1px;width:222.6px;height:340.5px;border:1px solid #dcdcdc;box-sizing:border-box"></div>
<div style="left:520.4px;top:367.6px;width:93.6px;height:9px;background:#fff"></div>
<span id="t87" style="top:364.30px;font-size:11.5px;line-height:16px;height:16px;color:#2b3ea2;left:522.00px;letter-spacing:-0.037px;">测试分档设置(nA)</span>
<div style="left:516.4px;top:382px;width:216.4px;height:19.4px;background:linear-gradient(#f8f8fa,#e9e9ef);border-bottom:1px solid #c6c6d2;box-sizing:border-box"></div>
<div style="left:534.1px;top:382px;width:1px;height:19px;background:#d4d4dc"></div>
<div style="left:596px;top:382px;width:1px;height:19px;background:#d4d4dc"></div>
<div style="left:663px;top:382px;width:1px;height:19px;background:#d4d4dc"></div>
<span id="t88" style="top:383.20px;font-size:11.3px;line-height:16px;height:16px;color:#111;font-weight:700;left:539.50px;letter-spacing:0.667px;">Range</span>
<span id="t89" style="top:383.20px;font-size:11.3px;line-height:16px;height:16px;color:#111;font-weight:700;left:601.20px;letter-spacing:-0.017px;">From</span>
<span id="t90" style="top:383.20px;font-size:11.3px;line-height:16px;height:16px;color:#111;font-weight:700;left:668.20px;letter-spacing:0.831px;">To</span>
<div style="left:596.5px;top:401.4px;width:136.3px;height:25.85px;background:#f0f0f3"></div>
<div style="left:516.4px;top:401.4px;width:18.2px;height:25.85px;background:linear-gradient(90deg,#f2f2f5,#f8f8fa);border-bottom:1px solid #c9c9d3;border-right:1px solid #d4d4dc;box-sizing:border-box"></div>
<span id="t91" style="top:407.02px;font-size:10.5px;line-height:15px;height:15px;color:#222;left:415.60px;width:300px;text-align:center;">R01</span>
<span id="t92" style="top:407.02px;font-size:10.5px;line-height:15px;height:15px;color:#222;left:360.40px;width:300px;text-align:right;">0</span>
<span id="t93" style="top:407.02px;font-size:10.5px;line-height:15px;height:15px;color:#222;left:429.70px;width:300px;text-align:right;">0</span>
<div style="left:534.6px;top:427.25px;width:198.2px;height:25.85px;background:#ececec"></div>
<div style="left:516.4px;top:427.25px;width:18.2px;height:25.85px;background:linear-gradient(90deg,#f2f2f5,#f8f8fa);border-bottom:1px solid #c9c9d3;border-right:1px solid #d4d4dc;box-sizing:border-box"></div>
<span id="t94" style="top:432.88px;font-size:10.5px;line-height:15px;height:15px;color:#222;left:415.60px;width:300px;text-align:center;">R02</span>
<span id="t95" style="top:432.88px;font-size:10.5px;line-height:15px;height:15px;color:#222;left:360.40px;width:300px;text-align:right;">0</span>
<span id="t96" style="top:432.88px;font-size:10.5px;line-height:15px;height:15px;color:#222;left:429.70px;width:300px;text-align:right;">0</span>
<div style="left:516.4px;top:453.1px;width:18.2px;height:25.85px;background:linear-gradient(90deg,#f2f2f5,#f8f8fa);border-bottom:1px solid #c9c9d3;border-right:1px solid #d4d4dc;box-sizing:border-box"></div>
<span id="t97" style="top:458.72px;font-size:10.5px;line-height:15px;height:15px;color:#222;left:415.60px;width:300px;text-align:center;">R03</span>
<span id="t98" style="top:458.72px;font-size:10.5px;line-height:15px;height:15px;color:#222;left:360.40px;width:300px;text-align:right;">0</span>
<span id="t99" style="top:458.72px;font-size:10.5px;line-height:15px;height:15px;color:#222;left:429.70px;width:300px;text-align:right;">0</span>
<div style="left:534.6px;top:478.95px;width:198.2px;height:25.85px;background:#ececec"></div>
<div style="left:516.4px;top:478.95px;width:18.2px;height:25.85px;background:linear-gradient(90deg,#f2f2f5,#f8f8fa);border-bottom:1px solid #c9c9d3;border-right:1px solid #d4d4dc;box-sizing:border-box"></div>
<span id="t100" style="top:484.57px;font-size:10.5px;line-height:15px;height:15px;color:#222;left:415.60px;width:300px;text-align:center;">R04</span>
<span id="t101" style="top:484.57px;font-size:10.5px;line-height:15px;height:15px;color:#222;left:360.40px;width:300px;text-align:right;">0</span>
<span id="t102" style="top:484.57px;font-size:10.5px;line-height:15px;height:15px;color:#222;left:429.70px;width:300px;text-align:right;">0</span>
<div style="left:516.4px;top:504.8px;width:18.2px;height:25.85px;background:linear-gradient(90deg,#f2f2f5,#f8f8fa);border-bottom:1px solid #c9c9d3;border-right:1px solid #d4d4dc;box-sizing:border-box"></div>
<span id="t103" style="top:510.42px;font-size:10.5px;line-height:15px;height:15px;color:#222;left:415.60px;width:300px;text-align:center;">R05</span>
<span id="t104" style="top:510.42px;font-size:10.5px;line-height:15px;height:15px;color:#222;left:360.40px;width:300px;text-align:right;">0</span>
<span id="t105" style="top:510.42px;font-size:10.5px;line-height:15px;height:15px;color:#222;left:429.70px;width:300px;text-align:right;">0</span>
<div style="left:534.6px;top:530.65px;width:198.2px;height:25.85px;background:#ececec"></div>
<div style="left:516.4px;top:530.65px;width:18.2px;height:25.85px;background:linear-gradient(90deg,#f2f2f5,#f8f8fa);border-bottom:1px solid #c9c9d3;border-right:1px solid #d4d4dc;box-sizing:border-box"></div>
<span id="t106" style="top:536.27px;font-size:10.5px;line-height:15px;height:15px;color:#222;left:415.60px;width:300px;text-align:center;">R06</span>
<span id="t107" style="top:536.27px;font-size:10.5px;line-height:15px;height:15px;color:#222;left:360.40px;width:300px;text-align:right;">0</span>
<span id="t108" style="top:536.27px;font-size:10.5px;line-height:15px;height:15px;color:#222;left:429.70px;width:300px;text-align:right;">0</span>
<div style="left:516.4px;top:556.5px;width:18.2px;height:25.85px;background:linear-gradient(90deg,#f2f2f5,#f8f8fa);border-bottom:1px solid #c9c9d3;border-right:1px solid #d4d4dc;box-sizing:border-box"></div>
<span id="t109" style="top:562.12px;font-size:10.5px;line-height:15px;height:15px;color:#222;left:415.60px;width:300px;text-align:center;">R07</span>
<span id="t110" style="top:562.12px;font-size:10.5px;line-height:15px;height:15px;color:#222;left:360.40px;width:300px;text-align:right;">0</span>
<span id="t111" style="top:562.12px;font-size:10.5px;line-height:15px;height:15px;color:#222;left:429.70px;width:300px;text-align:right;">0</span>
<div style="left:534.6px;top:582.35px;width:198.2px;height:25.85px;background:#ececec"></div>
<div style="left:516.4px;top:582.35px;width:18.2px;height:25.85px;background:linear-gradient(90deg,#f2f2f5,#f8f8fa);border-bottom:1px solid #c9c9d3;border-right:1px solid #d4d4dc;box-sizing:border-box"></div>
<span id="t112" style="top:587.98px;font-size:10.5px;line-height:15px;height:15px;color:#222;left:415.60px;width:300px;text-align:center;">R08</span>
<span id="t113" style="top:587.98px;font-size:10.5px;line-height:15px;height:15px;color:#222;left:360.40px;width:300px;text-align:right;">0</span>
<span id="t114" style="top:587.98px;font-size:10.5px;line-height:15px;height:15px;color:#222;left:429.70px;width:300px;text-align:right;">0</span>
<div style="left:516.4px;top:608.2px;width:18.2px;height:25.85px;background:linear-gradient(90deg,#f2f2f5,#f8f8fa);border-bottom:1px solid #c9c9d3;border-right:1px solid #d4d4dc;box-sizing:border-box"></div>
<span id="t115" style="top:613.83px;font-size:10.5px;line-height:15px;height:15px;color:#222;left:415.60px;width:300px;text-align:center;">R09</span>
<span id="t116" style="top:613.83px;font-size:10.5px;line-height:15px;height:15px;color:#222;left:360.40px;width:300px;text-align:right;">0</span>
<span id="t117" style="top:613.83px;font-size:10.5px;line-height:15px;height:15px;color:#222;left:429.70px;width:300px;text-align:right;">0</span>
<div style="left:534.6px;top:634.05px;width:198.2px;height:25.85px;background:#ececec"></div>
<div style="left:516.4px;top:634.05px;width:18.2px;height:25.85px;background:linear-gradient(90deg,#f2f2f5,#f8f8fa);border-bottom:1px solid #c9c9d3;border-right:1px solid #d4d4dc;box-sizing:border-box"></div>
<span id="t118" style="top:639.67px;font-size:10.5px;line-height:15px;height:15px;color:#222;left:415.60px;width:300px;text-align:center;">R10</span>
<span id="t119" style="top:639.67px;font-size:10.5px;line-height:15px;height:15px;color:#222;left:360.40px;width:300px;text-align:right;">-2000</span>
<span id="t120" style="top:639.67px;font-size:10.5px;line-height:15px;height:15px;color:#222;left:429.70px;width:300px;text-align:right;">2000</span>
<div style="left:516.4px;top:659.9px;width:18.2px;height:25.85px;background:linear-gradient(90deg,#f2f2f5,#f8f8fa);border-bottom:1px solid #c9c9d3;border-right:1px solid #d4d4dc;box-sizing:border-box"></div>
<span id="t121" style="top:665.52px;font-size:10.5px;line-height:15px;height:15px;color:#222;left:415.60px;width:300px;text-align:center;">R11</span>
<span id="t122" style="top:665.52px;font-size:10.5px;line-height:15px;height:15px;color:#222;left:360.40px;width:300px;text-align:right;">0</span>
<span id="t123" style="top:665.52px;font-size:10.5px;line-height:15px;height:15px;color:#222;left:429.70px;width:300px;text-align:right;">0</span>
<div style="left:534.6px;top:685.75px;width:198.2px;height:24.85px;background:#ececec"></div>
<div style="left:516.4px;top:685.75px;width:18.2px;height:24.85px;background:linear-gradient(90deg,#f2f2f5,#f8f8fa);border-bottom:1px solid #c9c9d3;border-right:1px solid #d4d4dc;box-sizing:border-box"></div>
<span id="t124" style="top:691.38px;font-size:10.5px;line-height:15px;height:15px;color:#222;left:415.60px;width:300px;text-align:center;">R12</span>
<span id="t125" style="top:691.38px;font-size:10.5px;line-height:15px;height:15px;color:#222;left:360.40px;width:300px;text-align:right;">0</span>
<span id="t126" style="top:691.38px;font-size:10.5px;line-height:15px;height:15px;color:#222;left:429.70px;width:300px;text-align:right;">0</span>
<svg style="position:absolute;left:521.5px;top:410.4px" width="5" height="8" viewBox="0 0 5 8"><path d="M.4 .4L4.4 4L.4 7.6Z" fill="#111"/></svg>
<div style="left:744.3px;top:314.3px;width:790.8px;height:398.4px;border:1px solid #dcdcdc;box-sizing:border-box"></div>
<div style="left:751px;top:310px;width:72.6px;height:9px;background:#fff"></div>
<span id="t127" style="top:306.90px;font-size:11.5px;line-height:16px;height:16px;color:#2b3ea2;left:752.60px;letter-spacing:0.079px;">测试时间设置</span>
<svg style="position:absolute;left:745px;top:316px" width="789" height="396" viewBox="745 316 789 396"><path d="M800 696V346" stroke="#2d5ebc" stroke-width="1.9"/><path d="M800 342.6L796.8 349.6H803.2Z" fill="#2d5ebc"/><path d="M748 615H1474" stroke="#2d5ebc" stroke-width="1.9"/><path d="M1481 615L1473.4 611.6V618.4Z" fill="#2d5ebc"/><path d="M871.8 569V614" stroke="#ee7a30" stroke-width="1.15" stroke-dasharray="1.15 1.3"/><path d="M950.7 569V614" stroke="#ee7a30" stroke-width="1.15" stroke-dasharray="1.15 1.3"/><path d="M976.4 384.4V614" stroke="#ee7a30" stroke-width="1.15" stroke-dasharray="1.15 1.3"/><path d="M1154.6 434V614" stroke="#ee7a30" stroke-width="1.15" stroke-dasharray="1.15 1.3"/><path d="M1309.3 434V614" stroke="#ee7a30" stroke-width="1.15" stroke-dasharray="1.15 1.3"/><path d="M1366.7 434V614" stroke="#ee7a30" stroke-width="1.15" stroke-dasharray="1.15 1.3"/><path d="M1386.9 377.4V614" stroke="#ee7a30" stroke-width="1.15" stroke-dasharray="1.15 1.3"/><path d="M800.4 531.6C801.4 545 808 556 820 562.6C830 567.4 840 568.6 850 568.6H976.4L1062 482C1090 455 1118 433 1154.6 432.7C1166 432.2 1174 434 1182 433.7L1386.9 432.8" fill="none" stroke="#5d9a32" stroke-width="1.9" stroke-linejoin="round"/><text x="800" y="337" font-family='"Liberation Sans","Noto Sans CJK SC",sans-serif' font-size="16.4" fill="#5d9a32" text-anchor="middle">A(nA)</text><text x="1485.6" y="620.6" font-family='"Liberation Sans","Noto Sans CJK SC",sans-serif' font-size="16" fill="#5d9a32" text-anchor="start">T(mS)</text><text x="789.2" y="632" font-family='"Liberation Sans","Noto Sans CJK SC",sans-serif' font-size="16.2" fill="#5d9a32" text-anchor="middle">T0</text><text x="872" y="632" font-family='"Liberation Sans","Noto Sans CJK SC",sans-serif' font-size="16.2" fill="#5d9a32" text-anchor="middle">T1</text><text x="949.8" y="632" font-family='"Liberation Sans","Noto Sans CJK SC",sans-serif' font-size="16.2" fill="#5d9a32" text-anchor="middle">T2</text><text x="975.8" y="632" font-family='"Liberation Sans","Noto Sans CJK SC",sans-serif' font-size="16.2" fill="#5d9a32" text-anchor="middle">T3</text><text x="1154.6" y="632" font-family='"Liberation Sans","Noto Sans CJK SC",sans-serif' font-size="16.2" fill="#5d9a32" text-anchor="middle">T4</text><text x="1300.4" y="632" font-family='"Liberation Sans","Noto Sans CJK SC",sans-serif' font-size="16.2" fill="#5d9a32" text-anchor="middle">T5</text><text x="1359.8" y="632" font-family='"Liberation Sans","Noto Sans CJK SC",sans-serif' font-size="16.2" fill="#5d9a32" text-anchor="middle">T6</text><text x="1387" y="632" font-family='"Liberation Sans","Noto Sans CJK SC",sans-serif' font-size="16.2" fill="#5d9a32" text-anchor="middle">T7</text><text x="852" y="411.4" font-family='"Liberation Sans","Noto Sans CJK SC",sans-serif' font-size="17.8" fill="#7f7f7f">零点测试</text><text x="1198.2" y="409.4" font-family='"Liberation Sans","Noto Sans CJK SC",sans-serif' font-size="17.8" fill="#7f7f7f">反应值测试</text><path d="M872.4 636V652.6H841.3V666" stroke="#3a68c0" stroke-width="1" fill="none"/><path d="M838.6999999999999 665H843.9L841.3 671Z" fill="#3a68c0"/><path d="M949.4 636V652.6H917.9V666" stroke="#3a68c0" stroke-width="1" fill="none"/><path d="M915.3 665H920.5L917.9 671Z" fill="#3a68c0"/><path d="M974.4 636V652.6H1005.6V666" stroke="#3a68c0" stroke-width="1" fill="none"/><path d="M1003.0 665H1008.2L1005.6 671Z" fill="#3a68c0"/><path d="M1155 638V665" stroke="#3a68c0" stroke-width="1" fill="none"/><path d="M1152.4 665H1157.6L1155 671Z" fill="#3a68c0"/><path d="M1300.4 636V652.6H1268.4V666" stroke="#3a68c0" stroke-width="1" fill="none"/><path d="M1265.8000000000002 665H1271.0L1268.4 671Z" fill="#3a68c0"/><path d="M1360.4 636V652.6H1328.9V666" stroke="#3a68c0" stroke-width="1" fill="none"/><path d="M1326.3000000000002 665H1331.5L1328.9 671Z" fill="#3a68c0"/><path d="M1386.1 636V652.6H1417.6V666" stroke="#3a68c0" stroke-width="1" fill="none"/><path d="M1415.0 665H1420.1999999999998L1417.6 671Z" fill="#3a68c0"/></svg>
<div style="left:805px;top:675.1px;width:64.2px;height:18.8px;background:#fff;border:1px solid #9d9dc4;box-sizing:border-box"></div>
<span id="t128" style="top:676.60px;font-size:11.4px;line-height:16px;height:16px;color:#222;left:550.40px;width:300px;text-align:right;">300</span>
<svg style="position:absolute;left:857.8px;top:677.4px" width="6.8" height="14" viewBox="0 0 6.8 14"><path d="M.6 5L3.4 1.6L6.2 5Z" fill="#111"/><path d="M.6 9.2L3.4 12.6L6.2 9.2Z" fill="#111"/></svg>
<div style="left:888.2px;top:675.1px;width:64.2px;height:18.8px;background:#fff;border:1px solid #9d9dc4;box-sizing:border-box"></div>
<span id="t129" style="top:676.60px;font-size:11.4px;line-height:16px;height:16px;color:#222;left:633.60px;width:300px;text-align:right;">300</span>
<svg style="position:absolute;left:941px;top:677.4px" width="6.8" height="14" viewBox="0 0 6.8 14"><path d="M.6 5L3.4 1.6L6.2 5Z" fill="#111"/><path d="M.6 9.2L3.4 12.6L6.2 9.2Z" fill="#111"/></svg>
<div style="left:971.3px;top:675.1px;width:64.2px;height:18.8px;background:#fff;border:1px solid #9d9dc4;box-sizing:border-box"></div>
<span id="t130" style="top:676.60px;font-size:11.4px;line-height:16px;height:16px;color:#222;left:716.70px;width:300px;text-align:right;">300</span>
<svg style="position:absolute;left:1024.1px;top:677.4px" width="6.8" height="14" viewBox="0 0 6.8 14"><path d="M.6 5L3.4 1.6L6.2 5Z" fill="#111"/><path d="M.6 9.2L3.4 12.6L6.2 9.2Z" fill="#111"/></svg>
<div style="left:1121px;top:675.1px;width:64.2px;height:18.8px;background:#fff;border:1px solid #9d9dc4;box-sizing:border-box"></div>
<span id="t131" style="top:676.60px;font-size:11.4px;line-height:16px;height:16px;color:#222;left:866.40px;width:300px;text-align:right;">300</span>
<svg style="position:absolute;left:1173.8px;top:677.4px" width="6.8" height="14" viewBox="0 0 6.8 14"><path d="M.6 5L3.4 1.6L6.2 5Z" fill="#111"/><path d="M.6 9.2L3.4 12.6L6.2 9.2Z" fill="#111"/></svg>
<div style="left:1230.1px;top:675.1px;width:64.2px;height:18.8px;background:#fff;border:1px solid #9d9dc4;box-sizing:border-box"></div>
<span id="t132" style="top:676.60px;font-size:11.4px;line-height:16px;height:16px;color:#222;left:975.50px;width:300px;text-align:right;">300</span>
<svg style="position:absolute;left:1282.9px;top:677.4px" width="6.8" height="14" viewBox="0 0 6.8 14"><path d="M.6 5L3.4 1.6L6.2 5Z" fill="#111"/><path d="M.6 9.2L3.4 12.6L6.2 9.2Z" fill="#111"/></svg>
<div style="left:1299.9px;top:675.1px;width:64.2px;height:18.8px;background:#fff;border:1px solid #9d9dc4;box-sizing:border-box"></div>
<span id="t133" style="top:676.60px;font-size:11.4px;line-height:16px;height:16px;color:#222;left:1042.10px;width:300px;text-align:right;">302</span>
<svg style="position:absolute;left:1351.3px;top:677.4px" width="6.8" height="14" viewBox="0 0 6.8 14"><path d="M.6 5L3.4 1.6L6.2 5Z" fill="#b0b0b0"/><path d="M.6 9.2L3.4 12.6L6.2 9.2Z" fill="#b0b0b0"/></svg>
<div style="left:1383.2px;top:674.8px;width:65px;height:19.4px;background:#fff;border:1.6px solid #1c2a90;box-sizing:border-box"></div>
<div style="left:1409px;top:678px;width:20.2px;height:13px;background:#2a6ac4"></div>
<span id="t134" style="top:676.60px;font-size:11.4px;line-height:16px;height:16px;color:#fff;left:1129.00px;width:300px;text-align:right;">300</span>
<svg style="position:absolute;left:1436.6px;top:677.4px" width="6.8" height="14" viewBox="0 0 6.8 14"><path d="M.6 5L3.4 1.6L6.2 5Z" fill="#111"/><path d="M.6 9.2L3.4 12.6L6.2 9.2Z" fill="#111"/></svg>
<div style="left:334.2px;top:721.8px;width:1207px;height:26px;background:#f0f0f0;border-top:1px solid #e2e2e2;box-sizing:border-box"></div>
<div style="left:1538.3px;top:736.1px;width:1.8px;height:1.8px;background:#8a8a8a"></div>
<div style="left:1534.4px;top:739.9px;width:1.8px;height:1.8px;background:#8a8a8a"></div>
<div style="left:1538.3px;top:739.9px;width:1.8px;height:1.8px;background:#8a8a8a"></div>
<div style="left:1530.6px;top:743.7px;width:1.8px;height:1.8px;background:#8a8a8a"></div>
<div style="left:1534.4px;top:743.7px;width:1.8px;height:1.8px;background:#8a8a8a"></div>
<div style="left:1538.3px;top:743.7px;width:1.8px;height:1.8px;background:#8a8a8a"></div>
</body></html>
